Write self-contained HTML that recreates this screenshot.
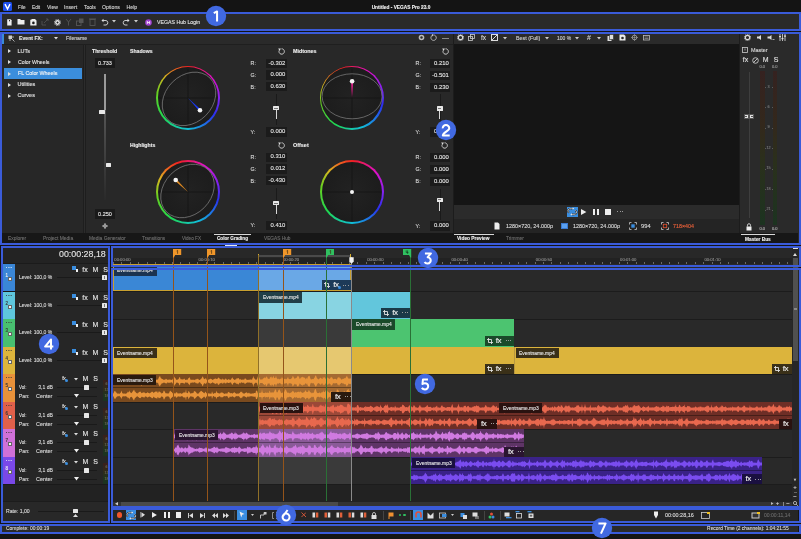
<!DOCTYPE html><html><head><meta charset="utf-8"><style>
html,body{margin:0;padding:0;background:#141414;}
#r{will-change:transform;position:relative;width:801px;height:539px;overflow:hidden;font-family:"Liberation Sans",sans-serif;}
.a{position:absolute;box-sizing:border-box;}
.t{position:absolute;white-space:nowrap;-webkit-text-stroke:0.12px currentColor;}
</style></head><body><div id="r">
<div class="a" style="left:0px;top:0px;width:801px;height:539px;background:#141414;"></div>
<div class="a" style="left:3px;top:2px;width:9px;height:9px;background:#1d4ff0;border-radius:1.5px;"></div>
<svg class="a" style="left:3px;top:2px;" width="9" height="9" viewBox="0 0 9 9"><path d="M2 2.2 L4.5 7 L7 2.2" fill="none" stroke="#fff" stroke-width="1.5"/></svg>
<div class="t" style="left:17.5px;top:3.62px;font-size:5.2px;line-height:6.76px;color:#d2d2d2;transform:scaleX(0.897);transform-origin:left;">File</div>
<div class="t" style="left:32px;top:3.62px;font-size:5.2px;line-height:6.76px;color:#d2d2d2;transform:scaleX(0.916);transform-origin:left;">Edit</div>
<div class="t" style="left:47px;top:3.62px;font-size:5.2px;line-height:6.76px;color:#d2d2d2;transform:scaleX(0.977);transform-origin:left;">View</div>
<div class="t" style="left:64px;top:3.62px;font-size:5.2px;line-height:6.76px;color:#d2d2d2;transform:scaleX(1.017);transform-origin:left;">Insert</div>
<div class="t" style="left:84px;top:3.62px;font-size:5.2px;line-height:6.76px;color:#d2d2d2;transform:scaleX(0.966);transform-origin:left;">Tools</div>
<div class="t" style="left:102px;top:3.62px;font-size:5.2px;line-height:6.76px;color:#d2d2d2;">Options</div>
<div class="t" style="left:126.5px;top:3.62px;font-size:5.2px;line-height:6.76px;color:#d2d2d2;">Help</div>
<div class="t" style="left:300.5px;width:200px;text-align:center;top:3.62px;font-size:5.2px;line-height:6.76px;color:#f0f0f0;font-weight:bold;transform:scaleX(0.922);transform-origin:center;">Untitled - VEGAS Pro 23.0</div>
<div class="a" style="left:0px;top:13px;width:801px;height:17px;background:#2a2a2a;"></div>
<svg class="a" style="left:6.5px;top:18.5px;" width="5" height="7" viewBox="0 0 5 7"><path d="M0.2 0.3 H3.6 L4.6 1.3 V6.5 H0.2 Z" fill="#eee"/><rect x="2" y="1" width="1" height="1.3" fill="#333"/></svg>
<svg class="a" style="left:17px;top:18px;" width="8" height="7" viewBox="0 0 8 7"><path d="M0.5 1 H3 L4 2 H7.5 V6.5 H0.5 Z" fill="#eee"/></svg>
<svg class="a" style="left:29.5px;top:18.5px;" width="7" height="7" viewBox="0 0 7 7"><path d="M0.3 0.8 H1.5 V0 H5 L6.5 1.5 V6.5 H0.3 Z" fill="#eee"/><circle cx="3.4" cy="3.9" r="1.3" fill="#1a1a1a"/></svg>
<svg class="a" style="left:41px;top:18px;" width="8" height="8" viewBox="0 0 8 8"><path d="M1 3 V7 H5 M3 5 L7 1 M5 1 H7 V3" fill="none" stroke="#555" stroke-width="0.8"/></svg>
<svg class="a" style="left:53.5px;top:18.5px;" width="7" height="7" viewBox="0 0 7 7"><circle cx="3.5" cy="3.5" r="2.4" fill="#eee"/><circle cx="3.5" cy="3.5" r="3.1" fill="none" stroke="#eee" stroke-width="0.9" stroke-dasharray="1.1 1.3"/><circle cx="3.5" cy="3.5" r="1" fill="#222"/></svg>
<svg class="a" style="left:65px;top:18px;" width="7" height="8" viewBox="0 0 7 8"><path d="M3.5 7.5 V4 M3.5 4 L1 1 M3.5 4 L6 1" fill="none" stroke="#555" stroke-width="0.9"/></svg>
<svg class="a" style="left:76px;top:18px;" width="8" height="8" viewBox="0 0 8 8"><rect x="0.5" y="3" width="4.5" height="4.5" fill="none" stroke="#555" stroke-width="0.9"/><rect x="3" y="0.5" width="4.5" height="4.5" fill="#555"/></svg>
<svg class="a" style="left:89px;top:18px;" width="7" height="8" viewBox="0 0 7 8"><rect x="1" y="1.5" width="5" height="6" fill="none" stroke="#555" stroke-width="0.9"/><rect x="0" y="0.5" width="7" height="1" fill="#555"/></svg>
<svg class="a" style="left:101px;top:18px;" width="8" height="8" viewBox="0 0 8 8"><path d="M2 2.5 H5 A2.3 2.3 0 0 1 5 7 H2.5" fill="none" stroke="#ddd" stroke-width="0.9"/><path d="M0.5 2.5 L2.5 0.8 V4.2 Z" fill="#ddd"/></svg>
<svg class="a" style="left:112px;top:20px;" width="4" height="3" viewBox="0 0 4 3"><path d="M0 0 H4 L2 2.5 Z" fill="#ccc"/></svg>
<svg class="a" style="left:122px;top:18px;" width="8" height="8" viewBox="0 0 8 8"><path d="M6 2.5 H3 A2.3 2.3 0 0 0 3 7 H5.5" fill="none" stroke="#ddd" stroke-width="0.9"/><path d="M7.5 2.5 L5.5 0.8 V4.2 Z" fill="#ddd"/></svg>
<svg class="a" style="left:134px;top:20px;" width="4" height="3" viewBox="0 0 4 3"><path d="M0 0 H4 L2 2.5 Z" fill="#ccc"/></svg>
<svg class="a" style="left:144.5px;top:18.5px;" width="7" height="7" viewBox="0 0 7 7"><circle cx="3.5" cy="3.5" r="3.3" fill="#a040d0"/><path d="M2.3 2 V5 M4.7 2 V5 M2.3 3.5 H4.7" stroke="#fff" stroke-width="0.8"/></svg>
<div class="t" style="left:156.5px;top:18.62px;font-size:5.2px;line-height:6.76px;color:#e0e0e0;transform:scaleX(1.005);transform-origin:left;">VEGAS Hub Login</div>
<div class="a" style="left:0px;top:32px;width:801px;height:213px;background:#282828;"></div>
<div class="a" style="left:0px;top:33px;width:453px;height:11px;background:#2a2a2a;"></div>
<div class="a" style="left:0px;top:44px;width:453px;height:1px;background:#1f1f1f;"></div>
<div class="a" style="left:2px;top:34px;width:1.5px;height:10px;background:#3a8ad8;"></div>
<svg class="a" style="left:8px;top:34.5px;" width="7" height="7" viewBox="0 0 7 7"><rect x="0.5" y="0.5" width="3.5" height="3.5" fill="#ccc"/><path d="M4 4 L6.5 6.5 M1 5 H3 M5 1 V3" stroke="#ccc" stroke-width="0.8"/></svg>
<div class="t" style="left:19px;top:34.72px;font-size:5.5px;line-height:7.15px;color:#e8e8e8;font-weight:bold;transform:scaleX(0.934);transform-origin:left;">Event FX:</div>
<svg class="a" style="left:53.5px;top:37.3px;" width="4" height="3" viewBox="0 0 4 3"><path d="M0 0 H4 L2 2.5 Z" fill="#ddd"/></svg>
<div class="t" style="left:65.5px;top:34.72px;font-size:5.5px;line-height:7.15px;color:#d8d8d8;transform:scaleX(0.933);transform-origin:left;">Filename</div>
<svg class="a" style="left:418px;top:34px;" width="7" height="7" viewBox="0 0 7 7"><circle cx="3.5" cy="3.5" r="2.8" fill="#bbb"/><circle cx="3.5" cy="3.5" r="1.2" fill="#2a2a2a"/></svg>
<svg class="a" style="left:430px;top:34px;" width="7" height="7" viewBox="0 0 7 7"><path d="M1.5 2 A2.7 2.7 0 1 0 3.5 1 H2" fill="none" stroke="#ccc" stroke-width="0.8"/><path d="M3 0 L1.2 1.2 L3 2.4 Z" fill="#ccc"/></svg>
<div class="a" style="left:442px;top:38px;width:7px;height:0.8px;background:#8a8a8a;"></div>
<div class="a" style="left:0px;top:45px;width:83px;height:188px;background:#272727;"></div>
<div class="a" style="left:83px;top:45px;width:1px;height:188px;background:#1e1e1e;"></div>
<div class="a" style="left:84px;top:45px;width:1px;height:188px;background:#2c2c2c;"></div>
<div class="a" style="left:85px;top:45px;width:1px;height:188px;background:#1e1e1e;"></div>
<div class="a" style="left:4px;top:68px;width:78px;height:11px;background:#3b8edc;"></div>
<svg class="a" style="left:7.5px;top:49px;" width="3" height="4" viewBox="0 0 3 4"><path d="M0 0 L3 2 L0 4 Z" fill="#ddd"/></svg>
<div class="t" style="left:17.5px;top:47.72px;font-size:5.5px;line-height:7.15px;color:#e0e0e0;">LUTs</div>
<svg class="a" style="left:7.5px;top:60.3px;" width="3" height="4" viewBox="0 0 3 4"><path d="M0 0 L3 2 L0 4 Z" fill="#ddd"/></svg>
<div class="t" style="left:17.5px;top:59.02px;font-size:5.5px;line-height:7.15px;color:#e0e0e0;transform:scaleX(0.954);transform-origin:left;">Color Wheels</div>
<svg class="a" style="left:7.5px;top:71.5px;" width="3" height="4" viewBox="0 0 3 4"><path d="M0 0 L3 2 L0 4 Z" fill="#ddd"/></svg>
<div class="t" style="left:17.5px;top:70.22px;font-size:5.5px;line-height:7.15px;color:#f4f4f4;transform:scaleX(0.964);transform-origin:left;">FL Color Wheels</div>
<svg class="a" style="left:7.5px;top:82.5px;" width="3" height="4" viewBox="0 0 3 4"><path d="M0 0 L3 2 L0 4 Z" fill="#ddd"/></svg>
<div class="t" style="left:17.5px;top:81.22px;font-size:5.5px;line-height:7.15px;color:#e0e0e0;">Utilities</div>
<svg class="a" style="left:7.5px;top:93.5px;" width="3" height="4" viewBox="0 0 3 4"><path d="M0 0 L3 2 L0 4 Z" fill="#ddd"/></svg>
<div class="t" style="left:17.5px;top:92.22px;font-size:5.5px;line-height:7.15px;color:#e0e0e0;">Curves</div>
<div class="a" style="left:86px;top:45px;width:367px;height:188px;background:#282828;"></div>
<div class="t" style="left:92.2px;top:47.72px;font-size:5.5px;line-height:7.15px;color:#eeeeee;font-weight:bold;transform:scaleX(0.948);transform-origin:left;">Threshold</div>
<div class="t" style="left:129.7px;top:47.72px;font-size:5.5px;line-height:7.15px;color:#eeeeee;font-weight:bold;transform:scaleX(0.936);transform-origin:left;">Shadows</div>
<div class="a" style="left:95px;top:58px;width:20px;height:10px;background:#1a1a1a;"></div>
<div class="t" style="left:5px;width:200px;text-align:center;top:59.62px;font-size:5.5px;line-height:7.15px;color:#e8e8e8;">0.733</div>
<div class="a" style="left:104px;top:74px;width:1.5px;height:36px;background:#9a9a9a;"></div>
<div class="a" style="left:104px;top:110px;width:1.5px;height:90px;background:linear-gradient(#555,#2a2a2a);"></div>
<div class="a" style="left:98.5px;top:110px;width:6px;height:4px;background:#e8e8e8;border-radius:0.5px;"></div>
<div class="a" style="left:105.5px;top:163px;width:5.5px;height:4px;background:#e8e8e8;border-radius:0.5px;"></div>
<div class="a" style="left:95px;top:209px;width:20px;height:10px;background:#1a1a1a;"></div>
<div class="t" style="left:5px;width:200px;text-align:center;top:210.62px;font-size:5.5px;line-height:7.15px;color:#e8e8e8;">0.250</div>
<svg class="a" style="left:101.5px;top:222.5px;" width="6" height="6" viewBox="0 0 6 6"><path d="M3 0 V6 M0 3 H6" stroke="#bbb" stroke-width="0.9"/><circle cx="3" cy="3" r="1.5" fill="none" stroke="#bbb" stroke-width="0.7"/></svg>
<div class="a" style="left:156px;top:65.7px;width:64px;height:64px;border-radius:50%;background:conic-gradient(from 0deg,#f02020,#e010c8 50deg,#8a20f0 88deg,#2a30f0 122deg,#10c0d8 180deg,#20d850 232deg,#68d020 280deg,#d8b820 312deg,#f06020 338deg,#f02020 360deg);"></div>
<div class="a" style="left:157.7px;top:67.4px;width:60.6px;height:60.6px;border-radius:50%;background:radial-gradient(circle,#222222 0%,#1c1c1c 75%,#141414 100%);"></div>
<svg class="a" style="left:156px;top:65.7px;" width="64" height="64" viewBox="0 0 64 64"><line x1="32" y1="3" x2="32" y2="61" stroke="#141414" stroke-width="0.8"/><line x1="3" y1="32" x2="61" y2="32" stroke="#141414" stroke-width="0.8"/><ellipse cx="33" cy="32.89999999999999" rx="29.6" ry="23.6" transform="rotate(-45 33 32.89999999999999)" fill="none" stroke="#7c7c7c" stroke-width="0.75"/><path d="M32 32 L43.21 45.07 L44.79 43.53 Z" fill="#1838f0"/><circle cx="44" cy="44.3" r="2.3" fill="#f4f4f4"/></svg>
<div class="a" style="left:156px;top:160px;width:64px;height:64px;border-radius:50%;background:conic-gradient(from -18deg,#f02020,#e010c8 50deg,#8a20f0 88deg,#2a30f0 122deg,#10c0d8 180deg,#20d850 232deg,#68d020 280deg,#d8b820 312deg,#f06020 338deg,#f02020 360deg);"></div>
<div class="a" style="left:157.7px;top:161.7px;width:60.6px;height:60.6px;border-radius:50%;background:radial-gradient(circle,#222222 0%,#1c1c1c 75%,#141414 100%);"></div>
<svg class="a" style="left:156px;top:160px;" width="64" height="64" viewBox="0 0 64 64"><line x1="32" y1="3" x2="32" y2="61" stroke="#141414" stroke-width="0.8"/><line x1="3" y1="32" x2="61" y2="32" stroke="#141414" stroke-width="0.8"/><ellipse cx="31.5" cy="31" rx="29.6" ry="23.6" transform="rotate(-45 31.5 31)" fill="none" stroke="#7c7c7c" stroke-width="0.75"/><path d="M32 32 L20.47 19.21 L18.93 20.79 Z" fill="#e08a20"/><circle cx="19.69999999999999" cy="20" r="2.3" fill="#f4f4f4"/></svg>
<div class="a" style="left:319.6px;top:65.7px;width:64px;height:64px;border-radius:50%;background:conic-gradient(from -18deg,#f02020,#e010c8 50deg,#8a20f0 88deg,#2a30f0 122deg,#10c0d8 180deg,#20d850 232deg,#68d020 280deg,#d8b820 312deg,#f06020 338deg,#f02020 360deg);"></div>
<div class="a" style="left:321.3px;top:67.4px;width:60.6px;height:60.6px;border-radius:50%;background:radial-gradient(circle,#222222 0%,#1c1c1c 75%,#141414 100%);"></div>
<svg class="a" style="left:319.6px;top:65.7px;" width="64" height="64" viewBox="0 0 64 64"><line x1="32" y1="3" x2="32" y2="61" stroke="#141414" stroke-width="0.8"/><line x1="3" y1="32" x2="61" y2="32" stroke="#141414" stroke-width="0.8"/><ellipse cx="32.099999999999966" cy="30.299999999999997" rx="30" ry="22.5" transform="rotate(0 32.099999999999966 30.299999999999997)" fill="none" stroke="#7c7c7c" stroke-width="0.75"/><path d="M32 32 L33.20 15.31 L31.00 15.29 Z" fill="#e0208a"/><circle cx="32.099999999999966" cy="15.299999999999997" r="2.3" fill="#f4f4f4"/></svg>
<div class="a" style="left:319.8px;top:159.8px;width:64px;height:64px;border-radius:50%;background:conic-gradient(from 0deg,#f02020,#e010c8 50deg,#8a20f0 88deg,#2a30f0 122deg,#10c0d8 180deg,#20d850 232deg,#68d020 280deg,#d8b820 312deg,#f06020 338deg,#f02020 360deg);"></div>
<div class="a" style="left:321.5px;top:161.5px;width:60.6px;height:60.6px;border-radius:50%;background:radial-gradient(circle,#222222 0%,#1c1c1c 75%,#141414 100%);"></div>
<svg class="a" style="left:319.8px;top:159.8px;" width="64" height="64" viewBox="0 0 64 64"><line x1="32" y1="3" x2="32" y2="61" stroke="#141414" stroke-width="0.8"/><line x1="3" y1="32" x2="61" y2="32" stroke="#141414" stroke-width="0.8"/></svg>
<div class="a" style="left:349.8px;top:189.8px;width:4px;height:4px;background:#f4f4f4;border-radius:50%;"></div>
<div class="t" style="left:129.7px;top:142.03px;font-size:5.5px;line-height:7.15px;color:#eeeeee;font-weight:bold;transform:scaleX(0.941);transform-origin:left;">Highlights</div>
<div class="t" style="left:293px;top:47.72px;font-size:5.5px;line-height:7.15px;color:#eeeeee;font-weight:bold;transform:scaleX(0.978);transform-origin:left;">Midtones</div>
<div class="t" style="left:293.3px;top:141.73px;font-size:5.5px;line-height:7.15px;color:#eeeeee;font-weight:bold;transform:scaleX(0.988);transform-origin:left;">Offset</div>
<svg class="a" style="left:277.7px;top:47.7px;" width="7" height="7" viewBox="0 0 7 7"><path d="M1.2 2.4 A2.7 2.7 0 1 0 3.5 0.8" fill="none" stroke="#dddddd" stroke-width="0.85"/><path d="M0.2 0.6 L2.9 0.4 L1.6 3 Z" fill="#dddddd"/></svg>
<svg class="a" style="left:277.7px;top:142.0px;" width="7" height="7" viewBox="0 0 7 7"><path d="M1.2 2.4 A2.7 2.7 0 1 0 3.5 0.8" fill="none" stroke="#dddddd" stroke-width="0.85"/><path d="M0.2 0.6 L2.9 0.4 L1.6 3 Z" fill="#dddddd"/></svg>
<svg class="a" style="left:441.5px;top:47.8px;" width="7" height="7" viewBox="0 0 7 7"><path d="M1.2 2.4 A2.7 2.7 0 1 0 3.5 0.8" fill="none" stroke="#dddddd" stroke-width="0.85"/><path d="M0.2 0.6 L2.9 0.4 L1.6 3 Z" fill="#dddddd"/></svg>
<svg class="a" style="left:441.3px;top:141.8px;" width="7" height="7" viewBox="0 0 7 7"><path d="M1.2 2.4 A2.7 2.7 0 1 0 3.5 0.8" fill="none" stroke="#dddddd" stroke-width="0.85"/><path d="M0.2 0.6 L2.9 0.4 L1.6 3 Z" fill="#dddddd"/></svg>
<div class="a" style="left:266px;top:58.6px;width:20.5px;height:9.3px;background:#1b1b1b;"></div>
<div class="t" style="right:515.7px;top:59.56px;font-size:5.9px;line-height:7.67px;color:#e4e4e4;">-0.302</div>
<div class="t" style="left:250.6px;top:59.95px;font-size:5.3px;line-height:6.89px;color:#d8d8d8;">R:</div>
<div class="a" style="left:266px;top:70.3px;width:20.5px;height:9.3px;background:#1b1b1b;"></div>
<div class="t" style="right:515.7px;top:71.27px;font-size:5.9px;line-height:7.67px;color:#e4e4e4;">0.000</div>
<div class="t" style="left:250.6px;top:71.66px;font-size:5.3px;line-height:6.89px;color:#d8d8d8;">G:</div>
<div class="a" style="left:266px;top:82.2px;width:20.5px;height:9.3px;background:#1b1b1b;"></div>
<div class="t" style="right:515.7px;top:83.17px;font-size:5.9px;line-height:7.67px;color:#e4e4e4;">0.630</div>
<div class="t" style="left:250.6px;top:83.56px;font-size:5.3px;line-height:6.89px;color:#d8d8d8;">B:</div>
<div class="a" style="left:276px;top:94px;width:1px;height:31px;background:#1a1a1a;"></div>
<div class="a" style="left:275.6px;top:109px;width:1.2px;height:10px;background:#d8d8d8;"></div>
<div class="a" style="left:273px;top:106px;width:6px;height:4.3px;background:#e8e8e8;border-radius:0.5px;"></div>
<div class="a" style="left:274.2px;top:107.8px;width:3.6px;height:0.7px;background:#777;"></div>
<div class="a" style="left:266px;top:127.3px;width:20.5px;height:9.3px;background:#1b1b1b;"></div>
<div class="t" style="right:515.7px;top:128.26px;font-size:5.9px;line-height:7.67px;color:#e4e4e4;">0.000</div>
<div class="t" style="left:250.6px;top:128.66px;font-size:5.3px;line-height:6.89px;color:#d8d8d8;">Y:</div>
<div class="a" style="left:266px;top:152.5px;width:20.5px;height:9.3px;background:#1b1b1b;"></div>
<div class="t" style="right:515.7px;top:153.47px;font-size:5.9px;line-height:7.67px;color:#e4e4e4;">0.310</div>
<div class="t" style="left:250.6px;top:153.86px;font-size:5.3px;line-height:6.89px;color:#d8d8d8;">R:</div>
<div class="a" style="left:266px;top:164.3px;width:20.5px;height:9.3px;background:#1b1b1b;"></div>
<div class="t" style="right:515.7px;top:165.27px;font-size:5.9px;line-height:7.67px;color:#e4e4e4;">0.012</div>
<div class="t" style="left:250.6px;top:165.66px;font-size:5.3px;line-height:6.89px;color:#d8d8d8;">G:</div>
<div class="a" style="left:266px;top:176.2px;width:20.5px;height:9.3px;background:#1b1b1b;"></div>
<div class="t" style="right:515.7px;top:177.16px;font-size:5.9px;line-height:7.67px;color:#e4e4e4;">-0.430</div>
<div class="t" style="left:250.6px;top:177.56px;font-size:5.3px;line-height:6.89px;color:#d8d8d8;">B:</div>
<div class="a" style="left:276px;top:188px;width:1px;height:31px;background:#1a1a1a;"></div>
<div class="a" style="left:275.6px;top:204px;width:1.2px;height:10px;background:#d8d8d8;"></div>
<div class="a" style="left:273px;top:201px;width:6px;height:4.3px;background:#e8e8e8;border-radius:0.5px;"></div>
<div class="a" style="left:274.2px;top:202.8px;width:3.6px;height:0.7px;background:#777;"></div>
<div class="a" style="left:266px;top:221px;width:20.5px;height:9.3px;background:#1b1b1b;"></div>
<div class="t" style="right:515.7px;top:221.97px;font-size:5.9px;line-height:7.67px;color:#e4e4e4;">0.410</div>
<div class="t" style="left:250.6px;top:222.36px;font-size:5.3px;line-height:6.89px;color:#d8d8d8;">Y:</div>
<div class="a" style="left:429.5px;top:58.7px;width:20.5px;height:9.3px;background:#1b1b1b;"></div>
<div class="t" style="right:352.2px;top:59.66px;font-size:5.9px;line-height:7.67px;color:#e4e4e4;">0.210</div>
<div class="t" style="left:415.6px;top:60.05px;font-size:5.3px;line-height:6.89px;color:#d8d8d8;">R:</div>
<div class="a" style="left:429.5px;top:70.7px;width:20.5px;height:9.3px;background:#1b1b1b;"></div>
<div class="t" style="right:352.2px;top:71.67px;font-size:5.9px;line-height:7.67px;color:#e4e4e4;">-0.501</div>
<div class="t" style="left:415.6px;top:72.06px;font-size:5.3px;line-height:6.89px;color:#d8d8d8;">G:</div>
<div class="a" style="left:429.5px;top:82.7px;width:20.5px;height:9.3px;background:#1b1b1b;"></div>
<div class="t" style="right:352.2px;top:83.67px;font-size:5.9px;line-height:7.67px;color:#e4e4e4;">0.230</div>
<div class="t" style="left:415.6px;top:84.06px;font-size:5.3px;line-height:6.89px;color:#d8d8d8;">B:</div>
<div class="a" style="left:439.5px;top:94px;width:1px;height:31px;background:#1a1a1a;"></div>
<div class="a" style="left:439.1px;top:109.3px;width:1.2px;height:10px;background:#d8d8d8;"></div>
<div class="a" style="left:436.5px;top:106.3px;width:6px;height:4.3px;background:#e8e8e8;border-radius:0.5px;"></div>
<div class="a" style="left:437.7px;top:108.1px;width:3.6px;height:0.7px;background:#777;"></div>
<div class="a" style="left:429.5px;top:127.3px;width:20.5px;height:9.3px;background:#1b1b1b;"></div>
<div class="t" style="right:352.2px;top:128.26px;font-size:5.9px;line-height:7.67px;color:#e4e4e4;">0.000</div>
<div class="t" style="left:415.6px;top:128.66px;font-size:5.3px;line-height:6.89px;color:#d8d8d8;">Y:</div>
<div class="a" style="left:429.5px;top:153px;width:20.5px;height:9.3px;background:#1b1b1b;"></div>
<div class="t" style="right:352.2px;top:153.97px;font-size:5.9px;line-height:7.67px;color:#e4e4e4;">0.000</div>
<div class="t" style="left:415.6px;top:154.36px;font-size:5.3px;line-height:6.89px;color:#d8d8d8;">R:</div>
<div class="a" style="left:429.5px;top:164.6px;width:20.5px;height:9.3px;background:#1b1b1b;"></div>
<div class="t" style="right:352.2px;top:165.56px;font-size:5.9px;line-height:7.67px;color:#e4e4e4;">0.000</div>
<div class="t" style="left:415.6px;top:165.96px;font-size:5.3px;line-height:6.89px;color:#d8d8d8;">G:</div>
<div class="a" style="left:429.5px;top:176.6px;width:20.5px;height:9.3px;background:#1b1b1b;"></div>
<div class="t" style="right:352.2px;top:177.56px;font-size:5.9px;line-height:7.67px;color:#e4e4e4;">0.000</div>
<div class="t" style="left:415.6px;top:177.96px;font-size:5.3px;line-height:6.89px;color:#d8d8d8;">B:</div>
<div class="a" style="left:439.5px;top:188.5px;width:1px;height:31px;background:#1a1a1a;"></div>
<div class="a" style="left:439.1px;top:200.5px;width:1.2px;height:10px;background:#d8d8d8;"></div>
<div class="a" style="left:436.5px;top:197.5px;width:6px;height:4.3px;background:#e8e8e8;border-radius:0.5px;"></div>
<div class="a" style="left:437.7px;top:199.3px;width:3.6px;height:0.7px;background:#777;"></div>
<div class="a" style="left:429.5px;top:221.3px;width:20.5px;height:9.3px;background:#1b1b1b;"></div>
<div class="t" style="right:352.2px;top:222.27px;font-size:5.9px;line-height:7.67px;color:#e4e4e4;">0.000</div>
<div class="t" style="left:415.6px;top:222.66px;font-size:5.3px;line-height:6.89px;color:#d8d8d8;">Y:</div>
<div class="a" style="left:452.5px;top:33px;width:1.5px;height:200px;background:#1c1c1c;"></div>
<div class="a" style="left:454px;top:33px;width:285px;height:11px;background:#2a2a2a;"></div>
<div class="a" style="left:454px;top:44px;width:285px;height:161px;background:#151515;"></div>
<div class="a" style="left:454px;top:205px;width:285px;height:14px;background:#2b2b2b;"></div>
<div class="a" style="left:454px;top:218.7px;width:285px;height:0.6px;background:#1e1e1e;"></div>
<div class="a" style="left:454px;top:219px;width:285px;height:14px;background:#242424;"></div>
<div class="a" style="left:739px;top:33px;width:1px;height:200px;background:#1c1c1c;"></div>
<svg class="a" style="left:456.5px;top:34px;" width="7" height="7" viewBox="0 0 7 7"><circle cx="3.5" cy="3.5" r="2.2" fill="none" stroke="#ddd" stroke-width="1.2"/><circle cx="3.5" cy="3.5" r="3.2" fill="none" stroke="#ddd" stroke-width="0.9" stroke-dasharray="1 1"/></svg>
<svg class="a" style="left:468px;top:34px;" width="7" height="7" viewBox="0 0 7 7"><rect x="0.5" y="2.5" width="4" height="4" fill="none" stroke="#ccc" stroke-width="0.8"/><rect x="2.5" y="0.5" width="4" height="4" fill="none" stroke="#ccc" stroke-width="0.8"/></svg>
<div class="t" style="left:383.5px;width:200px;text-align:center;top:33.67px;font-size:6.5px;line-height:8.45px;color:#ddd;">fx</div>
<svg class="a" style="left:491px;top:34px;" width="7" height="7" viewBox="0 0 7 7"><rect x="0.5" y="0.5" width="6" height="6" fill="none" stroke="#ddd" stroke-width="1"/><path d="M1 6 L6 1" stroke="#ddd" stroke-width="1"/></svg>
<svg class="a" style="left:503px;top:37px;" width="4" height="3" viewBox="0 0 4 3"><path d="M0 0 H4 L2 2.5 Z" fill="#ccc"/></svg>
<div class="t" style="left:515.5px;top:34.76px;font-size:5.3px;line-height:6.89px;color:#cfcfcf;transform:scaleX(1.005);transform-origin:left;">Best (Full)</div>
<svg class="a" style="left:545px;top:37px;" width="4" height="3" viewBox="0 0 4 3"><path d="M0 0 H4 L2 2.5 Z" fill="#ccc"/></svg>
<div class="t" style="left:557px;top:34.76px;font-size:5.3px;line-height:6.89px;color:#cfcfcf;transform:scaleX(0.948);transform-origin:left;">100 %</div>
<svg class="a" style="left:575px;top:37px;" width="4" height="3" viewBox="0 0 4 3"><path d="M0 0 H4 L2 2.5 Z" fill="#ccc"/></svg>
<div class="t" style="left:489px;width:200px;text-align:center;top:33.45px;font-size:7px;line-height:9.1px;color:#ccc;">#</div>
<svg class="a" style="left:597px;top:37px;" width="4" height="3" viewBox="0 0 4 3"><path d="M0 0 H4 L2 2.5 Z" fill="#ccc"/></svg>
<svg class="a" style="left:607px;top:34px;" width="7" height="7" viewBox="0 0 7 7"><rect x="0.5" y="2" width="4" height="5" fill="#ddd"/><rect x="2.5" y="0.5" width="4" height="5" fill="#ddd" stroke="#2a2a2a" stroke-width="0.6"/></svg>
<svg class="a" style="left:619px;top:34px;" width="7" height="7" viewBox="0 0 7 7"><path d="M0.5 0.5 H5 L6.5 2 V6.5 H0.5 Z" fill="#eee"/><circle cx="3.5" cy="4" r="1.3" fill="#2a2a2a"/></svg>
<svg class="a" style="left:631px;top:34px;" width="7" height="7" viewBox="0 0 7 7"><circle cx="3.5" cy="3.5" r="2.3" fill="none" stroke="#aaa" stroke-width="0.8"/><path d="M3.5 0 V7 M0 3.5 H7" stroke="#aaa" stroke-width="0.5"/></svg>
<svg class="a" style="left:643px;top:34px;" width="7" height="7" viewBox="0 0 7 7"><rect x="0.5" y="1.5" width="6" height="4.5" fill="none" stroke="#bbb" stroke-width="0.8"/><path d="M1.5 3 H5.5 M1.5 4.5 H5.5" stroke="#bbb" stroke-width="0.5"/></svg>
<div class="a" style="left:567px;top:206.8px;width:10.5px;height:10.1px;background:#3a8ee0;"></div>
<svg class="a" style="left:567.2px;top:207.3px;" width="10.5" height="9" viewBox="0 0 10.5 9"><path d="M2.2 5.6 A3 2.2 0 0 1 4.5 1.6 H5.8 M8.3 3.4 A3 2.2 0 0 1 6 7.4 H4.7" fill="none" stroke="#222" stroke-width="1.6"/><path d="M2.2 5.6 A3 2.2 0 0 1 4.5 1.6 H5.8 M8.3 3.4 A3 2.2 0 0 1 6 7.4 H4.7" fill="none" stroke="#eee" stroke-width="0.7"/><path d="M5.6 0.4 L7.2 1.6 L5.6 2.8 Z M4.9 6.2 L3.3 7.4 L4.9 8.6 Z" fill="#eee"/></svg>
<svg class="a" style="left:581.4px;top:209px;" width="5.5" height="6" viewBox="0 0 5.5 6"><path d="M0 0 L5.4 3 L0 6 Z" fill="#eee"/></svg>
<div class="a" style="left:592.9px;top:208.8px;width:2.1px;height:5.9px;background:#eee;"></div>
<div class="a" style="left:597.2px;top:208.8px;width:2.1px;height:5.9px;background:#eee;"></div>
<div class="a" style="left:605px;top:208.6px;width:5.7px;height:6.1px;background:#eee;"></div>
<div class="a" style="left:617.3px;top:210.9px;width:1px;height:1px;background:#9a9a9a;"></div>
<div class="a" style="left:619.8px;top:210.9px;width:1px;height:1px;background:#9a9a9a;"></div>
<div class="a" style="left:622.3px;top:210.9px;width:1px;height:1px;background:#9a9a9a;"></div>
<svg class="a" style="left:494px;top:222px;" width="6" height="8" viewBox="0 0 6 8"><path d="M0.5 0.5 H4 L5.5 2 V7.5 H0.5 Z" fill="#eee"/></svg>
<div class="t" style="left:505.5px;top:222.56px;font-size:5.3px;line-height:6.89px;color:#d8d8d8;transform:scaleX(1.026);transform-origin:left;">1280×720, 24.000p</div>
<div class="a" style="left:561px;top:223px;width:7px;height:6px;background:#3a7ad0;"></div>
<div class="a" style="left:562px;top:224px;width:5px;height:4px;background:#5aa0f0;"></div>
<div class="t" style="left:573px;top:222.56px;font-size:5.3px;line-height:6.89px;color:#d8d8d8;transform:scaleX(1.026);transform-origin:left;">1280×720, 24.000p</div>
<svg class="a" style="left:628.5px;top:222px;" width="8" height="8" viewBox="0 0 8 8"><path d="M0.5 2.5 V0.5 H2.5 M5.5 0.5 H7.5 V2.5 M7.5 5.5 V7.5 H5.5 M2.5 7.5 H0.5 V5.5" fill="none" stroke="#ccc" stroke-width="0.8"/><rect x="2.3" y="2.3" width="3.4" height="3.4" fill="#3a8ee0"/></svg>
<div class="t" style="left:640.6px;top:222.56px;font-size:5.3px;line-height:6.89px;color:#d8d8d8;transform:scaleX(1.086);transform-origin:left;">994</div>
<svg class="a" style="left:660.5px;top:222px;" width="8" height="8" viewBox="0 0 8 8"><path d="M0.5 2.5 V0.5 H2.5 M5.5 0.5 H7.5 V2.5 M7.5 5.5 V7.5 H5.5 M2.5 7.5 H0.5 V5.5" fill="none" stroke="#ccc" stroke-width="0.8"/><rect x="2.3" y="2.3" width="3.4" height="3.4" fill="none" stroke="#e05030" stroke-width="0.8"/></svg>
<div class="t" style="left:673px;top:222.56px;font-size:5.3px;line-height:6.89px;color:#e8603a;transform:scaleX(1.011);transform-origin:left;">718×404</div>
<div class="a" style="left:740px;top:33px;width:58px;height:200px;background:#2a2a2a;"></div>
<svg class="a" style="left:743.5px;top:34px;" width="7" height="7" viewBox="0 0 7 7"><circle cx="3.5" cy="3.5" r="2.2" fill="none" stroke="#ddd" stroke-width="1.2"/><circle cx="3.5" cy="3.5" r="3.2" fill="none" stroke="#ddd" stroke-width="0.9" stroke-dasharray="1 1"/></svg>
<svg class="a" style="left:755.5px;top:34px;" width="7" height="7" viewBox="0 0 7 7"><path d="M1 2.5 H3 L5 1 V6 L3 4.5 H1 Z" fill="#ddd"/></svg>
<svg class="a" style="left:767px;top:34px;" width="8" height="7" viewBox="0 0 8 7"><path d="M0.5 2.5 H2.5 L4.5 1 V6 L2.5 4.5 H0.5 Z" fill="#ddd"/><path d="M5.5 5.5 H7.5" stroke="#ddd" stroke-width="0.7"/></svg>
<svg class="a" style="left:779px;top:34px;" width="7" height="7" viewBox="0 0 7 7"><path d="M1 0 V7 M3.5 0 V7 M6 0 V7" stroke="#ddd" stroke-width="0.8"/><rect x="0" y="2" width="2" height="1.2" fill="#ddd"/><rect x="2.5" y="4" width="2" height="1.2" fill="#ddd"/><rect x="5" y="1.5" width="2" height="1.2" fill="#ddd"/></svg>
<svg class="a" style="left:742px;top:47px;" width="6" height="6" viewBox="0 0 6 6"><rect x="0.5" y="0.5" width="5" height="5" fill="none" stroke="#ccc" stroke-width="0.8"/><path d="M3 1.5 V3.5" stroke="#ccc" stroke-width="0.7"/></svg>
<div class="t" style="left:751px;top:46.76px;font-size:5.3px;line-height:6.89px;color:#d8d8d8;transform:scaleX(1.024);transform-origin:left;">Master</div>
<div class="t" style="left:645.5px;width:200px;text-align:center;top:55.25px;font-size:7px;line-height:9.1px;color:#e0e0e0;">fx</div>
<svg class="a" style="left:752px;top:56.5px;" width="7" height="7" viewBox="0 0 7 7"><circle cx="3.5" cy="3.5" r="2.8" fill="none" stroke="#ccc" stroke-width="0.9"/><path d="M1.5 5.5 L5.5 1.5" stroke="#ccc" stroke-width="0.9"/></svg>
<div class="t" style="left:665.6px;width:200px;text-align:center;top:55.25px;font-size:7px;line-height:9.1px;color:#e0e0e0;">M</div>
<div class="t" style="left:676px;width:200px;text-align:center;top:55.25px;font-size:7px;line-height:9.1px;color:#e0e0e0;">S</div>
<div class="t" style="left:662.2px;width:200px;text-align:center;top:64.20px;font-size:4px;line-height:5.2px;color:#999;">0.0</div>
<div class="t" style="left:674.8px;width:200px;text-align:center;top:64.20px;font-size:4px;line-height:5.2px;color:#999;">0.0</div>
<div class="a" style="left:760px;top:71.2px;width:4.6px;height:154px;background:linear-gradient(#352220 0%,#33281c 35%,#2a301c 60%,#1c3320 100%);"></div>
<div class="a" style="left:772.6px;top:71.2px;width:4.6px;height:154px;background:linear-gradient(#352220 0%,#33281c 35%,#2a301c 60%,#1c3320 100%);"></div>
<div class="a" style="left:749px;top:72px;width:0.8px;height:146px;background:#3e3e3e;"></div>
<div class="a" style="left:743.5px;top:114px;width:5px;height:5.3px;background:#e0e0e0;border:0.5px solid #555;"></div>
<div class="a" style="left:749px;top:114px;width:5px;height:5.3px;background:#e0e0e0;border:0.5px solid #555;"></div>
<div class="a" style="left:745px;top:116.4px;width:2px;height:0.6px;background:#555;"></div>
<div class="a" style="left:750.5px;top:116.4px;width:2px;height:0.6px;background:#555;"></div>
<div class="t" style="left:668.5px;width:200px;text-align:center;top:84.83px;font-size:3.8px;line-height:4.94px;color:#7a7a7a;">3</div>
<div class="a" style="left:765px;top:87.3px;width:1px;height:0.6px;background:#5a5a5a;"></div>
<div class="a" style="left:771.5px;top:87.3px;width:1px;height:0.6px;background:#5a5a5a;"></div>
<div class="t" style="left:668.5px;width:200px;text-align:center;top:104.93px;font-size:3.8px;line-height:4.94px;color:#7a7a7a;">6</div>
<div class="a" style="left:765px;top:107.4px;width:1px;height:0.6px;background:#5a5a5a;"></div>
<div class="a" style="left:771.5px;top:107.4px;width:1px;height:0.6px;background:#5a5a5a;"></div>
<div class="t" style="left:668.5px;width:200px;text-align:center;top:125.03px;font-size:3.8px;line-height:4.94px;color:#7a7a7a;">9</div>
<div class="a" style="left:765px;top:127.5px;width:1px;height:0.6px;background:#5a5a5a;"></div>
<div class="a" style="left:771.5px;top:127.5px;width:1px;height:0.6px;background:#5a5a5a;"></div>
<div class="t" style="left:668.5px;width:200px;text-align:center;top:145.53px;font-size:3.8px;line-height:4.94px;color:#7a7a7a;">12</div>
<div class="a" style="left:765px;top:148px;width:1px;height:0.6px;background:#5a5a5a;"></div>
<div class="a" style="left:771.5px;top:148px;width:1px;height:0.6px;background:#5a5a5a;"></div>
<div class="t" style="left:668.5px;width:200px;text-align:center;top:166.03px;font-size:3.8px;line-height:4.94px;color:#7a7a7a;">15</div>
<div class="a" style="left:765px;top:168.5px;width:1px;height:0.6px;background:#5a5a5a;"></div>
<div class="a" style="left:771.5px;top:168.5px;width:1px;height:0.6px;background:#5a5a5a;"></div>
<div class="t" style="left:668.5px;width:200px;text-align:center;top:186.53px;font-size:3.8px;line-height:4.94px;color:#7a7a7a;">18</div>
<div class="a" style="left:765px;top:189px;width:1px;height:0.6px;background:#5a5a5a;"></div>
<div class="a" style="left:771.5px;top:189px;width:1px;height:0.6px;background:#5a5a5a;"></div>
<div class="t" style="left:668.5px;width:200px;text-align:center;top:207.03px;font-size:3.8px;line-height:4.94px;color:#7a7a7a;">21</div>
<div class="a" style="left:765px;top:209.5px;width:1px;height:0.6px;background:#5a5a5a;"></div>
<div class="a" style="left:771.5px;top:209.5px;width:1px;height:0.6px;background:#5a5a5a;"></div>
<svg class="a" style="left:745.5px;top:223.3px;" width="6" height="8" viewBox="0 0 6 8"><path d="M1.5 3.5 V2.2 A1.5 1.5 0 0 1 4.5 2.2 V3.5" fill="none" stroke="#eee" stroke-width="0.8"/><rect x="0.5" y="3.5" width="5" height="4" fill="#eee"/></svg>
<div class="t" style="left:662.2px;width:200px;text-align:center;top:226.00px;font-size:4px;line-height:5.2px;color:#b0b0b0;">0.0</div>
<div class="t" style="left:674.8px;width:200px;text-align:center;top:226.00px;font-size:4px;line-height:5.2px;color:#b0b0b0;">0.0</div>
<div class="a" style="left:0px;top:233px;width:798px;height:11px;background:#171717;"></div>
<div class="t" style="left:7.5px;top:235.32px;font-size:5.2px;line-height:6.76px;color:#6e6e6e;transform:scaleX(0.942);transform-origin:left;">Explorer</div>
<div class="t" style="left:43px;top:235.32px;font-size:5.2px;line-height:6.76px;color:#6e6e6e;transform:scaleX(0.952);transform-origin:left;">Project Media</div>
<div class="t" style="left:89px;top:235.32px;font-size:5.2px;line-height:6.76px;color:#6e6e6e;transform:scaleX(0.940);transform-origin:left;">Media Generator</div>
<div class="t" style="left:142.3px;top:235.32px;font-size:5.2px;line-height:6.76px;color:#6e6e6e;transform:scaleX(0.921);transform-origin:left;">Transitions</div>
<div class="t" style="left:181.7px;top:235.32px;font-size:5.2px;line-height:6.76px;color:#6e6e6e;transform:scaleX(0.894);transform-origin:left;">Video FX</div>
<div class="t" style="left:217px;top:235.32px;font-size:5.2px;line-height:6.76px;color:#f2f2f2;font-weight:bold;transform:scaleX(0.889);transform-origin:left;">Color Grading</div>
<div class="t" style="left:263.5px;top:235.32px;font-size:5.2px;line-height:6.76px;color:#6e6e6e;transform:scaleX(0.919);transform-origin:left;">VEGAS Hub</div>
<div class="a" style="left:213.6px;top:233.5px;width:37.5px;height:1px;background:#d8d8d8;"></div>
<div class="t" style="left:457px;top:235.32px;font-size:5.2px;line-height:6.76px;color:#f2f2f2;font-weight:bold;transform:scaleX(0.926);transform-origin:left;">Video Preview</div>
<div class="a" style="left:453.7px;top:233.5px;width:40px;height:1px;background:#d8d8d8;"></div>
<div class="t" style="left:506px;top:235.32px;font-size:5.2px;line-height:6.76px;color:#6e6e6e;transform:scaleX(0.928);transform-origin:left;">Trimmer</div>
<div class="t" style="left:744.8px;top:235.62px;font-size:5.2px;line-height:6.76px;color:#f2f2f2;font-weight:bold;transform:scaleX(0.922);transform-origin:left;">Master Bus</div>
<div class="a" style="left:740.5px;top:233.5px;width:34px;height:1px;background:#d8d8d8;"></div>
<div class="a" style="left:2px;top:247px;width:107px;height:275px;background:#262626;"></div>
<div class="a" style="left:2px;top:248px;width:107px;height:15.5px;background:#232323;"></div>
<div class="t" style="right:694.8px;top:247.83px;font-size:9.8px;line-height:12.74px;color:#e4e4e4;transform:scaleX(0.904);transform-origin:right;">00:00:28,18</div>
<div class="a" style="left:2px;top:263.2px;width:107px;height:0.8px;background:#1b1b1b;"></div>
<div class="a" style="left:111px;top:247px;width:687px;height:259px;background:#292929;"></div>
<div class="a" style="left:111px;top:247px;width:687px;height:10.5px;background:#282828;"></div>
<div class="a" style="left:111px;top:257.5px;width:687px;height:6.7px;background:#222222;"></div>
<div class="a" style="left:3px;top:264px;width:12px;height:27px;background:#3a86d6;"></div>
<div class="a" style="left:15px;top:264px;width:94px;height:27px;background:#262626;"></div>
<div class="a" style="left:2px;top:291px;width:107px;height:1px;background:#1a1a1a;"></div>
<div class="t" style="left:-91.2px;width:200px;text-align:center;top:263.05px;font-size:7px;line-height:9.1px;color:#d8e0f0;">···</div>
<div class="t" style="left:5.5px;top:272.68px;font-size:4.5px;line-height:5.85px;color:#f0f0f0;">1</div>
<div class="a" style="left:8.2px;top:277.3px;width:4px;height:4px;background:#f4f4f4;border:0.4px solid #666;"></div>
<div class="a" style="left:111px;top:291px;width:687px;height:1px;background:#1c1c1c;"></div>
<div class="a" style="left:72.2px;top:265.8px;width:4.2px;height:4.2px;background:#3a8ee0;"></div>
<div class="a" style="left:75.8px;top:269px;width:2.6px;height:2.8px;background:#f0f0f0;"></div>
<div class="t" style="left:-15px;width:200px;text-align:center;top:265.15px;font-size:7px;line-height:9.1px;color:#e6e6e6;">fx</div>
<div class="t" style="left:-4.5px;width:200px;text-align:center;top:265.15px;font-size:7px;line-height:9.1px;color:#e6e6e6;">M</div>
<div class="t" style="left:5.5px;width:200px;text-align:center;top:265.15px;font-size:7px;line-height:9.1px;color:#e6e6e6;">S</div>
<div class="t" style="left:19px;top:274.22px;font-size:5.2px;line-height:6.76px;color:#dadada;transform:scaleX(0.967);transform-origin:left;">Level: 100,0 %</div>
<div class="a" style="left:57px;top:277.3px;width:45px;height:0.8px;background:#1a1a1a;"></div>
<div class="a" style="left:102.2px;top:275px;width:4.8px;height:5px;background:#e6e6e6;border-radius:0.5px;"></div>
<div class="a" style="left:104.4px;top:275.8px;width:0.6px;height:3.3px;background:#777;"></div>
<div class="a" style="left:3px;top:292px;width:12px;height:26.5px;background:#5ec6dc;"></div>
<div class="a" style="left:15px;top:292px;width:94px;height:26.5px;background:#262626;"></div>
<div class="a" style="left:2px;top:318.5px;width:107px;height:1px;background:#1a1a1a;"></div>
<div class="t" style="left:-91.2px;width:200px;text-align:center;top:291.05px;font-size:7px;line-height:9.1px;color:#3c3c3c;">···</div>
<div class="t" style="left:5.5px;top:300.68px;font-size:4.5px;line-height:5.85px;color:#333;">2</div>
<div class="a" style="left:8.2px;top:305.3px;width:4px;height:4px;background:#f4f4f4;border:0.4px solid #666;"></div>
<div class="a" style="left:111px;top:318.5px;width:687px;height:1px;background:#1c1c1c;"></div>
<div class="a" style="left:72.2px;top:293.8px;width:4.2px;height:4.2px;background:#3a8ee0;"></div>
<div class="a" style="left:75.8px;top:297px;width:2.6px;height:2.8px;background:#f0f0f0;"></div>
<div class="t" style="left:-15px;width:200px;text-align:center;top:293.15px;font-size:7px;line-height:9.1px;color:#e6e6e6;">fx</div>
<div class="t" style="left:-4.5px;width:200px;text-align:center;top:293.15px;font-size:7px;line-height:9.1px;color:#e6e6e6;">M</div>
<div class="t" style="left:5.5px;width:200px;text-align:center;top:293.15px;font-size:7px;line-height:9.1px;color:#e6e6e6;">S</div>
<div class="t" style="left:19px;top:302.22px;font-size:5.2px;line-height:6.76px;color:#dadada;transform:scaleX(0.967);transform-origin:left;">Level: 100,0 %</div>
<div class="a" style="left:57px;top:305.3px;width:45px;height:0.8px;background:#1a1a1a;"></div>
<div class="a" style="left:102.2px;top:303px;width:4.8px;height:5px;background:#e6e6e6;border-radius:0.5px;"></div>
<div class="a" style="left:104.4px;top:303.8px;width:0.6px;height:3.3px;background:#777;"></div>
<div class="a" style="left:3px;top:319px;width:12px;height:27.5px;background:#48c070;"></div>
<div class="a" style="left:15px;top:319px;width:94px;height:27.5px;background:#262626;"></div>
<div class="a" style="left:2px;top:346.5px;width:107px;height:1px;background:#1a1a1a;"></div>
<div class="t" style="left:-91.2px;width:200px;text-align:center;top:318.05px;font-size:7px;line-height:9.1px;color:#3c3c3c;">···</div>
<div class="t" style="left:5.5px;top:327.68px;font-size:4.5px;line-height:5.85px;color:#333;">3</div>
<div class="a" style="left:8.2px;top:332.3px;width:4px;height:4px;background:#f4f4f4;border:0.4px solid #666;"></div>
<div class="a" style="left:111px;top:346.5px;width:687px;height:1px;background:#1c1c1c;"></div>
<div class="a" style="left:72.2px;top:320.8px;width:4.2px;height:4.2px;background:#3a8ee0;"></div>
<div class="a" style="left:75.8px;top:324px;width:2.6px;height:2.8px;background:#f0f0f0;"></div>
<div class="t" style="left:-15px;width:200px;text-align:center;top:320.15px;font-size:7px;line-height:9.1px;color:#e6e6e6;">fx</div>
<div class="t" style="left:-4.5px;width:200px;text-align:center;top:320.15px;font-size:7px;line-height:9.1px;color:#e6e6e6;">M</div>
<div class="t" style="left:5.5px;width:200px;text-align:center;top:320.15px;font-size:7px;line-height:9.1px;color:#e6e6e6;">S</div>
<div class="t" style="left:19px;top:329.22px;font-size:5.2px;line-height:6.76px;color:#dadada;transform:scaleX(0.967);transform-origin:left;">Level: 100,0 %</div>
<div class="a" style="left:57px;top:332.3px;width:45px;height:0.8px;background:#1a1a1a;"></div>
<div class="a" style="left:102.2px;top:330px;width:4.8px;height:5px;background:#e6e6e6;border-radius:0.5px;"></div>
<div class="a" style="left:104.4px;top:330.8px;width:0.6px;height:3.3px;background:#777;"></div>
<div class="a" style="left:3px;top:347px;width:12px;height:26.7px;background:#dcb43c;"></div>
<div class="a" style="left:15px;top:347px;width:94px;height:26.7px;background:#262626;"></div>
<div class="a" style="left:2px;top:373.7px;width:107px;height:1px;background:#1a1a1a;"></div>
<div class="t" style="left:-91.2px;width:200px;text-align:center;top:346.05px;font-size:7px;line-height:9.1px;color:#3c3c3c;">···</div>
<div class="t" style="left:5.5px;top:355.68px;font-size:4.5px;line-height:5.85px;color:#333;">4</div>
<div class="a" style="left:8.2px;top:360.3px;width:4px;height:4px;background:#f4f4f4;border:0.4px solid #666;"></div>
<div class="a" style="left:111px;top:373.7px;width:687px;height:1px;background:#1c1c1c;"></div>
<div class="a" style="left:72.2px;top:348.8px;width:4.2px;height:4.2px;background:#3a8ee0;"></div>
<div class="a" style="left:75.8px;top:352px;width:2.6px;height:2.8px;background:#f0f0f0;"></div>
<div class="t" style="left:-15px;width:200px;text-align:center;top:348.15px;font-size:7px;line-height:9.1px;color:#e6e6e6;">fx</div>
<div class="t" style="left:-4.5px;width:200px;text-align:center;top:348.15px;font-size:7px;line-height:9.1px;color:#e6e6e6;">M</div>
<div class="t" style="left:5.5px;width:200px;text-align:center;top:348.15px;font-size:7px;line-height:9.1px;color:#e6e6e6;">S</div>
<div class="t" style="left:19px;top:357.22px;font-size:5.2px;line-height:6.76px;color:#dadada;transform:scaleX(0.967);transform-origin:left;">Level: 100,0 %</div>
<div class="a" style="left:57px;top:360.3px;width:45px;height:0.8px;background:#1a1a1a;"></div>
<div class="a" style="left:102.2px;top:358px;width:4.8px;height:5px;background:#e6e6e6;border-radius:0.5px;"></div>
<div class="a" style="left:104.4px;top:358.8px;width:0.6px;height:3.3px;background:#777;"></div>
<div class="a" style="left:3px;top:374px;width:12px;height:27.5px;background:#e8913a;"></div>
<div class="a" style="left:15px;top:374px;width:94px;height:27.5px;background:#262626;"></div>
<div class="a" style="left:2px;top:401.5px;width:107px;height:1px;background:#1a1a1a;"></div>
<div class="t" style="left:-91.2px;width:200px;text-align:center;top:373.05px;font-size:7px;line-height:9.1px;color:#3c3c3c;">···</div>
<div class="t" style="left:5.5px;top:382.68px;font-size:4.5px;line-height:5.85px;color:#333;">5</div>
<div class="a" style="left:8.2px;top:387.3px;width:4px;height:4px;background:#f4f4f4;border:0.4px solid #666;"></div>
<div class="a" style="left:111px;top:401.5px;width:687px;height:1px;background:#1c1c1c;"></div>
<div class="t" style="left:-36.2px;width:200px;text-align:center;top:374.55px;font-size:5px;line-height:6.5px;color:#e6e6e6;letter-spacing:-0.3px;">fx</div>
<div class="a" style="left:64.8px;top:379px;width:3.1px;height:3.1px;background:#3a8ee0;border-radius:50%;"></div>
<svg class="a" style="left:73.5px;top:378px;" width="4" height="3" viewBox="0 0 4 3"><path d="M0 0 H4 L2 2.5 Z" fill="#ddd"/></svg>
<div class="t" style="left:-14.5px;width:200px;text-align:center;top:374.45px;font-size:7px;line-height:9.1px;color:#e6e6e6;">M</div>
<div class="t" style="left:-4.5px;width:200px;text-align:center;top:374.45px;font-size:7px;line-height:9.1px;color:#e6e6e6;">S</div>
<div class="t" style="left:18.8px;top:384.22px;font-size:5.2px;line-height:6.76px;color:#dadada;transform:scaleX(0.866);transform-origin:left;">Vol:</div>
<div class="t" style="right:748px;top:384.22px;font-size:5.2px;line-height:6.76px;color:#dadada;transform:scaleX(0.983);transform-origin:right;">3,1 dB</div>
<div class="a" style="left:57px;top:387.3px;width:40px;height:0.8px;background:#1a1a1a;"></div>
<div class="a" style="left:83.8px;top:385.2px;width:5.2px;height:4.8px;background:#e6e6e6;border-radius:0.5px;"></div>
<div class="t" style="left:18.8px;top:392.92px;font-size:5.2px;line-height:6.76px;color:#dadada;">Pan:</div>
<div class="t" style="left:36.3px;top:392.92px;font-size:5.2px;line-height:6.76px;color:#dadada;transform:scaleX(1.043);transform-origin:left;">Center</div>
<div class="a" style="left:57px;top:396px;width:40px;height:0.8px;background:#1a1a1a;"></div>
<svg class="a" style="left:74px;top:393.5px;" width="5" height="4" viewBox="0 0 5 4"><path d="M0 0 H5 L2.5 3.5 Z" fill="#eee"/></svg>
<div class="a" style="left:102.5px;top:380.4px;width:5.5px;height:20.3px;background:linear-gradient(#3a1f1c,#2e2c1c 45%,#1d3320 75%,#1c3320);"></div>
<div class="t" style="left:6.5px;width:200px;text-align:center;top:381.73px;font-size:3.5px;line-height:4.55px;color:#6a6a5a;">6</div>
<div class="t" style="left:6.5px;width:200px;text-align:center;top:387.73px;font-size:3.5px;line-height:4.55px;color:#6a6a5a;">12</div>
<div class="t" style="left:6.5px;width:200px;text-align:center;top:393.73px;font-size:3.5px;line-height:4.55px;color:#6a6a5a;">18</div>
<div class="a" style="left:3px;top:402px;width:12px;height:26.7px;background:#e0604a;"></div>
<div class="a" style="left:15px;top:402px;width:94px;height:26.7px;background:#262626;"></div>
<div class="a" style="left:2px;top:428.7px;width:107px;height:1px;background:#1a1a1a;"></div>
<div class="t" style="left:-91.2px;width:200px;text-align:center;top:401.05px;font-size:7px;line-height:9.1px;color:#3c3c3c;">···</div>
<div class="t" style="left:5.5px;top:410.68px;font-size:4.5px;line-height:5.85px;color:#333;">6</div>
<div class="a" style="left:8.2px;top:415.3px;width:4px;height:4px;background:#f4f4f4;border:0.4px solid #666;"></div>
<div class="a" style="left:111px;top:428.7px;width:687px;height:1px;background:#1c1c1c;"></div>
<div class="t" style="left:-36.2px;width:200px;text-align:center;top:402.55px;font-size:5px;line-height:6.5px;color:#e6e6e6;letter-spacing:-0.3px;">fx</div>
<div class="a" style="left:64.8px;top:407px;width:3.1px;height:3.1px;background:#3a8ee0;border-radius:50%;"></div>
<svg class="a" style="left:73.5px;top:406px;" width="4" height="3" viewBox="0 0 4 3"><path d="M0 0 H4 L2 2.5 Z" fill="#ddd"/></svg>
<div class="t" style="left:-14.5px;width:200px;text-align:center;top:402.45px;font-size:7px;line-height:9.1px;color:#e6e6e6;">M</div>
<div class="t" style="left:-4.5px;width:200px;text-align:center;top:402.45px;font-size:7px;line-height:9.1px;color:#e6e6e6;">S</div>
<div class="t" style="left:18.8px;top:412.22px;font-size:5.2px;line-height:6.76px;color:#dadada;transform:scaleX(0.866);transform-origin:left;">Vol:</div>
<div class="t" style="right:748px;top:412.22px;font-size:5.2px;line-height:6.76px;color:#dadada;transform:scaleX(0.983);transform-origin:right;">3,1 dB</div>
<div class="a" style="left:57px;top:415.3px;width:40px;height:0.8px;background:#1a1a1a;"></div>
<div class="a" style="left:83.8px;top:413.2px;width:5.2px;height:4.8px;background:#e6e6e6;border-radius:0.5px;"></div>
<div class="t" style="left:18.8px;top:420.92px;font-size:5.2px;line-height:6.76px;color:#dadada;">Pan:</div>
<div class="t" style="left:36.3px;top:420.92px;font-size:5.2px;line-height:6.76px;color:#dadada;transform:scaleX(1.043);transform-origin:left;">Center</div>
<div class="a" style="left:57px;top:424px;width:40px;height:0.8px;background:#1a1a1a;"></div>
<svg class="a" style="left:74px;top:421.5px;" width="5" height="4" viewBox="0 0 5 4"><path d="M0 0 H5 L2.5 3.5 Z" fill="#eee"/></svg>
<div class="a" style="left:102.5px;top:408.4px;width:5.5px;height:20.3px;background:linear-gradient(#3a1f1c,#2e2c1c 45%,#1d3320 75%,#1c3320);"></div>
<div class="t" style="left:6.5px;width:200px;text-align:center;top:409.73px;font-size:3.5px;line-height:4.55px;color:#6a6a5a;">6</div>
<div class="t" style="left:6.5px;width:200px;text-align:center;top:415.73px;font-size:3.5px;line-height:4.55px;color:#6a6a5a;">12</div>
<div class="t" style="left:6.5px;width:200px;text-align:center;top:421.73px;font-size:3.5px;line-height:4.55px;color:#6a6a5a;">18</div>
<div class="a" style="left:3px;top:429px;width:12px;height:27.7px;background:#d070d8;"></div>
<div class="a" style="left:15px;top:429px;width:94px;height:27.7px;background:#262626;"></div>
<div class="a" style="left:2px;top:456.7px;width:107px;height:1px;background:#1a1a1a;"></div>
<div class="t" style="left:-91.2px;width:200px;text-align:center;top:428.05px;font-size:7px;line-height:9.1px;color:#3c3c3c;">···</div>
<div class="t" style="left:5.5px;top:437.68px;font-size:4.5px;line-height:5.85px;color:#333;">7</div>
<div class="a" style="left:8.2px;top:442.3px;width:4px;height:4px;background:#f4f4f4;border:0.4px solid #666;"></div>
<div class="a" style="left:111px;top:456.7px;width:687px;height:1px;background:#1c1c1c;"></div>
<div class="t" style="left:-36.2px;width:200px;text-align:center;top:429.55px;font-size:5px;line-height:6.5px;color:#e6e6e6;letter-spacing:-0.3px;">fx</div>
<div class="a" style="left:64.8px;top:434px;width:3.1px;height:3.1px;background:#3a8ee0;border-radius:50%;"></div>
<svg class="a" style="left:73.5px;top:433px;" width="4" height="3" viewBox="0 0 4 3"><path d="M0 0 H4 L2 2.5 Z" fill="#ddd"/></svg>
<div class="t" style="left:-14.5px;width:200px;text-align:center;top:429.45px;font-size:7px;line-height:9.1px;color:#e6e6e6;">M</div>
<div class="t" style="left:-4.5px;width:200px;text-align:center;top:429.45px;font-size:7px;line-height:9.1px;color:#e6e6e6;">S</div>
<div class="t" style="left:18.8px;top:439.22px;font-size:5.2px;line-height:6.76px;color:#dadada;transform:scaleX(0.866);transform-origin:left;">Vol:</div>
<div class="t" style="right:748px;top:439.22px;font-size:5.2px;line-height:6.76px;color:#dadada;transform:scaleX(0.983);transform-origin:right;">3,1 dB</div>
<div class="a" style="left:57px;top:442.3px;width:40px;height:0.8px;background:#1a1a1a;"></div>
<div class="a" style="left:83.8px;top:440.2px;width:5.2px;height:4.8px;background:#e6e6e6;border-radius:0.5px;"></div>
<div class="t" style="left:18.8px;top:447.92px;font-size:5.2px;line-height:6.76px;color:#dadada;">Pan:</div>
<div class="t" style="left:36.3px;top:447.92px;font-size:5.2px;line-height:6.76px;color:#dadada;transform:scaleX(1.043);transform-origin:left;">Center</div>
<div class="a" style="left:57px;top:451px;width:40px;height:0.8px;background:#1a1a1a;"></div>
<svg class="a" style="left:74px;top:448.5px;" width="5" height="4" viewBox="0 0 5 4"><path d="M0 0 H5 L2.5 3.5 Z" fill="#eee"/></svg>
<div class="a" style="left:102.5px;top:435.4px;width:5.5px;height:20.3px;background:linear-gradient(#3a1f1c,#2e2c1c 45%,#1d3320 75%,#1c3320);"></div>
<div class="t" style="left:6.5px;width:200px;text-align:center;top:436.73px;font-size:3.5px;line-height:4.55px;color:#6a6a5a;">6</div>
<div class="t" style="left:6.5px;width:200px;text-align:center;top:442.73px;font-size:3.5px;line-height:4.55px;color:#6a6a5a;">12</div>
<div class="t" style="left:6.5px;width:200px;text-align:center;top:448.73px;font-size:3.5px;line-height:4.55px;color:#6a6a5a;">18</div>
<div class="a" style="left:3px;top:457px;width:12px;height:27px;background:#7a48e8;"></div>
<div class="a" style="left:15px;top:457px;width:94px;height:27px;background:#262626;"></div>
<div class="a" style="left:2px;top:484px;width:107px;height:1px;background:#1a1a1a;"></div>
<div class="t" style="left:-91.2px;width:200px;text-align:center;top:456.05px;font-size:7px;line-height:9.1px;color:#d8e0f0;">···</div>
<div class="t" style="left:5.5px;top:465.68px;font-size:4.5px;line-height:5.85px;color:#f0f0f0;">8</div>
<div class="a" style="left:8.2px;top:470.3px;width:4px;height:4px;background:#f4f4f4;border:0.4px solid #666;"></div>
<div class="a" style="left:111px;top:484px;width:687px;height:1px;background:#1c1c1c;"></div>
<div class="t" style="left:-36.2px;width:200px;text-align:center;top:457.55px;font-size:5px;line-height:6.5px;color:#e6e6e6;letter-spacing:-0.3px;">fx</div>
<div class="a" style="left:64.8px;top:462px;width:3.1px;height:3.1px;background:#3a8ee0;border-radius:50%;"></div>
<svg class="a" style="left:73.5px;top:461px;" width="4" height="3" viewBox="0 0 4 3"><path d="M0 0 H4 L2 2.5 Z" fill="#ddd"/></svg>
<div class="t" style="left:-14.5px;width:200px;text-align:center;top:457.45px;font-size:7px;line-height:9.1px;color:#e6e6e6;">M</div>
<div class="t" style="left:-4.5px;width:200px;text-align:center;top:457.45px;font-size:7px;line-height:9.1px;color:#e6e6e6;">S</div>
<div class="t" style="left:18.8px;top:467.22px;font-size:5.2px;line-height:6.76px;color:#dadada;transform:scaleX(0.866);transform-origin:left;">Vol:</div>
<div class="t" style="right:748px;top:467.22px;font-size:5.2px;line-height:6.76px;color:#dadada;transform:scaleX(0.983);transform-origin:right;">3,1 dB</div>
<div class="a" style="left:57px;top:470.3px;width:40px;height:0.8px;background:#1a1a1a;"></div>
<div class="a" style="left:83.8px;top:468.2px;width:5.2px;height:4.8px;background:#e6e6e6;border-radius:0.5px;"></div>
<div class="t" style="left:18.8px;top:475.92px;font-size:5.2px;line-height:6.76px;color:#dadada;">Pan:</div>
<div class="t" style="left:36.3px;top:475.92px;font-size:5.2px;line-height:6.76px;color:#dadada;transform:scaleX(1.043);transform-origin:left;">Center</div>
<div class="a" style="left:57px;top:479px;width:40px;height:0.8px;background:#1a1a1a;"></div>
<svg class="a" style="left:74px;top:476.5px;" width="5" height="4" viewBox="0 0 5 4"><path d="M0 0 H5 L2.5 3.5 Z" fill="#eee"/></svg>
<div class="a" style="left:102.5px;top:463.4px;width:5.5px;height:20.3px;background:linear-gradient(#3a1f1c,#2e2c1c 45%,#1d3320 75%,#1c3320);"></div>
<div class="t" style="left:6.5px;width:200px;text-align:center;top:464.73px;font-size:3.5px;line-height:4.55px;color:#6a6a5a;">6</div>
<div class="t" style="left:6.5px;width:200px;text-align:center;top:470.73px;font-size:3.5px;line-height:4.55px;color:#6a6a5a;">12</div>
<div class="t" style="left:6.5px;width:200px;text-align:center;top:476.73px;font-size:3.5px;line-height:4.55px;color:#6a6a5a;">18</div>
<div class="a" style="left:2px;top:484.5px;width:107px;height:16.5px;background:#222222;"></div>
<div class="a" style="left:2px;top:501px;width:107px;height:0.8px;background:#1c1c1c;"></div>
<div class="a" style="left:2px;top:502px;width:107px;height:20px;background:#282828;"></div>
<div class="t" style="left:5.5px;top:507.82px;font-size:5.2px;line-height:6.76px;color:#dadada;transform:scaleX(0.990);transform-origin:left;">Rate: 1,00</div>
<div class="a" style="left:38px;top:510.8px;width:66px;height:0.8px;background:#1a1a1a;"></div>
<div class="a" style="left:72.8px;top:508.5px;width:5px;height:4.6px;background:#e6e6e6;border-radius:0.5px;"></div>
<svg class="a" style="left:73px;top:513.5px;" width="5" height="3" viewBox="0 0 5 3"><path d="M2.5 0 L5 3 H0 Z" fill="#ddd"/></svg>
<div class="a" style="left:113.0px;top:262px;width:0.8px;height:1.8px;background:#6a6a6a;"></div>
<div class="a" style="left:121.43px;top:262px;width:0.8px;height:1.8px;background:#6a6a6a;"></div>
<div class="a" style="left:129.86px;top:262px;width:0.8px;height:1.8px;background:#6a6a6a;"></div>
<div class="a" style="left:138.29px;top:262px;width:0.8px;height:1.8px;background:#6a6a6a;"></div>
<div class="a" style="left:146.72px;top:262px;width:0.8px;height:1.8px;background:#6a6a6a;"></div>
<div class="a" style="left:155.15px;top:262px;width:0.8px;height:1.8px;background:#6a6a6a;"></div>
<div class="a" style="left:163.57999999999998px;top:262px;width:0.8px;height:1.8px;background:#6a6a6a;"></div>
<div class="a" style="left:172.01px;top:262px;width:0.8px;height:1.8px;background:#6a6a6a;"></div>
<div class="a" style="left:180.44px;top:262px;width:0.8px;height:1.8px;background:#6a6a6a;"></div>
<div class="a" style="left:188.87px;top:262px;width:0.8px;height:1.8px;background:#6a6a6a;"></div>
<div class="a" style="left:197.3px;top:262px;width:0.8px;height:1.8px;background:#6a6a6a;"></div>
<div class="a" style="left:205.73px;top:262px;width:0.8px;height:1.8px;background:#6a6a6a;"></div>
<div class="a" style="left:214.16px;top:262px;width:0.8px;height:1.8px;background:#6a6a6a;"></div>
<div class="a" style="left:222.59px;top:262px;width:0.8px;height:1.8px;background:#6a6a6a;"></div>
<div class="a" style="left:231.01999999999998px;top:262px;width:0.8px;height:1.8px;background:#6a6a6a;"></div>
<div class="a" style="left:239.45px;top:262px;width:0.8px;height:1.8px;background:#6a6a6a;"></div>
<div class="a" style="left:247.88px;top:262px;width:0.8px;height:1.8px;background:#6a6a6a;"></div>
<div class="a" style="left:256.31px;top:262px;width:0.8px;height:1.8px;background:#6a6a6a;"></div>
<div class="a" style="left:264.74px;top:262px;width:0.8px;height:1.8px;background:#6a6a6a;"></div>
<div class="a" style="left:273.16999999999996px;top:262px;width:0.8px;height:1.8px;background:#6a6a6a;"></div>
<div class="a" style="left:281.6px;top:262px;width:0.8px;height:1.8px;background:#6a6a6a;"></div>
<div class="a" style="left:290.03px;top:262px;width:0.8px;height:1.8px;background:#6a6a6a;"></div>
<div class="a" style="left:298.46px;top:262px;width:0.8px;height:1.8px;background:#6a6a6a;"></div>
<div class="a" style="left:306.89px;top:262px;width:0.8px;height:1.8px;background:#6a6a6a;"></div>
<div class="a" style="left:315.32px;top:262px;width:0.8px;height:1.8px;background:#6a6a6a;"></div>
<div class="a" style="left:323.75px;top:262px;width:0.8px;height:1.8px;background:#6a6a6a;"></div>
<div class="a" style="left:332.18px;top:262px;width:0.8px;height:1.8px;background:#6a6a6a;"></div>
<div class="a" style="left:340.61px;top:262px;width:0.8px;height:1.8px;background:#6a6a6a;"></div>
<div class="a" style="left:349.03999999999996px;top:262px;width:0.8px;height:1.8px;background:#6a6a6a;"></div>
<div class="a" style="left:357.47px;top:262px;width:0.8px;height:1.8px;background:#6a6a6a;"></div>
<div class="a" style="left:365.9px;top:262px;width:0.8px;height:1.8px;background:#6a6a6a;"></div>
<div class="a" style="left:374.33px;top:262px;width:0.8px;height:1.8px;background:#6a6a6a;"></div>
<div class="a" style="left:382.76px;top:262px;width:0.8px;height:1.8px;background:#6a6a6a;"></div>
<div class="a" style="left:391.19px;top:262px;width:0.8px;height:1.8px;background:#6a6a6a;"></div>
<div class="a" style="left:399.62px;top:262px;width:0.8px;height:1.8px;background:#6a6a6a;"></div>
<div class="a" style="left:408.05px;top:262px;width:0.8px;height:1.8px;background:#6a6a6a;"></div>
<div class="a" style="left:416.48px;top:262px;width:0.8px;height:1.8px;background:#6a6a6a;"></div>
<div class="a" style="left:424.90999999999997px;top:262px;width:0.8px;height:1.8px;background:#6a6a6a;"></div>
<div class="a" style="left:433.34px;top:262px;width:0.8px;height:1.8px;background:#6a6a6a;"></div>
<div class="a" style="left:441.77px;top:262px;width:0.8px;height:1.8px;background:#6a6a6a;"></div>
<div class="a" style="left:450.2px;top:262px;width:0.8px;height:1.8px;background:#6a6a6a;"></div>
<div class="a" style="left:458.63px;top:262px;width:0.8px;height:1.8px;background:#6a6a6a;"></div>
<div class="a" style="left:467.06px;top:262px;width:0.8px;height:1.8px;background:#6a6a6a;"></div>
<div class="a" style="left:475.49px;top:262px;width:0.8px;height:1.8px;background:#6a6a6a;"></div>
<div class="a" style="left:483.91999999999996px;top:262px;width:0.8px;height:1.8px;background:#6a6a6a;"></div>
<div class="a" style="left:492.34999999999997px;top:262px;width:0.8px;height:1.8px;background:#6a6a6a;"></div>
<div class="a" style="left:500.78px;top:262px;width:0.8px;height:1.8px;background:#6a6a6a;"></div>
<div class="a" style="left:509.21px;top:262px;width:0.8px;height:1.8px;background:#6a6a6a;"></div>
<div class="a" style="left:517.64px;top:262px;width:0.8px;height:1.8px;background:#6a6a6a;"></div>
<div class="a" style="left:526.0699999999999px;top:262px;width:0.8px;height:1.8px;background:#6a6a6a;"></div>
<div class="a" style="left:534.5px;top:262px;width:0.8px;height:1.8px;background:#6a6a6a;"></div>
<div class="a" style="left:542.9300000000001px;top:262px;width:0.8px;height:1.8px;background:#6a6a6a;"></div>
<div class="a" style="left:551.36px;top:262px;width:0.8px;height:1.8px;background:#6a6a6a;"></div>
<div class="a" style="left:559.79px;top:262px;width:0.8px;height:1.8px;background:#6a6a6a;"></div>
<div class="a" style="left:568.22px;top:262px;width:0.8px;height:1.8px;background:#6a6a6a;"></div>
<div class="a" style="left:576.65px;top:262px;width:0.8px;height:1.8px;background:#6a6a6a;"></div>
<div class="a" style="left:585.0799999999999px;top:262px;width:0.8px;height:1.8px;background:#6a6a6a;"></div>
<div class="a" style="left:593.51px;top:262px;width:0.8px;height:1.8px;background:#6a6a6a;"></div>
<div class="a" style="left:601.94px;top:262px;width:0.8px;height:1.8px;background:#6a6a6a;"></div>
<div class="a" style="left:610.37px;top:262px;width:0.8px;height:1.8px;background:#6a6a6a;"></div>
<div class="a" style="left:618.8px;top:262px;width:0.8px;height:1.8px;background:#6a6a6a;"></div>
<div class="a" style="left:627.23px;top:262px;width:0.8px;height:1.8px;background:#6a6a6a;"></div>
<div class="a" style="left:635.66px;top:262px;width:0.8px;height:1.8px;background:#6a6a6a;"></div>
<div class="a" style="left:644.09px;top:262px;width:0.8px;height:1.8px;background:#6a6a6a;"></div>
<div class="a" style="left:652.52px;top:262px;width:0.8px;height:1.8px;background:#6a6a6a;"></div>
<div class="a" style="left:660.9499999999999px;top:262px;width:0.8px;height:1.8px;background:#6a6a6a;"></div>
<div class="a" style="left:669.38px;top:262px;width:0.8px;height:1.8px;background:#6a6a6a;"></div>
<div class="a" style="left:677.81px;top:262px;width:0.8px;height:1.8px;background:#6a6a6a;"></div>
<div class="a" style="left:686.24px;top:262px;width:0.8px;height:1.8px;background:#6a6a6a;"></div>
<div class="a" style="left:694.67px;top:262px;width:0.8px;height:1.8px;background:#6a6a6a;"></div>
<div class="a" style="left:703.1px;top:262px;width:0.8px;height:1.8px;background:#6a6a6a;"></div>
<div class="a" style="left:711.53px;top:262px;width:0.8px;height:1.8px;background:#6a6a6a;"></div>
<div class="a" style="left:719.96px;top:262px;width:0.8px;height:1.8px;background:#6a6a6a;"></div>
<div class="a" style="left:728.39px;top:262px;width:0.8px;height:1.8px;background:#6a6a6a;"></div>
<div class="a" style="left:736.8199999999999px;top:262px;width:0.8px;height:1.8px;background:#6a6a6a;"></div>
<div class="a" style="left:745.25px;top:262px;width:0.8px;height:1.8px;background:#6a6a6a;"></div>
<div class="a" style="left:753.68px;top:262px;width:0.8px;height:1.8px;background:#6a6a6a;"></div>
<div class="a" style="left:762.11px;top:262px;width:0.8px;height:1.8px;background:#6a6a6a;"></div>
<div class="a" style="left:770.54px;top:262px;width:0.8px;height:1.8px;background:#6a6a6a;"></div>
<div class="a" style="left:778.97px;top:262px;width:0.8px;height:1.8px;background:#6a6a6a;"></div>
<div class="a" style="left:787.4px;top:262px;width:0.8px;height:1.8px;background:#6a6a6a;"></div>
<div class="t" style="left:114.3px;top:256.97px;font-size:4.2px;line-height:5.46px;color:#8c8c8c;">00:00:00</div>
<div class="t" style="left:198.60000000000002px;top:256.97px;font-size:4.2px;line-height:5.46px;color:#8c8c8c;">00:00:10</div>
<div class="t" style="left:282.90000000000003px;top:256.97px;font-size:4.2px;line-height:5.46px;color:#8c8c8c;">00:00:20</div>
<div class="t" style="left:367.2px;top:256.97px;font-size:4.2px;line-height:5.46px;color:#8c8c8c;">00:00:30</div>
<div class="t" style="left:451.5px;top:256.97px;font-size:4.2px;line-height:5.46px;color:#8c8c8c;">00:00:40</div>
<div class="t" style="left:535.8px;top:256.97px;font-size:4.2px;line-height:5.46px;color:#8c8c8c;">00:00:50</div>
<div class="t" style="left:620.0999999999999px;top:256.97px;font-size:4.2px;line-height:5.46px;color:#8c8c8c;">00:01:00</div>
<div class="t" style="left:704.4px;top:256.97px;font-size:4.2px;line-height:5.46px;color:#8c8c8c;">00:01:10</div>
<div class="a" style="left:258.5px;top:254.5px;width:92.5px;height:2.2px;background:#4a4a4a;"></div>
<div class="a" style="left:258px;top:253.5px;width:1.2px;height:4px;background:#d8b030;"></div>
<div class="a" style="left:350px;top:253.5px;width:1.2px;height:4px;background:#d8b030;"></div>
<div class="a" style="left:113px;top:264px;width:238px;height:27px;background:#3a87d6;"></div>
<div class="a" style="left:258.5px;top:264px;width:92.5px;height:27px;background:#6aa8e6;"></div>
<div class="a" style="left:113.5px;top:265.3px;width:43px;height:10.3px;background:#1b3350;"></div>
<div class="t" style="left:117.0px;top:267.25px;font-size:5.3px;line-height:6.89px;color:#e6e6e6;transform:scaleX(0.923);transform-origin:left;">Eventname.mp4</div>
<div class="a" style="left:113px;top:264px;width:238px;height:27.3px;border:1px solid #c8a030;"></div>
<div class="a" style="left:322px;top:280.3px;width:28.5px;height:10px;background:#1d3a58;"></div>
<svg class="a" style="left:324.2px;top:282.3px;" width="6" height="6" viewBox="0 0 6 6"><path d="M1.5 0 V4.5 H6 M0 1.5 H4.5 V6" fill="none" stroke="#e0e0e0" stroke-width="0.9"/></svg>
<div class="t" style="left:235.89999999999998px;width:200px;text-align:center;top:280.40px;font-size:8px;line-height:10.4px;color:#f0f0f0;letter-spacing:-0.4px;">fx</div>
<div class="a" style="left:343.0px;top:284.90000000000003px;width:1.1px;height:1.1px;background:#9c9c9c;"></div>
<div class="a" style="left:345.4px;top:284.90000000000003px;width:1.1px;height:1.1px;background:#9c9c9c;"></div>
<div class="a" style="left:347.8px;top:284.90000000000003px;width:1.1px;height:1.1px;background:#9c9c9c;"></div>
<div class="a" style="left:337.5px;top:285.8px;width:3px;height:3px;background:#3a8ee0;border-radius:50%;"></div>
<div class="a" style="left:258.5px;top:292px;width:92.5px;height:26.5px;background:#88d4e2;"></div>
<div class="a" style="left:351px;top:292px;width:59.2px;height:26.5px;background:#62c6dc;"></div>
<div class="a" style="left:259px;top:292.3px;width:43px;height:10.3px;background:#213f48;"></div>
<div class="t" style="left:262.5px;top:294.25px;font-size:5.3px;line-height:6.89px;color:#e6e6e6;transform:scaleX(0.923);transform-origin:left;">Eventname.mp4</div>
<div class="a" style="left:381.1px;top:307.8px;width:28.599999999999966px;height:10px;background:#1a3a48;"></div>
<svg class="a" style="left:383.3px;top:309.8px;" width="6" height="6" viewBox="0 0 6 6"><path d="M1.5 0 V4.5 H6 M0 1.5 H4.5 V6" fill="none" stroke="#e0e0e0" stroke-width="0.9"/></svg>
<div class="t" style="left:295.0px;width:200px;text-align:center;top:307.90px;font-size:8px;line-height:10.4px;color:#f0f0f0;letter-spacing:-0.4px;">fx</div>
<div class="a" style="left:402.1px;top:312.40000000000003px;width:1.1px;height:1.1px;background:#9c9c9c;"></div>
<div class="a" style="left:404.5px;top:312.40000000000003px;width:1.1px;height:1.1px;background:#9c9c9c;"></div>
<div class="a" style="left:406.90000000000003px;top:312.40000000000003px;width:1.1px;height:1.1px;background:#9c9c9c;"></div>
<div class="a" style="left:258.5px;top:319px;width:92.5px;height:27.5px;background:#3a3a3a;"></div>
<div class="a" style="left:351px;top:319px;width:162.5px;height:27.5px;background:#4cc470;"></div>
<div class="a" style="left:352px;top:319.3px;width:43px;height:10.3px;background:#1a4a2a;"></div>
<div class="t" style="left:355.5px;top:321.25px;font-size:5.3px;line-height:6.89px;color:#e6e6e6;transform:scaleX(0.923);transform-origin:left;">Eventname.mp4</div>
<div class="a" style="left:484.5px;top:335.5px;width:29.0px;height:10px;background:#1a4a2a;"></div>
<svg class="a" style="left:486.7px;top:337.5px;" width="6" height="6" viewBox="0 0 6 6"><path d="M1.5 0 V4.5 H6 M0 1.5 H4.5 V6" fill="none" stroke="#e0e0e0" stroke-width="0.9"/></svg>
<div class="t" style="left:398.4px;width:200px;text-align:center;top:335.60px;font-size:8px;line-height:10.4px;color:#f0f0f0;letter-spacing:-0.4px;">fx</div>
<div class="a" style="left:505.5px;top:340.1px;width:1.1px;height:1.1px;background:#9c9c9c;"></div>
<div class="a" style="left:507.9px;top:340.1px;width:1.1px;height:1.1px;background:#9c9c9c;"></div>
<div class="a" style="left:510.3px;top:340.1px;width:1.1px;height:1.1px;background:#9c9c9c;"></div>
<div class="a" style="left:113px;top:347px;width:679px;height:26.7px;background:#dcb43c;"></div>
<div class="a" style="left:258.5px;top:347px;width:92.5px;height:26.7px;background:#e6c870;"></div>
<div class="a" style="left:351px;top:347px;width:0.8px;height:26.7px;background:#b89840;"></div>
<div class="a" style="left:513.5px;top:347px;width:0.8px;height:26.7px;background:#b89840;"></div>
<div class="a" style="left:113.5px;top:347.8px;width:43px;height:10.3px;background:#3a3018;"></div>
<div class="t" style="left:117.0px;top:349.75px;font-size:5.3px;line-height:6.89px;color:#e6e6e6;transform:scaleX(0.923);transform-origin:left;">Eventname.mp4</div>
<div class="a" style="left:515.5px;top:347.8px;width:43px;height:10.3px;background:#3a3018;"></div>
<div class="t" style="left:519.0px;top:349.75px;font-size:5.3px;line-height:6.89px;color:#e6e6e6;transform:scaleX(0.923);transform-origin:left;">Eventname.mp4</div>
<div class="a" style="left:484.5px;top:363.5px;width:29.0px;height:10px;background:#3a3018;"></div>
<svg class="a" style="left:486.7px;top:365.5px;" width="6" height="6" viewBox="0 0 6 6"><path d="M1.5 0 V4.5 H6 M0 1.5 H4.5 V6" fill="none" stroke="#e0e0e0" stroke-width="0.9"/></svg>
<div class="t" style="left:398.4px;width:200px;text-align:center;top:363.60px;font-size:8px;line-height:10.4px;color:#f0f0f0;letter-spacing:-0.4px;">fx</div>
<div class="a" style="left:505.5px;top:368.1px;width:1.1px;height:1.1px;background:#9c9c9c;"></div>
<div class="a" style="left:507.9px;top:368.1px;width:1.1px;height:1.1px;background:#9c9c9c;"></div>
<div class="a" style="left:510.3px;top:368.1px;width:1.1px;height:1.1px;background:#9c9c9c;"></div>
<div class="a" style="left:771.5px;top:363.5px;width:20.5px;height:10px;background:#3a3018;"></div>
<svg class="a" style="left:773.7px;top:365.5px;" width="6" height="6" viewBox="0 0 6 6"><path d="M1.5 0 V4.5 H6 M0 1.5 H4.5 V6" fill="none" stroke="#e0e0e0" stroke-width="0.9"/></svg>
<div class="t" style="left:685.4000000000001px;width:200px;text-align:center;top:363.60px;font-size:8px;line-height:10.4px;color:#f0f0f0;letter-spacing:-0.4px;">fx</div>
<div class="a" style="left:113px;top:374px;width:238px;height:27.5px;background:#7a4a1e;"></div>
<div class="a" style="left:258.5px;top:374px;width:92.5px;height:27.5px;background:#a56a32;"></div>
<div class="a" style="left:113px;top:387.35px;width:238px;height:0.9px;background:rgba(0,0,0,0.35);"></div>
<svg class="a" style="left:113px;top:374px;" width="238" height="27.5" viewBox="0 0 238 27.5"><path d="M0.0 5.4 L0.5 5.0 L1.0 3.6 L1.5 3.7 L2.0 4.9 L2.5 5.2 L3.0 5.9 L3.5 5.6 L4.0 5.5 L4.5 4.5 L5.0 3.5 L5.5 3.8 L6.0 4.8 L6.5 5.4 L7.0 5.3 L7.5 4.6 L8.0 4.9 L8.5 4.6 L9.0 5.3 L9.5 4.4 L10.0 4.5 L10.5 3.8 L11.0 4.1 L11.5 4.6 L12.0 4.1 L12.5 4.7 L13.0 5.7 L13.5 6.1 L14.0 5.7 L14.5 5.7 L15.0 5.8 L15.5 5.5 L16.0 5.8 L16.5 5.7 L17.0 4.7 L17.5 5.4 L18.0 4.0 L18.5 5.1 L19.0 4.9 L19.5 5.7 L20.0 5.6 L20.5 5.8 L21.0 5.7 L21.5 5.1 L22.0 5.2 L22.5 4.2 L23.0 3.5 L23.5 3.6 L24.0 4.8 L24.5 5.0 L25.0 5.5 L25.5 4.6 L26.0 3.8 L26.5 3.6 L27.0 3.7 L27.5 4.1 L28.0 2.9 L28.5 2.7 L29.0 4.5 L29.5 4.7 L30.0 4.9 L30.5 4.0 L31.0 4.5 L31.5 5.2 L32.0 5.3 L32.5 4.6 L33.0 5.1 L33.5 4.3 L34.0 3.1 L34.5 4.9 L35.0 4.4 L35.5 5.5 L36.0 5.2 L36.5 5.3 L37.0 5.2 L37.5 5.6 L38.0 5.7 L38.5 5.1 L39.0 4.6 L39.5 4.0 L40.0 5.1 L40.5 4.4 L41.0 5.7 L41.5 5.4 L42.0 5.8 L42.5 4.9 L43.0 5.9 L43.5 5.4 L44.0 5.8 L44.5 5.6 L45.0 5.5 L45.5 4.2 L46.0 3.0 L46.5 2.7 L47.0 1.4 L47.5 3.7 L48.0 3.7 L48.5 4.8 L49.0 4.9 L49.5 5.1 L50.0 5.4 L50.5 5.8 L51.0 5.8 L51.5 5.7 L52.0 5.4 L52.5 5.4 L53.0 4.6 L53.5 5.4 L54.0 5.1 L54.5 6.1 L55.0 5.9 L55.5 5.5 L56.0 5.7 L56.5 5.5 L57.0 5.4 L57.5 5.7 L58.0 5.8 L58.5 6.0 L59.0 5.8 L59.5 5.4 L60.0 4.3 L60.5 3.7 L61.0 3.4 L61.5 2.5 L62.0 4.4 L62.5 4.1 L63.0 5.4 L63.5 6.0 L64.0 5.4 L64.5 5.8 L65.0 5.4 L65.5 5.1 L66.0 4.2 L66.5 2.9 L67.0 3.3 L67.5 5.3 L68.0 5.3 L68.5 5.2 L69.0 5.6 L69.5 5.4 L70.0 5.2 L70.5 5.4 L71.0 4.4 L71.5 4.8 L72.0 5.5 L72.5 6.1 L73.0 5.9 L73.5 5.6 L74.0 5.8 L74.5 5.8 L75.0 5.1 L75.5 4.1 L76.0 3.9 L76.5 2.9 L77.0 4.3 L77.5 5.7 L78.0 5.7 L78.5 6.0 L79.0 5.3 L79.5 6.1 L80.0 5.7 L80.5 5.7 L81.0 5.8 L81.5 6.2 L82.0 5.6 L82.5 5.7 L83.0 5.0 L83.5 5.5 L84.0 4.4 L84.5 5.3 L85.0 4.6 L85.5 5.4 L86.0 5.7 L86.5 6.1 L87.0 6.0 L87.5 5.3 L88.0 4.7 L88.5 4.4 L89.0 3.6 L89.5 2.5 L90.0 2.5 L90.5 4.3 L91.0 4.7 L91.5 5.3 L92.0 4.8 L92.5 4.6 L93.0 4.1 L93.5 5.7 L94.0 5.8 L94.5 5.5 L95.0 5.7 L95.5 5.8 L96.0 5.3 L96.5 5.3 L97.0 5.3 L97.5 4.4 L98.0 5.1 L98.5 5.0 L99.0 5.4 L99.5 6.0 L100.0 5.8 L100.5 5.3 L101.0 5.2 L101.5 4.7 L102.0 4.7 L102.5 4.2 L103.0 5.1 L103.5 4.7 L104.0 5.3 L104.5 4.7 L105.0 3.8 L105.5 3.6 L106.0 3.9 L106.5 4.2 L107.0 5.4 L107.5 5.3 L108.0 5.0 L108.5 5.5 L109.0 6.0 L109.5 4.4 L110.0 4.7 L110.5 5.9 L111.0 4.8 L111.5 6.0 L112.0 5.5 L112.5 4.6 L113.0 4.5 L113.5 5.6 L114.0 5.7 L114.5 5.9 L115.0 5.4 L115.5 5.1 L116.0 5.5 L116.5 5.7 L117.0 5.5 L117.5 6.1 L118.0 5.6 L118.5 4.5 L119.0 3.9 L119.5 3.3 L120.0 4.7 L120.5 5.2 L121.0 5.3 L121.5 5.9 L122.0 6.0 L122.5 5.1 L123.0 5.7 L123.5 4.3 L124.0 4.5 L124.5 4.6 L125.0 3.9 L125.5 4.1 L126.0 4.8 L126.5 5.3 L127.0 6.0 L127.5 4.8 L128.0 5.6 L128.5 5.8 L129.0 6.1 L129.5 5.4 L130.0 5.5 L130.5 5.5 L131.0 6.0 L131.5 4.9 L132.0 4.3 L132.5 4.5 L133.0 5.3 L133.5 5.8 L134.0 5.6 L134.5 5.9 L135.0 6.0 L135.5 5.7 L136.0 5.8 L136.5 5.6 L137.0 6.1 L137.5 5.3 L138.0 5.4 L138.5 5.6 L139.0 5.9 L139.5 4.2 L140.0 3.5 L140.5 1.7 L141.0 4.5 L141.5 4.3 L142.0 5.2 L142.5 5.6 L143.0 5.9 L143.5 5.5 L144.0 5.1 L144.5 3.6 L145.0 2.1 L145.5 1.8 L146.0 2.9 L146.5 3.8 L147.0 5.2 L147.5 5.5 L148.0 5.4 L148.5 5.5 L149.0 5.2 L149.5 5.4 L150.0 4.2 L150.5 4.6 L151.0 3.8 L151.5 3.3 L152.0 4.0 L152.5 4.2 L153.0 2.4 L153.5 2.5 L154.0 3.4 L154.5 3.6 L155.0 5.2 L155.5 4.5 L156.0 5.1 L156.5 5.0 L157.0 3.1 L157.5 3.6 L158.0 2.4 L158.5 2.7 L159.0 4.5 L159.5 3.4 L160.0 3.0 L160.5 1.4 L161.0 3.7 L161.5 3.9 L162.0 4.2 L162.5 3.6 L163.0 1.4 L163.5 3.7 L164.0 4.4 L164.5 4.8 L165.0 5.4 L165.5 4.6 L166.0 4.9 L166.5 5.4 L167.0 4.9 L167.5 4.8 L168.0 4.5 L168.5 4.4 L169.0 2.3 L169.5 4.6 L170.0 4.1 L170.5 3.3 L171.0 4.9 L171.5 4.9 L172.0 4.6 L172.5 4.9 L173.0 5.6 L173.5 5.0 L174.0 4.8 L174.5 4.0 L175.0 2.4 L175.5 4.5 L176.0 5.2 L176.5 4.9 L177.0 5.2 L177.5 4.9 L178.0 4.9 L178.5 4.0 L179.0 4.5 L179.5 2.0 L180.0 2.6 L180.5 2.5 L181.0 4.2 L181.5 4.9 L182.0 3.4 L182.5 4.7 L183.0 4.1 L183.5 3.9 L184.0 2.8 L184.5 2.5 L185.0 1.4 L185.5 2.7 L186.0 2.6 L186.5 4.8 L187.0 4.7 L187.5 4.3 L188.0 3.3 L188.5 3.2 L189.0 3.5 L189.5 2.5 L190.0 3.2 L190.5 3.6 L191.0 3.3 L191.5 4.1 L192.0 3.5 L192.5 5.4 L193.0 4.6 L193.5 3.5 L194.0 5.4 L194.5 3.7 L195.0 2.7 L195.5 2.3 L196.0 2.0 L196.5 1.7 L197.0 3.5 L197.5 4.8 L198.0 5.4 L198.5 5.5 L199.0 4.7 L199.5 5.2 L200.0 5.0 L200.5 5.3 L201.0 4.3 L201.5 3.8 L202.0 2.6 L202.5 1.4 L203.0 1.4 L203.5 3.0 L204.0 4.2 L204.5 4.4 L205.0 5.3 L205.5 5.3 L206.0 5.3 L206.5 4.5 L207.0 3.9 L207.5 3.7 L208.0 3.7 L208.5 4.5 L209.0 4.9 L209.5 5.0 L210.0 2.3 L210.5 4.3 L211.0 3.2 L211.5 2.9 L212.0 4.2 L212.5 4.8 L213.0 4.5 L213.5 4.8 L214.0 4.3 L214.5 3.3 L215.0 3.5 L215.5 4.5 L216.0 4.5 L216.5 5.1 L217.0 4.4 L217.5 4.0 L218.0 2.4 L218.5 3.4 L219.0 3.2 L219.5 3.9 L220.0 5.2 L220.5 5.3 L221.0 4.9 L221.5 5.1 L222.0 4.6 L222.5 5.1 L223.0 5.0 L223.5 5.5 L224.0 5.6 L224.5 4.1 L225.0 3.2 L225.5 3.8 L226.0 2.4 L226.5 3.7 L227.0 4.5 L227.5 4.1 L228.0 5.2 L228.5 5.5 L229.0 5.5 L229.5 5.0 L230.0 4.6 L230.5 4.9 L231.0 4.6 L231.5 4.0 L232.0 4.4 L232.5 4.0 L233.0 3.3 L233.5 2.6 L234.0 1.6 L234.5 3.6 L235.0 3.4 L235.5 4.6 L236.0 5.0 L236.5 4.6 L237.0 4.3 L237.5 4.8 L238.0 3.8 L238.0 10.4 L237.5 9.7 L237.0 9.9 L236.5 10.0 L236.0 9.4 L235.5 9.5 L235.0 11.1 L234.5 11.1 L234.0 12.7 L233.5 12.1 L233.0 11.1 L232.5 10.3 L232.0 9.7 L231.5 10.4 L231.0 9.9 L230.5 9.3 L230.0 9.7 L229.5 9.5 L229.0 8.8 L228.5 8.9 L228.0 9.1 L227.5 10.0 L227.0 10.0 L226.5 11.0 L226.0 11.9 L225.5 10.6 L225.0 11.1 L224.5 10.5 L224.0 8.9 L223.5 8.9 L223.0 9.5 L222.5 9.1 L222.0 9.8 L221.5 9.1 L221.0 9.7 L220.5 8.9 L220.0 9.2 L219.5 10.4 L219.0 11.1 L218.5 11.2 L218.0 12.0 L217.5 10.3 L217.0 9.8 L216.5 9.4 L216.0 9.7 L215.5 9.7 L215.0 11.0 L214.5 10.7 L214.0 10.0 L213.5 9.3 L213.0 10.0 L212.5 9.3 L212.0 9.9 L211.5 11.3 L211.0 11.0 L210.5 10.4 L210.0 12.1 L209.5 9.5 L209.0 9.3 L208.5 9.8 L208.0 10.7 L207.5 10.8 L207.0 10.2 L206.5 9.8 L206.0 9.2 L205.5 9.2 L205.0 9.1 L204.5 10.0 L204.0 10.4 L203.5 11.7 L203.0 12.6 L202.5 12.6 L202.0 11.4 L201.5 10.8 L201.0 9.8 L200.5 9.1 L200.0 9.6 L199.5 9.0 L199.0 9.8 L198.5 8.8 L198.0 9.1 L197.5 9.4 L197.0 11.2 L196.5 12.9 L196.0 12.0 L195.5 12.5 L195.0 11.6 L194.5 11.0 L194.0 9.1 L193.5 10.6 L193.0 9.9 L192.5 8.8 L192.0 10.6 L191.5 10.2 L191.0 11.2 L190.5 10.5 L190.0 11.1 L189.5 12.0 L189.0 10.6 L188.5 11.3 L188.0 10.9 L187.5 10.1 L187.0 9.8 L186.5 9.5 L186.0 12.0 L185.5 11.3 L185.0 13.1 L184.5 12.1 L184.0 11.9 L183.5 10.3 L183.0 10.6 L182.5 9.7 L182.0 11.2 L181.5 9.5 L181.0 10.4 L180.5 11.5 L180.0 12.2 L179.5 12.2 L179.0 9.7 L178.5 10.1 L178.0 9.2 L177.5 9.6 L177.0 9.2 L176.5 9.6 L176.0 9.1 L175.5 9.9 L175.0 12.3 L174.5 10.4 L174.0 9.5 L173.5 9.2 L173.0 8.8 L172.5 9.6 L172.0 9.8 L171.5 9.6 L171.0 9.7 L170.5 11.1 L170.0 10.5 L169.5 9.7 L169.0 12.5 L168.5 9.9 L168.0 10.0 L167.5 9.5 L167.0 9.3 L166.5 8.8 L166.0 9.4 L165.5 10.0 L165.0 8.9 L164.5 9.5 L164.0 10.2 L163.5 10.5 L163.0 13.2 L162.5 10.5 L162.0 10.3 L161.5 10.2 L161.0 10.4 L160.5 12.8 L160.0 11.3 L159.5 11.2 L159.0 9.9 L158.5 11.5 L158.0 11.9 L157.5 10.9 L157.0 11.2 L156.5 9.4 L156.0 9.2 L155.5 10.0 L155.0 9.0 L154.5 10.5 L154.0 10.9 L153.5 12.0 L153.0 12.5 L152.5 10.0 L152.0 10.2 L151.5 11.3 L151.0 10.7 L150.5 9.9 L150.0 10.0 L149.5 9.0 L149.0 9.1 L148.5 9.0 L148.0 8.9 L147.5 8.9 L147.0 9.3 L146.5 10.6 L146.0 11.2 L145.5 12.8 L145.0 12.1 L144.5 11.1 L144.0 9.2 L143.5 8.9 L143.0 8.5 L142.5 8.8 L142.0 9.2 L141.5 9.8 L141.0 9.8 L140.5 13.2 L140.0 10.5 L139.5 10.3 L139.0 8.3 L138.5 8.9 L138.0 9.0 L137.5 9.0 L137.0 8.3 L136.5 8.8 L136.0 8.6 L135.5 8.7 L135.0 8.3 L134.5 8.4 L134.0 8.8 L133.5 8.7 L133.0 9.2 L132.5 9.6 L132.0 10.2 L131.5 9.6 L131.0 8.4 L130.5 8.7 L130.0 8.9 L129.5 9.0 L129.0 8.2 L128.5 8.6 L128.0 8.6 L127.5 9.8 L127.0 8.4 L126.5 9.0 L126.0 9.5 L125.5 10.5 L125.0 10.6 L124.5 9.6 L124.0 9.9 L123.5 9.9 L123.0 8.6 L122.5 9.4 L122.0 8.4 L121.5 8.5 L121.0 9.0 L120.5 9.1 L120.0 9.8 L119.5 10.9 L119.0 10.5 L118.5 9.6 L118.0 8.6 L117.5 8.3 L117.0 8.9 L116.5 8.6 L116.0 9.0 L115.5 9.1 L115.0 9.0 L114.5 8.4 L114.0 8.6 L113.5 8.8 L113.0 9.8 L112.5 9.6 L112.0 8.8 L111.5 8.4 L111.0 9.7 L110.5 8.5 L110.0 9.4 L109.5 10.0 L109.0 8.5 L108.5 9.0 L108.0 9.4 L107.5 9.2 L107.0 8.8 L106.5 10.3 L106.0 10.2 L105.5 10.9 L105.0 10.7 L104.5 9.6 L104.0 9.0 L103.5 9.5 L103.0 9.4 L102.5 10.3 L102.0 9.6 L101.5 9.5 L101.0 9.2 L100.5 8.9 L100.0 8.4 L99.5 8.3 L99.0 9.0 L98.5 9.3 L98.0 9.1 L97.5 10.1 L97.0 9.2 L96.5 9.2 L96.0 8.9 L95.5 8.5 L95.0 8.7 L94.5 8.8 L94.0 8.7 L93.5 8.6 L93.0 10.3 L92.5 9.6 L92.0 9.8 L91.5 8.9 L91.0 9.4 L90.5 10.2 L90.0 12.0 L89.5 12.2 L89.0 10.7 L88.5 10.1 L88.0 9.7 L87.5 9.2 L87.0 8.3 L86.5 8.2 L86.0 8.6 L85.5 9.1 L85.0 9.9 L84.5 9.1 L84.0 9.9 L83.5 8.7 L83.0 9.4 L82.5 8.6 L82.0 8.8 L81.5 8.1 L81.0 8.4 L80.5 8.7 L80.0 8.5 L79.5 8.2 L79.0 9.2 L78.5 8.4 L78.0 8.8 L77.5 8.8 L77.0 10.0 L76.5 11.6 L76.0 10.2 L75.5 10.0 L75.0 9.1 L74.5 8.7 L74.0 8.4 L73.5 8.8 L73.0 8.5 L72.5 8.3 L72.0 8.9 L71.5 9.4 L71.0 9.9 L70.5 8.9 L70.0 9.1 L69.5 9.1 L69.0 8.8 L68.5 9.0 L68.0 9.1 L67.5 9.0 L67.0 10.9 L66.5 11.5 L66.0 10.2 L65.5 9.0 L65.0 8.9 L64.5 8.6 L64.0 8.8 L63.5 8.4 L63.0 9.0 L62.5 10.4 L62.0 9.9 L61.5 12.0 L61.0 10.9 L60.5 10.9 L60.0 10.2 L59.5 9.1 L59.0 8.5 L58.5 8.3 L58.0 8.5 L57.5 8.6 L57.0 9.0 L56.5 8.7 L56.0 8.6 L55.5 9.1 L55.0 8.4 L54.5 8.2 L54.0 9.4 L53.5 8.9 L53.0 10.0 L52.5 8.9 L52.0 9.0 L51.5 8.7 L51.0 8.5 L50.5 8.7 L50.0 8.9 L49.5 9.2 L49.0 9.5 L48.5 9.5 L48.0 10.7 L47.5 10.7 L47.0 12.7 L46.5 11.7 L46.0 11.6 L45.5 10.3 L45.0 8.8 L44.5 8.9 L44.0 8.5 L43.5 8.8 L43.0 8.5 L42.5 9.3 L42.0 8.6 L41.5 9.0 L41.0 8.6 L40.5 10.1 L40.0 9.1 L39.5 10.1 L39.0 9.8 L38.5 9.4 L38.0 8.6 L37.5 8.7 L37.0 9.2 L36.5 9.0 L36.0 9.1 L35.5 8.8 L35.0 10.1 L34.5 9.5 L34.0 11.2 L33.5 10.0 L33.0 9.1 L32.5 9.9 L32.0 9.0 L31.5 9.1 L31.0 9.7 L30.5 10.1 L30.0 9.2 L29.5 9.6 L29.0 10.0 L28.5 12.0 L28.0 11.3 L27.5 10.4 L27.0 10.9 L26.5 10.4 L26.0 10.2 L25.5 9.5 L25.0 8.8 L24.5 9.3 L24.0 9.3 L23.5 10.9 L23.0 11.1 L22.5 10.0 L22.0 9.2 L21.5 9.3 L21.0 8.6 L20.5 8.7 L20.0 8.6 L19.5 8.7 L19.0 9.5 L18.5 9.3 L18.0 10.5 L17.5 9.1 L17.0 9.9 L16.5 8.7 L16.0 8.6 L15.5 9.0 L15.0 8.6 L14.5 8.8 L14.0 8.8 L13.5 8.3 L13.0 8.6 L12.5 9.6 L12.0 10.2 L11.5 9.6 L11.0 10.3 L10.5 10.6 L10.0 9.8 L9.5 9.7 L9.0 9.1 L8.5 10.0 L8.0 9.5 L7.5 9.8 L7.0 8.9 L6.5 8.8 L6.0 9.7 L5.5 10.8 L5.0 10.8 L4.5 10.0 L4.0 8.8 L3.5 8.6 L3.0 8.5 L2.5 9.3 L2.0 9.5 L1.5 10.5 L1.0 10.9 L0.5 9.4 L0.0 9.0 Z" fill="#e8943a"/><path d="M0.0 19.9 L0.5 19.1 L1.0 18.3 L1.5 17.1 L2.0 16.9 L2.5 17.4 L3.0 18.6 L3.5 18.5 L4.0 19.4 L4.5 19.4 L5.0 19.8 L5.5 19.2 L6.0 19.9 L6.5 19.7 L7.0 19.2 L7.5 19.0 L8.0 18.1 L8.5 16.6 L9.0 18.5 L9.5 19.6 L10.0 19.3 L10.5 19.7 L11.0 19.6 L11.5 19.4 L12.0 19.7 L12.5 19.7 L13.0 19.5 L13.5 19.4 L14.0 18.7 L14.5 18.6 L15.0 17.3 L15.5 18.4 L16.0 17.9 L16.5 16.2 L17.0 18.3 L17.5 18.6 L18.0 18.7 L18.5 19.2 L19.0 18.6 L19.5 17.8 L20.0 17.0 L20.5 16.4 L21.0 15.4 L21.5 16.7 L22.0 17.9 L22.5 17.5 L23.0 19.1 L23.5 18.7 L24.0 19.6 L24.5 19.5 L25.0 18.6 L25.5 18.8 L26.0 18.2 L26.5 17.7 L27.0 17.8 L27.5 17.6 L28.0 18.6 L28.5 18.9 L29.0 19.2 L29.5 18.6 L30.0 18.8 L30.5 17.9 L31.0 19.0 L31.5 18.1 L32.0 19.2 L32.5 19.3 L33.0 19.1 L33.5 18.9 L34.0 19.3 L34.5 17.9 L35.0 18.5 L35.5 19.1 L36.0 19.0 L36.5 19.4 L37.0 18.9 L37.5 18.8 L38.0 18.6 L38.5 18.1 L39.0 17.4 L39.5 17.9 L40.0 17.7 L40.5 18.9 L41.0 18.9 L41.5 17.9 L42.0 18.0 L42.5 17.6 L43.0 17.5 L43.5 17.9 L44.0 16.8 L44.5 18.4 L45.0 19.0 L45.5 18.0 L46.0 17.1 L46.5 17.8 L47.0 17.9 L47.5 18.4 L48.0 18.4 L48.5 19.4 L49.0 19.6 L49.5 18.8 L50.0 19.0 L50.5 17.0 L51.0 16.4 L51.5 17.3 L52.0 17.9 L52.5 19.2 L53.0 19.2 L53.5 19.4 L54.0 19.1 L54.5 19.5 L55.0 19.7 L55.5 19.2 L56.0 19.2 L56.5 18.1 L57.0 16.8 L57.5 16.8 L58.0 17.7 L58.5 17.7 L59.0 18.3 L59.5 19.3 L60.0 19.2 L60.5 19.0 L61.0 18.5 L61.5 19.4 L62.0 19.5 L62.5 19.5 L63.0 18.3 L63.5 18.4 L64.0 18.3 L64.5 19.2 L65.0 19.7 L65.5 19.3 L66.0 19.4 L66.5 19.3 L67.0 19.6 L67.5 19.2 L68.0 19.0 L68.5 19.9 L69.0 19.7 L69.5 19.2 L70.0 19.0 L70.5 18.7 L71.0 17.7 L71.5 18.4 L72.0 19.0 L72.5 17.9 L73.0 15.1 L73.5 18.9 L74.0 18.8 L74.5 19.3 L75.0 18.9 L75.5 16.8 L76.0 17.5 L76.5 18.0 L77.0 19.2 L77.5 19.6 L78.0 19.6 L78.5 18.9 L79.0 19.5 L79.5 19.1 L80.0 18.8 L80.5 19.0 L81.0 17.1 L81.5 17.3 L82.0 17.3 L82.5 17.7 L83.0 18.1 L83.5 19.1 L84.0 19.4 L84.5 19.8 L85.0 19.5 L85.5 19.5 L86.0 19.2 L86.5 18.1 L87.0 18.3 L87.5 17.1 L88.0 17.3 L88.5 16.8 L89.0 17.6 L89.5 18.0 L90.0 18.0 L90.5 19.1 L91.0 18.8 L91.5 19.4 L92.0 18.2 L92.5 17.4 L93.0 18.5 L93.5 19.3 L94.0 19.6 L94.5 19.2 L95.0 19.1 L95.5 19.6 L96.0 19.4 L96.5 19.2 L97.0 19.9 L97.5 19.2 L98.0 20.0 L98.5 19.4 L99.0 17.3 L99.5 18.4 L100.0 19.8 L100.5 19.8 L101.0 19.5 L101.5 18.8 L102.0 19.4 L102.5 19.1 L103.0 18.5 L103.5 16.5 L104.0 18.4 L104.5 18.8 L105.0 18.9 L105.5 19.1 L106.0 19.7 L106.5 19.2 L107.0 19.5 L107.5 19.0 L108.0 18.2 L108.5 19.0 L109.0 17.7 L109.5 19.1 L110.0 18.8 L110.5 19.6 L111.0 19.2 L111.5 19.9 L112.0 19.9 L112.5 19.2 L113.0 19.4 L113.5 19.6 L114.0 19.5 L114.5 19.4 L115.0 18.1 L115.5 18.3 L116.0 17.7 L116.5 18.7 L117.0 19.2 L117.5 19.3 L118.0 19.0 L118.5 19.1 L119.0 19.4 L119.5 19.5 L120.0 19.3 L120.5 18.8 L121.0 18.5 L121.5 18.1 L122.0 19.0 L122.5 19.2 L123.0 19.2 L123.5 19.8 L124.0 19.9 L124.5 19.3 L125.0 19.8 L125.5 19.6 L126.0 19.5 L126.5 18.9 L127.0 18.7 L127.5 17.5 L128.0 18.2 L128.5 18.0 L129.0 17.2 L129.5 19.3 L130.0 19.0 L130.5 19.6 L131.0 19.8 L131.5 19.5 L132.0 19.3 L132.5 18.7 L133.0 18.8 L133.5 18.2 L134.0 18.5 L134.5 19.2 L135.0 19.5 L135.5 19.1 L136.0 18.5 L136.5 19.3 L137.0 19.7 L137.5 19.5 L138.0 19.7 L138.5 19.7 L139.0 19.3 L139.5 19.5 L140.0 19.4 L140.5 19.4 L141.0 19.1 L141.5 19.1 L142.0 19.1 L142.5 19.2 L143.0 16.7 L143.5 16.8 L144.0 16.5 L144.5 18.0 L145.0 19.4 L145.5 19.1 L146.0 18.6 L146.5 19.1 L147.0 19.0 L147.5 18.8 L148.0 18.5 L148.5 18.6 L149.0 15.1 L149.5 17.9 L150.0 18.9 L150.5 18.9 L151.0 18.7 L151.5 19.1 L152.0 19.3 L152.5 18.1 L153.0 19.0 L153.5 18.7 L154.0 18.5 L154.5 18.5 L155.0 19.1 L155.5 18.4 L156.0 19.2 L156.5 16.4 L157.0 17.3 L157.5 18.8 L158.0 18.4 L158.5 18.8 L159.0 18.1 L159.5 19.1 L160.0 17.4 L160.5 19.0 L161.0 18.1 L161.5 17.1 L162.0 15.3 L162.5 15.7 L163.0 15.6 L163.5 17.9 L164.0 18.4 L164.5 18.3 L165.0 17.4 L165.5 15.6 L166.0 16.6 L166.5 15.1 L167.0 16.6 L167.5 17.6 L168.0 19.0 L168.5 19.2 L169.0 18.5 L169.5 18.4 L170.0 19.0 L170.5 18.4 L171.0 17.7 L171.5 17.5 L172.0 15.1 L172.5 15.7 L173.0 15.7 L173.5 16.9 L174.0 18.3 L174.5 18.7 L175.0 18.8 L175.5 18.7 L176.0 18.5 L176.5 19.5 L177.0 18.9 L177.5 18.8 L178.0 18.8 L178.5 18.1 L179.0 18.2 L179.5 16.8 L180.0 17.1 L180.5 17.5 L181.0 18.0 L181.5 19.1 L182.0 18.5 L182.5 18.1 L183.0 18.5 L183.5 18.4 L184.0 18.3 L184.5 17.9 L185.0 17.8 L185.5 17.8 L186.0 17.7 L186.5 18.6 L187.0 17.3 L187.5 17.5 L188.0 17.9 L188.5 18.3 L189.0 18.8 L189.5 18.8 L190.0 19.1 L190.5 18.6 L191.0 17.7 L191.5 18.3 L192.0 17.1 L192.5 16.0 L193.0 17.2 L193.5 18.1 L194.0 17.7 L194.5 18.0 L195.0 18.3 L195.5 16.4 L196.0 15.9 L196.5 17.1 L197.0 18.0 L197.5 18.4 L198.0 18.3 L198.5 18.9 L199.0 19.4 L199.5 18.6 L200.0 19.1 L200.5 18.7 L201.0 18.3 L201.5 16.3 L202.0 15.2 L202.5 15.1 L203.0 15.4 L203.5 17.8 L204.0 18.8 L204.5 18.9 L205.0 19.3 L205.5 18.9 L206.0 19.1 L206.5 18.6 L207.0 18.2 L207.5 19.4 L208.0 19.0 L208.5 18.1 L209.0 18.8 L209.5 17.6 L210.0 18.4 L210.5 16.1 L211.0 18.2 L211.5 18.1 L212.0 18.0 L212.5 16.4 L213.0 16.5 L213.5 16.4 L214.0 16.3 L214.5 16.9 L215.0 18.1 L215.5 17.7 L216.0 18.7 L216.5 18.9 L217.0 17.9 L217.5 17.8 L218.0 16.7 L218.5 17.4 L219.0 18.1 L219.5 18.8 L220.0 19.3 L220.5 19.1 L221.0 18.4 L221.5 18.9 L222.0 18.7 L222.5 18.6 L223.0 19.0 L223.5 17.6 L224.0 15.1 L224.5 15.7 L225.0 16.0 L225.5 16.4 L226.0 17.6 L226.5 18.7 L227.0 19.3 L227.5 19.3 L228.0 18.7 L228.5 19.2 L229.0 18.5 L229.5 18.4 L230.0 18.5 L230.5 18.4 L231.0 16.7 L231.5 17.2 L232.0 18.5 L232.5 18.1 L233.0 18.4 L233.5 17.3 L234.0 16.0 L234.5 16.1 L235.0 15.1 L235.5 15.1 L236.0 17.5 L236.5 16.6 L237.0 17.5 L237.5 18.2 L238.0 18.3 L238.0 23.4 L237.5 23.5 L237.0 24.6 L236.5 25.3 L236.0 24.3 L235.5 26.4 L235.0 26.4 L234.5 25.5 L234.0 26.0 L233.5 24.6 L233.0 23.5 L232.5 23.6 L232.0 23.2 L231.5 24.9 L231.0 25.1 L230.5 23.4 L230.0 23.3 L229.5 23.7 L229.0 23.2 L228.5 22.8 L228.0 23.0 L227.5 22.6 L227.0 22.6 L226.5 23.1 L226.0 24.5 L225.5 25.1 L225.0 26.0 L224.5 25.6 L224.0 27.2 L223.5 24.5 L223.0 22.7 L222.5 23.3 L222.0 23.0 L221.5 23.2 L221.0 23.3 L220.5 22.7 L220.0 22.5 L219.5 23.2 L219.0 23.6 L218.5 24.3 L218.0 25.0 L217.5 23.7 L217.0 23.6 L216.5 22.8 L216.0 23.1 L215.5 24.1 L215.0 23.5 L214.5 24.9 L214.0 25.5 L213.5 25.2 L213.0 25.2 L212.5 25.5 L212.0 23.9 L211.5 23.9 L211.0 23.4 L210.5 26.1 L210.0 23.4 L209.5 24.3 L209.0 23.2 L208.5 23.5 L208.0 23.0 L207.5 22.5 L207.0 23.8 L206.5 23.2 L206.0 22.7 L205.5 22.9 L205.0 22.5 L204.5 23.0 L204.0 22.9 L203.5 24.1 L203.0 25.9 L202.5 27.1 L202.0 26.3 L201.5 25.8 L201.0 23.6 L200.5 23.0 L200.0 22.6 L199.5 23.5 L199.0 22.4 L198.5 23.1 L198.0 23.7 L197.5 23.7 L197.0 23.9 L196.5 24.6 L196.0 25.5 L195.5 25.3 L195.0 23.5 L194.5 24.0 L194.0 24.2 L193.5 23.7 L193.0 24.9 L192.5 25.6 L192.0 24.6 L191.5 23.4 L191.0 24.1 L190.5 23.2 L190.0 22.8 L189.5 23.2 L189.0 22.9 L188.5 23.8 L188.0 23.9 L187.5 24.4 L187.0 24.5 L186.5 23.4 L186.0 24.1 L185.5 23.8 L185.0 24.2 L184.5 24.0 L184.0 23.6 L183.5 23.2 L183.0 23.2 L182.5 23.9 L182.0 23.2 L181.5 22.9 L181.0 23.7 L180.5 24.2 L180.0 24.6 L179.5 25.4 L179.0 23.8 L178.5 23.8 L178.0 22.9 L177.5 22.9 L177.0 22.9 L176.5 22.4 L176.0 23.6 L175.5 23.3 L175.0 23.1 L174.5 23.4 L174.0 23.5 L173.5 24.8 L173.0 26.1 L172.5 26.2 L172.0 26.9 L171.5 24.4 L171.0 24.1 L170.5 23.5 L170.0 22.7 L169.5 23.5 L169.0 23.4 L168.5 22.6 L168.0 23.0 L167.5 24.1 L167.0 25.1 L166.5 26.6 L166.0 25.1 L165.5 26.5 L165.0 24.2 L164.5 23.5 L164.0 23.2 L163.5 23.7 L163.0 26.5 L162.5 25.8 L162.0 26.1 L161.5 24.5 L161.0 23.7 L160.5 22.8 L160.0 24.5 L159.5 22.6 L159.0 24.0 L158.5 23.1 L158.0 23.4 L157.5 23.1 L157.0 24.8 L156.5 25.5 L156.0 22.6 L155.5 23.3 L155.0 22.8 L154.5 23.6 L154.0 23.3 L153.5 23.1 L153.0 23.0 L152.5 23.9 L152.0 22.6 L151.5 22.7 L151.0 22.9 L150.5 22.9 L150.0 23.0 L149.5 23.7 L149.0 26.7 L148.5 23.0 L148.0 23.5 L147.5 23.0 L147.0 22.9 L146.5 22.9 L146.0 23.2 L145.5 22.6 L145.0 22.6 L144.5 23.6 L144.0 24.9 L143.5 24.9 L143.0 25.3 L142.5 22.8 L142.0 22.6 L141.5 22.7 L141.0 22.9 L140.5 22.4 L140.0 22.5 L139.5 22.3 L139.0 22.7 L138.5 22.1 L138.0 22.2 L137.5 22.4 L137.0 22.0 L136.5 22.4 L136.0 23.4 L135.5 22.6 L135.0 22.5 L134.5 22.6 L134.0 23.2 L133.5 23.7 L133.0 22.9 L132.5 23.1 L132.0 22.5 L131.5 22.4 L131.0 22.0 L130.5 22.2 L130.0 22.8 L129.5 22.5 L129.0 24.4 L128.5 23.7 L128.0 23.5 L127.5 24.4 L127.0 23.4 L126.5 23.1 L126.0 22.3 L125.5 22.2 L125.0 21.9 L124.5 22.5 L124.0 21.9 L123.5 22.0 L123.0 22.7 L122.5 22.6 L122.0 22.8 L121.5 23.8 L121.0 23.3 L120.5 23.0 L120.0 22.4 L119.5 22.2 L119.0 22.6 L118.5 22.8 L118.0 22.9 L117.5 22.7 L117.0 22.5 L116.5 23.1 L116.0 24.4 L115.5 23.7 L115.0 23.5 L114.5 22.3 L114.0 22.3 L113.5 22.1 L113.0 22.3 L112.5 22.5 L112.0 21.9 L111.5 21.9 L111.0 22.8 L110.5 22.2 L110.0 23.0 L109.5 22.9 L109.0 23.9 L108.5 22.8 L108.0 23.6 L107.5 22.9 L107.0 22.3 L106.5 22.5 L106.0 22.1 L105.5 22.9 L105.0 22.9 L104.5 23.1 L104.0 23.3 L103.5 25.2 L103.0 23.6 L102.5 22.9 L102.0 22.4 L101.5 23.2 L101.0 22.2 L100.5 22.0 L100.0 22.2 L99.5 23.6 L99.0 24.9 L98.5 22.3 L98.0 21.8 L97.5 22.8 L97.0 21.9 L96.5 22.7 L96.0 22.4 L95.5 22.2 L95.0 22.6 L94.5 22.7 L94.0 22.2 L93.5 22.6 L93.0 23.1 L92.5 24.7 L92.0 23.7 L91.5 22.5 L91.0 22.9 L90.5 22.8 L90.0 23.9 L89.5 23.7 L89.0 24.4 L88.5 25.1 L88.0 24.5 L87.5 24.5 L87.0 23.5 L86.5 23.5 L86.0 22.5 L85.5 22.3 L85.0 22.2 L84.5 22.0 L84.0 22.5 L83.5 22.9 L83.0 23.6 L82.5 24.0 L82.0 24.8 L81.5 24.8 L81.0 24.5 L80.5 22.8 L80.0 23.0 L79.5 22.7 L79.0 22.5 L78.5 22.8 L78.0 22.1 L77.5 22.4 L77.0 22.7 L76.5 23.6 L76.0 24.2 L75.5 25.4 L75.0 22.9 L74.5 22.4 L74.0 23.0 L73.5 22.7 L73.0 26.4 L72.5 24.0 L72.0 22.7 L71.5 23.6 L71.0 24.1 L70.5 23.3 L70.0 22.7 L69.5 22.6 L69.0 22.1 L68.5 21.9 L68.0 22.9 L67.5 22.6 L67.0 22.4 L66.5 22.7 L66.0 22.5 L65.5 22.5 L65.0 22.3 L64.5 22.8 L64.0 23.6 L63.5 23.5 L63.0 23.7 L62.5 22.3 L62.0 22.3 L61.5 22.4 L61.0 23.2 L60.5 22.9 L60.0 22.7 L59.5 22.7 L59.0 23.3 L58.5 23.9 L58.0 24.0 L57.5 25.4 L57.0 25.3 L56.5 23.6 L56.0 22.7 L55.5 22.8 L55.0 22.1 L54.5 22.4 L54.0 22.6 L53.5 22.6 L53.0 22.7 L52.5 22.7 L52.0 23.9 L51.5 24.8 L51.0 25.8 L50.5 24.8 L50.0 22.8 L49.5 23.1 L49.0 22.4 L48.5 22.3 L48.0 23.3 L47.5 23.5 L47.0 24.2 L46.5 23.8 L46.0 24.4 L45.5 23.8 L45.0 22.9 L44.5 23.2 L44.0 25.2 L43.5 23.9 L43.0 24.2 L42.5 24.1 L42.0 23.8 L41.5 23.8 L41.0 22.8 L40.5 22.8 L40.0 23.8 L39.5 24.3 L39.0 24.2 L38.5 23.9 L38.0 23.1 L37.5 23.2 L37.0 22.9 L36.5 22.3 L36.0 22.9 L35.5 22.8 L35.0 23.4 L34.5 23.8 L34.0 22.7 L33.5 23.0 L33.0 22.6 L32.5 22.6 L32.0 22.6 L31.5 23.9 L31.0 22.8 L30.5 23.8 L30.0 22.9 L29.5 23.2 L29.0 22.5 L28.5 23.1 L28.0 23.5 L27.5 24.3 L27.0 23.9 L26.5 24.0 L26.0 23.7 L25.5 22.9 L25.0 23.0 L24.5 22.3 L24.0 22.3 L23.5 23.1 L23.0 22.7 L22.5 24.1 L22.0 24.1 L21.5 25.1 L21.0 26.4 L20.5 25.8 L20.0 25.1 L19.5 24.0 L19.0 23.3 L18.5 22.7 L18.0 23.1 L17.5 23.3 L17.0 23.6 L16.5 25.8 L16.0 24.1 L15.5 23.6 L15.0 24.8 L14.5 23.3 L14.0 23.0 L13.5 22.5 L13.0 22.5 L12.5 22.2 L12.0 22.1 L11.5 22.4 L11.0 22.4 L10.5 22.1 L10.0 22.7 L9.5 22.3 L9.0 23.3 L8.5 25.0 L8.0 23.9 L7.5 22.9 L7.0 22.8 L6.5 22.1 L6.0 21.8 L5.5 22.6 L5.0 22.1 L4.5 22.6 L4.0 22.6 L3.5 23.2 L3.0 23.4 L2.5 24.7 L2.0 24.7 L1.5 24.8 L1.0 23.4 L0.5 22.6 L0.0 21.9 Z" fill="#e8943a"/></svg>
<div class="a" style="left:113px;top:374.8px;width:43px;height:10px;background:#2a1a0e;"></div>
<div class="t" style="left:116.5px;top:376.75px;font-size:5.3px;line-height:6.89px;color:#e6e6e6;transform:scaleX(0.923);transform-origin:left;">Eventname.mp3</div>
<div class="a" style="left:331px;top:391.5px;width:20px;height:10px;background:#2a1a0e;"></div>
<div class="t" style="left:237.7px;width:200px;text-align:center;top:391.60px;font-size:8px;line-height:10.4px;color:#f0f0f0;letter-spacing:-0.4px;">fx</div>
<div class="a" style="left:344.8px;top:396.1px;width:1.1px;height:1.1px;background:#9c9c9c;"></div>
<div class="a" style="left:347.2px;top:396.1px;width:1.1px;height:1.1px;background:#9c9c9c;"></div>
<div class="a" style="left:349.6px;top:396.1px;width:1.1px;height:1.1px;background:#9c9c9c;"></div>
<div class="a" style="left:258.5px;top:402px;width:533.5px;height:26.7px;background:#6e2e26;"></div>
<div class="a" style="left:258.5px;top:402px;width:92.5px;height:26.7px;background:#9c4838;"></div>
<div class="a" style="left:258.5px;top:414.95000000000005px;width:533.5px;height:0.9px;background:rgba(0,0,0,0.35);"></div>
<svg class="a" style="left:258.5px;top:402px;" width="533.5" height="26.7" viewBox="0 0 533.5 26.7"><path d="M0.0 4.1 L0.5 4.7 L1.0 4.8 L1.5 3.6 L2.0 4.4 L2.5 2.6 L3.0 4.3 L3.5 4.0 L4.0 4.0 L4.5 4.8 L5.0 5.2 L5.5 4.5 L6.0 5.2 L6.5 4.5 L7.0 4.8 L7.5 4.8 L8.0 4.1 L8.5 4.5 L9.0 3.2 L9.5 4.7 L10.0 5.2 L10.5 4.6 L11.0 4.4 L11.5 4.3 L12.0 3.9 L12.5 3.9 L13.0 2.4 L13.5 1.7 L14.0 2.8 L14.5 2.5 L15.0 3.8 L15.5 4.2 L16.0 3.8 L16.5 2.6 L17.0 2.7 L17.5 2.0 L18.0 1.2 L18.5 3.8 L19.0 4.1 L19.5 3.0 L20.0 4.2 L20.5 3.7 L21.0 2.1 L21.5 1.3 L22.0 4.0 L22.5 3.8 L23.0 4.9 L23.5 3.0 L24.0 1.4 L24.5 2.3 L25.0 4.6 L25.5 2.8 L26.0 3.9 L26.5 2.5 L27.0 4.1 L27.5 1.3 L28.0 2.3 L28.5 4.0 L29.0 3.3 L29.5 3.7 L30.0 4.3 L30.5 4.1 L31.0 5.0 L31.5 4.9 L32.0 4.1 L32.5 4.2 L33.0 4.8 L33.5 5.2 L34.0 4.2 L34.5 5.1 L35.0 5.4 L35.5 5.3 L36.0 5.5 L36.5 4.6 L37.0 5.5 L37.5 5.2 L38.0 5.3 L38.5 4.6 L39.0 4.2 L39.5 1.3 L40.0 4.2 L40.5 4.4 L41.0 4.9 L41.5 4.3 L42.0 3.4 L42.5 4.2 L43.0 3.6 L43.5 2.6 L44.0 3.0 L44.5 4.2 L45.0 5.0 L45.5 5.0 L46.0 4.2 L46.5 4.6 L47.0 5.0 L47.5 4.7 L48.0 2.9 L48.5 2.7 L49.0 3.4 L49.5 3.9 L50.0 4.6 L50.5 5.1 L51.0 4.8 L51.5 4.4 L52.0 5.4 L52.5 4.5 L53.0 4.3 L53.5 2.0 L54.0 2.2 L54.5 4.6 L55.0 4.6 L55.5 5.0 L56.0 5.2 L56.5 5.2 L57.0 4.3 L57.5 5.5 L58.0 4.8 L58.5 5.3 L59.0 5.4 L59.5 4.7 L60.0 4.8 L60.5 3.4 L61.0 3.8 L61.5 2.8 L62.0 2.6 L62.5 3.8 L63.0 4.0 L63.5 4.2 L64.0 2.8 L64.5 4.3 L65.0 4.9 L65.5 4.5 L66.0 3.7 L66.5 1.8 L67.0 2.1 L67.5 4.7 L68.0 4.7 L68.5 4.9 L69.0 4.8 L69.5 4.9 L70.0 4.7 L70.5 5.4 L71.0 4.9 L71.5 4.4 L72.0 3.6 L72.5 4.6 L73.0 4.2 L73.5 2.9 L74.0 3.3 L74.5 2.6 L75.0 4.8 L75.5 5.2 L76.0 5.5 L76.5 4.2 L77.0 4.9 L77.5 4.8 L78.0 4.3 L78.5 3.1 L79.0 4.6 L79.5 3.7 L80.0 3.5 L80.5 4.0 L81.0 3.0 L81.5 2.4 L82.0 3.1 L82.5 2.8 L83.0 3.2 L83.5 3.2 L84.0 3.7 L84.5 4.5 L85.0 4.7 L85.5 4.7 L86.0 5.5 L86.5 4.6 L87.0 5.4 L87.5 5.2 L88.0 3.5 L88.5 1.4 L89.0 1.9 L89.5 1.2 L90.0 2.6 L90.5 3.1 L91.0 1.6 L91.5 4.3 L92.0 4.7 L92.5 3.3 L93.0 5.1 L93.5 5.6 L94.0 5.7 L94.5 5.3 L95.0 5.3 L95.5 5.8 L96.0 5.2 L96.5 4.9 L97.0 5.9 L97.5 4.8 L98.0 3.3 L98.5 3.0 L99.0 2.9 L99.5 3.9 L100.0 5.4 L100.5 5.5 L101.0 5.1 L101.5 5.3 L102.0 5.0 L102.5 5.8 L103.0 5.5 L103.5 5.4 L104.0 6.0 L104.5 5.7 L105.0 4.9 L105.5 4.7 L106.0 5.5 L106.5 4.0 L107.0 4.3 L107.5 5.2 L108.0 4.5 L108.5 5.0 L109.0 5.1 L109.5 4.7 L110.0 5.0 L110.5 5.1 L111.0 3.6 L111.5 4.1 L112.0 4.3 L112.5 4.3 L113.0 4.7 L113.5 5.0 L114.0 5.2 L114.5 5.9 L115.0 5.5 L115.5 5.3 L116.0 4.5 L116.5 5.3 L117.0 3.4 L117.5 4.5 L118.0 4.4 L118.5 4.1 L119.0 4.6 L119.5 4.8 L120.0 5.2 L120.5 5.2 L121.0 4.6 L121.5 2.5 L122.0 4.5 L122.5 5.0 L123.0 5.5 L123.5 5.9 L124.0 5.9 L124.5 5.6 L125.0 4.6 L125.5 3.7 L126.0 3.9 L126.5 2.7 L127.0 2.5 L127.5 4.1 L128.0 3.6 L128.5 2.0 L129.0 4.2 L129.5 5.7 L130.0 5.6 L130.5 5.8 L131.0 5.7 L131.5 5.0 L132.0 4.7 L132.5 5.3 L133.0 4.5 L133.5 5.8 L134.0 5.1 L134.5 5.2 L135.0 5.9 L135.5 4.9 L136.0 3.4 L136.5 4.6 L137.0 5.4 L137.5 5.4 L138.0 5.4 L138.5 5.6 L139.0 5.2 L139.5 5.7 L140.0 5.9 L140.5 5.4 L141.0 5.2 L141.5 4.8 L142.0 4.7 L142.5 5.0 L143.0 3.4 L143.5 2.4 L144.0 3.0 L144.5 2.9 L145.0 4.0 L145.5 4.1 L146.0 5.4 L146.5 5.0 L147.0 5.2 L147.5 5.0 L148.0 5.1 L148.5 5.5 L149.0 5.2 L149.5 4.4 L150.0 3.4 L150.5 3.4 L151.0 3.3 L151.5 4.4 L152.0 4.1 L152.5 4.8 L153.0 5.0 L153.5 5.4 L154.0 5.1 L154.5 3.6 L155.0 3.1 L155.5 4.0 L156.0 4.5 L156.5 5.3 L157.0 5.8 L157.5 5.2 L158.0 5.5 L158.5 5.9 L159.0 5.4 L159.5 5.6 L160.0 4.5 L160.5 3.4 L161.0 2.8 L161.5 4.8 L162.0 4.6 L162.5 5.6 L163.0 5.6 L163.5 5.6 L164.0 5.2 L164.5 5.6 L165.0 5.5 L165.5 5.4 L166.0 4.8 L166.5 4.9 L167.0 4.7 L167.5 3.9 L168.0 3.3 L168.5 3.1 L169.0 5.0 L169.5 4.8 L170.0 5.0 L170.5 4.9 L171.0 4.7 L171.5 4.7 L172.0 5.3 L172.5 5.8 L173.0 5.4 L173.5 5.9 L174.0 5.4 L174.5 5.4 L175.0 4.5 L175.5 5.7 L176.0 5.4 L176.5 4.7 L177.0 4.7 L177.5 3.9 L178.0 3.4 L178.5 5.5 L179.0 5.5 L179.5 5.5 L180.0 5.0 L180.5 5.9 L181.0 5.8 L181.5 5.6 L182.0 4.2 L182.5 3.7 L183.0 3.1 L183.5 4.2 L184.0 4.7 L184.5 4.9 L185.0 5.3 L185.5 5.1 L186.0 5.7 L186.5 5.7 L187.0 5.4 L187.5 5.7 L188.0 4.9 L188.5 5.1 L189.0 5.3 L189.5 5.0 L190.0 5.1 L190.5 4.9 L191.0 5.3 L191.5 5.5 L192.0 5.0 L192.5 3.9 L193.0 2.2 L193.5 2.4 L194.0 4.8 L194.5 5.6 L195.0 5.7 L195.5 5.6 L196.0 5.3 L196.5 5.4 L197.0 5.8 L197.5 5.5 L198.0 5.6 L198.5 4.4 L199.0 3.5 L199.5 1.5 L200.0 3.9 L200.5 4.8 L201.0 5.5 L201.5 5.3 L202.0 5.0 L202.5 5.6 L203.0 4.5 L203.5 5.6 L204.0 5.8 L204.5 4.8 L205.0 3.5 L205.5 4.1 L206.0 4.1 L206.5 3.6 L207.0 4.5 L207.5 5.4 L208.0 4.9 L208.5 4.0 L209.0 4.0 L209.5 3.8 L210.0 5.1 L210.5 5.2 L211.0 5.4 L211.5 5.4 L212.0 5.2 L212.5 5.9 L213.0 4.8 L213.5 5.5 L214.0 4.1 L214.5 5.0 L215.0 4.4 L215.5 4.0 L216.0 4.1 L216.5 4.5 L217.0 3.9 L217.5 2.9 L218.0 3.9 L218.5 4.2 L219.0 3.4 L219.5 3.9 L220.0 4.7 L220.5 5.1 L221.0 6.0 L221.5 5.6 L222.0 5.5 L222.5 5.5 L223.0 5.8 L223.5 5.1 L224.0 5.8 L224.5 5.3 L225.0 5.4 L225.5 4.9 L226.0 4.3 L226.5 3.0 L227.0 2.9 L227.5 4.4 L228.0 4.5 L228.5 5.1 L229.0 5.7 L229.5 4.8 L230.0 4.9 L230.5 5.5 L231.0 5.3 L231.5 5.6 L232.0 5.5 L232.5 4.8 L233.0 4.6 L233.5 3.9 L234.0 2.8 L234.5 3.5 L235.0 3.8 L235.5 3.9 L236.0 4.9 L236.5 5.2 L237.0 4.0 L237.5 4.0 L238.0 5.5 L238.5 5.9 L239.0 5.7 L239.5 5.7 L240.0 5.8 L240.5 5.4 L241.0 5.5 L241.5 5.1 L242.0 5.6 L242.5 5.7 L243.0 5.4 L243.5 4.5 L244.0 3.4 L244.5 3.6 L245.0 4.0 L245.5 2.3 L246.0 3.6 L246.5 4.3 L247.0 4.8 L247.5 5.5 L248.0 5.3 L248.5 4.8 L249.0 3.7 L249.5 3.0 L250.0 3.6 L250.5 5.2 L251.0 5.6 L251.5 5.2 L252.0 5.6 L252.5 5.3 L253.0 5.4 L253.5 5.6 L254.0 5.5 L254.5 5.5 L255.0 5.8 L255.5 5.8 L256.0 3.7 L256.5 4.4 L257.0 5.3 L257.5 5.9 L258.0 5.2 L258.5 5.8 L259.0 5.3 L259.5 5.8 L260.0 5.8 L260.5 4.5 L261.0 5.7 L261.5 5.5 L262.0 5.4 L262.5 6.0 L263.0 5.6 L263.5 3.3 L264.0 4.0 L264.5 3.8 L265.0 5.2 L265.5 5.4 L266.0 5.4 L266.5 5.7 L267.0 5.8 L267.5 5.0 L268.0 5.9 L268.5 5.9 L269.0 5.5 L269.5 5.4 L270.0 5.4 L270.5 4.6 L271.0 3.5 L271.5 3.9 L272.0 4.0 L272.5 3.1 L273.0 2.4 L273.5 3.9 L274.0 4.2 L274.5 5.4 L275.0 5.1 L275.5 5.7 L276.0 5.8 L276.5 5.5 L277.0 5.4 L277.5 5.3 L278.0 5.0 L278.5 4.5 L279.0 4.9 L279.5 4.5 L280.0 3.6 L280.5 4.7 L281.0 5.0 L281.5 4.9 L282.0 5.3 L282.5 5.6 L283.0 5.4 L283.5 5.2 L284.0 5.3 L284.5 3.6 L285.0 4.4 L285.5 2.8 L286.0 2.6 L286.5 3.6 L287.0 3.0 L287.5 3.7 L288.0 5.3 L288.5 5.2 L289.0 5.3 L289.5 5.1 L290.0 5.5 L290.5 6.1 L291.0 5.2 L291.5 5.2 L292.0 5.9 L292.5 5.3 L293.0 5.3 L293.5 4.3 L294.0 5.3 L294.5 6.0 L295.0 4.9 L295.5 3.8 L296.0 5.3 L296.5 4.5 L297.0 5.8 L297.5 5.3 L298.0 5.3 L298.5 4.7 L299.0 4.3 L299.5 3.4 L300.0 4.0 L300.5 4.5 L301.0 5.2 L301.5 4.9 L302.0 2.6 L302.5 4.1 L303.0 3.1 L303.5 4.8 L304.0 5.1 L304.5 5.9 L305.0 5.8 L305.5 5.2 L306.0 3.9 L306.5 4.6 L307.0 2.5 L307.5 4.4 L308.0 4.1 L308.5 4.5 L309.0 4.2 L309.5 4.1 L310.0 3.0 L310.5 3.9 L311.0 5.3 L311.5 5.4 L312.0 5.2 L312.5 5.6 L313.0 6.1 L313.5 4.8 L314.0 5.9 L314.5 5.3 L315.0 5.9 L315.5 5.2 L316.0 5.2 L316.5 5.0 L317.0 4.8 L317.5 4.0 L318.0 3.1 L318.5 3.9 L319.0 2.7 L319.5 3.3 L320.0 4.0 L320.5 4.8 L321.0 5.1 L321.5 4.7 L322.0 5.6 L322.5 4.7 L323.0 2.0 L323.5 4.7 L324.0 5.5 L324.5 5.4 L325.0 5.1 L325.5 4.4 L326.0 1.7 L326.5 4.0 L327.0 5.2 L327.5 5.5 L328.0 5.6 L328.5 5.3 L329.0 5.7 L329.5 5.5 L330.0 5.3 L330.5 5.6 L331.0 4.3 L331.5 2.6 L332.0 5.7 L332.5 5.3 L333.0 5.8 L333.5 5.1 L334.0 5.9 L334.5 5.0 L335.0 5.5 L335.5 5.2 L336.0 5.4 L336.5 5.0 L337.0 5.4 L337.5 5.8 L338.0 4.9 L338.5 4.1 L339.0 3.5 L339.5 3.0 L340.0 3.5 L340.5 4.7 L341.0 4.1 L341.5 5.2 L342.0 5.0 L342.5 4.8 L343.0 4.4 L343.5 4.0 L344.0 2.8 L344.5 3.5 L345.0 3.9 L345.5 4.0 L346.0 4.9 L346.5 4.1 L347.0 5.2 L347.5 5.6 L348.0 5.1 L348.5 5.7 L349.0 5.7 L349.5 5.2 L350.0 4.3 L350.5 4.5 L351.0 5.1 L351.5 5.1 L352.0 5.7 L352.5 5.5 L353.0 5.3 L353.5 5.7 L354.0 5.4 L354.5 5.5 L355.0 5.6 L355.5 5.7 L356.0 4.8 L356.5 5.4 L357.0 4.6 L357.5 4.7 L358.0 4.5 L358.5 2.7 L359.0 3.7 L359.5 5.0 L360.0 5.5 L360.5 5.6 L361.0 5.7 L361.5 5.6 L362.0 5.4 L362.5 5.5 L363.0 5.9 L363.5 5.4 L364.0 4.7 L364.5 4.4 L365.0 3.9 L365.5 4.8 L366.0 3.8 L366.5 3.0 L367.0 3.6 L367.5 4.2 L368.0 2.9 L368.5 2.7 L369.0 4.6 L369.5 4.6 L370.0 5.7 L370.5 5.8 L371.0 5.3 L371.5 5.0 L372.0 5.4 L372.5 5.6 L373.0 5.3 L373.5 5.4 L374.0 3.8 L374.5 4.5 L375.0 2.6 L375.5 3.6 L376.0 3.1 L376.5 4.4 L377.0 3.7 L377.5 4.2 L378.0 3.7 L378.5 4.3 L379.0 2.9 L379.5 3.5 L380.0 2.9 L380.5 4.2 L381.0 4.4 L381.5 5.6 L382.0 5.5 L382.5 6.0 L383.0 5.9 L383.5 4.8 L384.0 5.1 L384.5 4.1 L385.0 4.8 L385.5 4.9 L386.0 4.9 L386.5 5.6 L387.0 5.7 L387.5 5.1 L388.0 5.4 L388.5 4.5 L389.0 4.7 L389.5 3.6 L390.0 4.8 L390.5 5.5 L391.0 5.8 L391.5 5.4 L392.0 5.2 L392.5 5.5 L393.0 5.5 L393.5 5.2 L394.0 5.6 L394.5 5.7 L395.0 5.0 L395.5 5.4 L396.0 5.0 L396.5 4.5 L397.0 4.7 L397.5 3.9 L398.0 4.0 L398.5 5.0 L399.0 4.4 L399.5 4.5 L400.0 5.3 L400.5 5.5 L401.0 5.6 L401.5 5.7 L402.0 4.7 L402.5 5.1 L403.0 4.9 L403.5 4.4 L404.0 3.3 L404.5 4.2 L405.0 4.2 L405.5 4.4 L406.0 5.4 L406.5 5.1 L407.0 4.8 L407.5 4.3 L408.0 3.2 L408.5 4.4 L409.0 4.5 L409.5 4.1 L410.0 4.1 L410.5 5.2 L411.0 5.5 L411.5 5.1 L412.0 5.1 L412.5 5.1 L413.0 5.1 L413.5 4.4 L414.0 4.9 L414.5 5.0 L415.0 4.6 L415.5 4.8 L416.0 4.4 L416.5 3.8 L417.0 2.1 L417.5 4.9 L418.0 4.9 L418.5 5.3 L419.0 5.1 L419.5 4.9 L420.0 3.5 L420.5 2.9 L421.0 2.7 L421.5 4.4 L422.0 4.7 L422.5 5.3 L423.0 4.6 L423.5 5.0 L424.0 4.0 L424.5 4.1 L425.0 4.0 L425.5 2.2 L426.0 5.1 L426.5 4.7 L427.0 5.4 L427.5 5.2 L428.0 5.1 L428.5 3.8 L429.0 3.9 L429.5 4.3 L430.0 4.3 L430.5 4.3 L431.0 4.7 L431.5 4.9 L432.0 5.9 L432.5 5.6 L433.0 5.7 L433.5 5.5 L434.0 5.7 L434.5 5.7 L435.0 5.0 L435.5 5.8 L436.0 4.9 L436.5 4.4 L437.0 4.4 L437.5 5.3 L438.0 5.5 L438.5 5.3 L439.0 5.8 L439.5 4.5 L440.0 5.5 L440.5 5.3 L441.0 4.1 L441.5 4.9 L442.0 4.2 L442.5 4.8 L443.0 5.5 L443.5 4.7 L444.0 5.7 L444.5 5.1 L445.0 5.6 L445.5 5.6 L446.0 5.0 L446.5 5.0 L447.0 4.6 L447.5 4.5 L448.0 3.5 L448.5 3.5 L449.0 4.6 L449.5 3.5 L450.0 4.2 L450.5 5.6 L451.0 5.6 L451.5 5.3 L452.0 5.5 L452.5 2.3 L453.0 5.0 L453.5 5.1 L454.0 5.7 L454.5 5.1 L455.0 5.8 L455.5 4.9 L456.0 4.2 L456.5 4.4 L457.0 4.4 L457.5 3.6 L458.0 4.1 L458.5 4.9 L459.0 5.0 L459.5 5.9 L460.0 5.6 L460.5 5.4 L461.0 5.2 L461.5 5.3 L462.0 4.0 L462.5 4.8 L463.0 2.8 L463.5 4.0 L464.0 4.2 L464.5 5.1 L465.0 5.3 L465.5 5.1 L466.0 4.9 L466.5 4.4 L467.0 4.6 L467.5 5.4 L468.0 5.4 L468.5 5.7 L469.0 5.9 L469.5 5.2 L470.0 5.8 L470.5 5.5 L471.0 5.6 L471.5 4.8 L472.0 5.9 L472.5 5.6 L473.0 5.2 L473.5 4.0 L474.0 5.5 L474.5 5.0 L475.0 5.6 L475.5 5.5 L476.0 5.1 L476.5 5.3 L477.0 5.8 L477.5 5.6 L478.0 4.9 L478.5 4.7 L479.0 4.3 L479.5 4.1 L480.0 4.5 L480.5 5.3 L481.0 5.6 L481.5 5.8 L482.0 5.1 L482.5 6.0 L483.0 5.1 L483.5 5.3 L484.0 4.4 L484.5 4.5 L485.0 3.3 L485.5 3.7 L486.0 4.1 L486.5 5.1 L487.0 5.4 L487.5 5.3 L488.0 5.5 L488.5 5.2 L489.0 5.7 L489.5 5.6 L490.0 5.8 L490.5 5.4 L491.0 3.0 L491.5 4.9 L492.0 5.6 L492.5 5.3 L493.0 5.3 L493.5 5.8 L494.0 5.6 L494.5 5.7 L495.0 5.6 L495.5 5.9 L496.0 5.3 L496.5 5.5 L497.0 4.9 L497.5 4.8 L498.0 4.1 L498.5 4.4 L499.0 5.2 L499.5 5.7 L500.0 5.3 L500.5 5.3 L501.0 5.8 L501.5 5.4 L502.0 5.0 L502.5 3.8 L503.0 5.3 L503.5 5.7 L504.0 5.4 L504.5 5.7 L505.0 5.4 L505.5 5.5 L506.0 5.1 L506.5 5.0 L507.0 5.6 L507.5 5.2 L508.0 5.5 L508.5 5.1 L509.0 4.0 L509.5 4.3 L510.0 3.0 L510.5 3.7 L511.0 3.8 L511.5 4.2 L512.0 5.3 L512.5 4.9 L513.0 4.0 L513.5 4.5 L514.0 3.1 L514.5 2.0 L515.0 2.7 L515.5 4.4 L516.0 4.9 L516.5 4.1 L517.0 5.6 L517.5 5.5 L518.0 5.1 L518.5 5.3 L519.0 5.1 L519.5 4.3 L520.0 2.9 L520.5 4.1 L521.0 2.7 L521.5 4.4 L522.0 4.6 L522.5 4.6 L523.0 5.0 L523.5 5.7 L524.0 5.8 L524.5 5.5 L525.0 5.4 L525.5 5.5 L526.0 5.3 L526.5 5.6 L527.0 5.5 L527.5 4.7 L528.0 4.2 L528.5 4.6 L529.0 4.9 L529.5 4.8 L530.0 5.2 L530.5 3.4 L531.0 4.7 L531.5 5.4 L532.0 4.9 L532.5 5.8 L533.0 5.2 L533.5 5.6 L533.5 8.2 L533.0 8.7 L532.5 8.2 L532.0 9.0 L531.5 8.6 L531.0 9.3 L530.5 10.8 L530.0 8.8 L529.5 8.9 L529.0 8.8 L528.5 9.6 L528.0 9.5 L527.5 9.1 L527.0 8.5 L526.5 8.5 L526.0 8.6 L525.5 8.5 L525.0 8.6 L524.5 8.6 L524.0 8.2 L523.5 8.2 L523.0 9.1 L522.5 9.5 L522.0 9.3 L521.5 9.4 L521.0 11.6 L520.5 9.9 L520.0 10.9 L519.5 9.8 L519.0 9.0 L518.5 8.7 L518.0 9.0 L517.5 8.5 L517.0 8.2 L516.5 9.8 L516.0 9.3 L515.5 9.7 L515.0 11.0 L514.5 12.1 L514.0 11.1 L513.5 9.4 L513.0 10.1 L512.5 9.1 L512.0 8.6 L511.5 9.9 L511.0 10.2 L510.5 10.1 L510.0 10.7 L509.5 9.6 L509.0 10.0 L508.5 8.7 L508.0 8.5 L507.5 9.0 L507.0 8.3 L506.5 8.8 L506.0 9.0 L505.5 8.5 L505.0 8.7 L504.5 8.3 L504.0 8.4 L503.5 8.4 L503.0 8.5 L502.5 10.0 L502.0 9.0 L501.5 8.4 L501.0 8.1 L500.5 8.7 L500.0 8.6 L499.5 8.3 L499.0 8.6 L498.5 9.5 L498.0 10.1 L497.5 9.1 L497.0 9.0 L496.5 8.3 L496.0 8.8 L495.5 8.1 L495.0 8.4 L494.5 8.2 L494.0 8.4 L493.5 8.1 L493.0 8.5 L492.5 8.7 L492.0 8.5 L491.5 8.9 L491.0 11.2 L490.5 8.6 L490.0 8.1 L489.5 8.5 L489.0 8.3 L488.5 8.8 L488.0 8.6 L487.5 8.8 L487.0 8.5 L486.5 8.9 L486.0 9.9 L485.5 10.2 L485.0 10.5 L484.5 9.6 L484.0 9.5 L483.5 8.6 L483.0 8.7 L482.5 8.1 L482.0 8.7 L481.5 8.2 L481.0 8.3 L480.5 8.6 L480.0 9.4 L479.5 10.1 L479.0 9.7 L478.5 9.4 L478.0 9.2 L477.5 8.5 L477.0 8.2 L476.5 8.8 L476.0 8.7 L475.5 8.5 L475.0 8.5 L474.5 8.8 L474.0 8.5 L473.5 10.2 L473.0 8.6 L472.5 8.4 L472.0 8.1 L471.5 9.3 L471.0 8.4 L470.5 8.4 L470.0 8.1 L469.5 8.9 L469.0 8.2 L468.5 8.2 L468.0 8.6 L467.5 8.5 L467.0 9.5 L466.5 9.6 L466.0 9.2 L465.5 8.7 L465.0 8.6 L464.5 8.8 L464.0 9.5 L463.5 10.1 L463.0 10.8 L462.5 9.3 L462.0 10.2 L461.5 8.6 L461.0 8.7 L460.5 8.5 L460.0 8.4 L459.5 8.1 L459.0 9.1 L458.5 9.0 L458.0 9.8 L457.5 10.1 L457.0 9.4 L456.5 9.6 L456.0 9.9 L455.5 9.0 L455.0 8.2 L454.5 8.9 L454.0 8.2 L453.5 8.8 L453.0 9.0 L452.5 11.4 L452.0 8.6 L451.5 8.7 L451.0 8.2 L450.5 8.3 L450.0 10.0 L449.5 10.1 L449.0 9.4 L448.5 10.7 L448.0 10.6 L447.5 9.6 L447.0 9.5 L446.5 9.1 L446.0 9.0 L445.5 8.3 L445.0 8.4 L444.5 8.8 L444.0 8.2 L443.5 9.4 L443.0 8.3 L442.5 8.9 L442.0 9.5 L441.5 9.1 L441.0 9.9 L440.5 8.4 L440.0 8.5 L439.5 9.7 L439.0 8.2 L438.5 8.5 L438.0 8.4 L437.5 8.5 L437.0 9.8 L436.5 9.7 L436.0 8.9 L435.5 8.1 L435.0 9.1 L434.5 8.4 L434.0 8.3 L433.5 8.5 L433.0 8.4 L432.5 8.4 L432.0 8.0 L431.5 9.1 L431.0 9.1 L430.5 9.8 L430.0 9.7 L429.5 9.6 L429.0 10.4 L428.5 9.9 L428.0 9.0 L427.5 8.7 L427.0 8.5 L426.5 9.1 L426.0 9.0 L425.5 11.8 L425.0 10.0 L424.5 9.8 L424.0 10.2 L423.5 8.9 L423.0 9.2 L422.5 8.5 L422.0 9.0 L421.5 9.3 L421.0 10.9 L420.5 10.8 L420.0 10.4 L419.5 8.9 L419.0 9.0 L418.5 8.5 L418.0 9.3 L417.5 8.9 L417.0 12.0 L416.5 10.1 L416.0 9.4 L415.5 9.1 L415.0 9.3 L414.5 8.8 L414.0 9.1 L413.5 9.5 L413.0 8.9 L412.5 9.0 L412.0 8.9 L411.5 9.0 L411.0 8.4 L410.5 8.7 L410.0 9.8 L409.5 9.7 L409.0 9.7 L408.5 9.5 L408.0 11.0 L407.5 9.6 L407.0 9.4 L406.5 9.0 L406.0 8.5 L405.5 9.6 L405.0 9.6 L404.5 9.8 L404.0 10.8 L403.5 9.3 L403.0 9.0 L402.5 9.0 L402.0 9.2 L401.5 8.2 L401.0 8.4 L400.5 8.5 L400.0 8.7 L399.5 9.3 L399.0 9.5 L398.5 9.2 L398.0 9.8 L397.5 10.0 L397.0 9.1 L396.5 9.5 L396.0 8.9 L395.5 8.4 L395.0 8.9 L394.5 8.2 L394.0 8.3 L393.5 8.8 L393.0 8.4 L392.5 8.5 L392.0 8.8 L391.5 8.5 L391.0 8.1 L390.5 8.5 L390.0 9.1 L389.5 10.0 L389.0 9.5 L388.5 9.5 L388.0 8.6 L387.5 8.8 L387.0 8.4 L386.5 8.4 L386.0 9.1 L385.5 9.0 L385.0 9.3 L384.5 10.1 L384.0 8.9 L383.5 9.0 L383.0 8.1 L382.5 7.9 L382.0 8.5 L381.5 8.5 L381.0 9.4 L380.5 10.0 L380.0 11.4 L379.5 10.5 L379.0 11.2 L378.5 9.9 L378.0 10.4 L377.5 9.7 L377.0 10.4 L376.5 9.6 L376.0 10.9 L375.5 10.5 L375.0 11.7 L374.5 9.3 L374.0 10.4 L373.5 8.6 L373.0 8.6 L372.5 8.2 L372.0 8.4 L371.5 9.0 L371.0 8.6 L370.5 8.2 L370.0 8.3 L369.5 9.2 L369.0 9.3 L368.5 11.1 L368.0 11.1 L367.5 10.0 L367.0 10.1 L366.5 10.7 L366.0 10.3 L365.5 9.3 L365.0 10.1 L364.5 9.5 L364.0 9.4 L363.5 8.6 L363.0 8.0 L362.5 8.4 L362.0 8.4 L361.5 8.4 L361.0 8.3 L360.5 8.2 L360.0 8.4 L359.5 9.0 L359.0 10.5 L358.5 11.1 L358.0 9.7 L357.5 9.4 L357.0 9.3 L356.5 8.7 L356.0 9.1 L355.5 8.1 L355.0 8.4 L354.5 8.3 L354.0 8.6 L353.5 8.1 L353.0 8.6 L352.5 8.6 L352.0 8.3 L351.5 8.7 L351.0 8.7 L350.5 9.6 L350.0 9.6 L349.5 8.9 L349.0 8.1 L348.5 8.2 L348.0 8.7 L347.5 8.2 L347.0 8.8 L346.5 9.9 L346.0 8.9 L345.5 10.0 L345.0 10.1 L344.5 10.7 L344.0 11.3 L343.5 9.9 L343.0 9.5 L342.5 9.3 L342.0 9.1 L341.5 8.7 L341.0 9.9 L340.5 9.2 L340.0 10.7 L339.5 11.2 L339.0 10.1 L338.5 9.9 L338.0 9.2 L337.5 8.1 L337.0 8.6 L336.5 8.8 L336.0 8.6 L335.5 8.7 L335.0 8.4 L334.5 9.0 L334.0 8.0 L333.5 8.7 L333.0 8.1 L332.5 8.7 L332.0 8.3 L331.5 11.6 L331.0 9.7 L330.5 8.3 L330.0 8.7 L329.5 8.5 L329.0 8.2 L328.5 8.8 L328.0 8.3 L327.5 8.5 L327.0 8.7 L326.5 9.6 L326.0 12.3 L325.5 9.3 L325.0 8.7 L324.5 8.6 L324.0 8.3 L323.5 9.1 L323.0 11.8 L322.5 9.2 L322.0 8.3 L321.5 9.1 L321.0 9.1 L320.5 9.4 L320.0 10.0 L319.5 11.0 L319.0 11.0 L318.5 10.1 L318.0 10.7 L317.5 10.0 L317.0 9.3 L316.5 9.1 L316.0 8.6 L315.5 8.7 L315.0 8.2 L314.5 8.7 L314.0 8.0 L313.5 9.0 L313.0 7.9 L312.5 8.2 L312.0 8.8 L311.5 8.6 L311.0 8.7 L310.5 10.1 L310.0 11.0 L309.5 10.1 L309.0 9.5 L308.5 9.4 L308.0 10.1 L307.5 9.6 L307.0 11.2 L306.5 9.5 L306.0 9.8 L305.5 8.6 L305.0 8.2 L304.5 8.0 L304.0 8.9 L303.5 9.1 L303.0 10.7 L302.5 10.1 L302.0 11.8 L301.5 9.2 L301.0 8.7 L300.5 9.3 L300.0 9.8 L299.5 10.6 L299.0 9.8 L298.5 9.3 L298.0 8.6 L297.5 8.5 L297.0 8.3 L296.5 9.6 L296.0 8.7 L295.5 9.9 L295.0 8.9 L294.5 7.9 L294.0 8.6 L293.5 9.7 L293.0 8.6 L292.5 8.6 L292.0 8.1 L291.5 8.7 L291.0 8.6 L290.5 7.8 L290.0 8.5 L289.5 8.8 L289.0 8.6 L288.5 8.9 L288.0 8.7 L287.5 9.9 L287.0 11.2 L286.5 10.6 L286.0 11.7 L285.5 11.2 L285.0 9.4 L284.5 10.5 L284.0 8.7 L283.5 8.9 L283.0 8.6 L282.5 8.4 L282.0 8.8 L281.5 9.2 L281.0 8.9 L280.5 9.4 L280.0 10.1 L279.5 9.6 L279.0 9.2 L278.5 9.3 L278.0 8.9 L277.5 8.6 L277.0 8.5 L276.5 8.6 L276.0 8.3 L275.5 8.2 L275.0 8.7 L274.5 8.7 L274.0 10.0 L273.5 10.0 L273.0 11.9 L272.5 11.3 L272.0 9.8 L271.5 10.1 L271.0 10.6 L270.5 9.6 L270.0 8.5 L269.5 8.5 L269.0 8.4 L268.5 8.2 L268.0 8.2 L267.5 8.9 L267.0 8.2 L266.5 8.3 L266.0 8.7 L265.5 8.7 L265.0 8.8 L264.5 10.2 L264.0 9.7 L263.5 10.5 L263.0 8.3 L262.5 7.9 L262.0 8.4 L261.5 8.3 L261.0 8.2 L260.5 9.7 L260.0 8.0 L259.5 8.3 L259.0 8.6 L258.5 8.1 L258.0 8.7 L257.5 8.0 L257.0 8.6 L256.5 9.8 L256.0 10.6 L255.5 8.3 L255.0 8.1 L254.5 8.5 L254.0 8.6 L253.5 8.3 L253.0 8.5 L252.5 8.6 L252.0 8.3 L251.5 8.9 L251.0 8.4 L250.5 8.8 L250.0 10.2 L249.5 11.1 L249.0 9.9 L248.5 9.1 L248.0 8.6 L247.5 8.6 L247.0 9.4 L246.5 9.7 L246.0 10.2 L245.5 11.9 L245.0 9.7 L244.5 10.3 L244.0 10.5 L243.5 9.2 L243.0 8.5 L242.5 8.2 L242.0 8.3 L241.5 8.9 L241.0 8.5 L240.5 8.7 L240.0 8.2 L239.5 8.1 L239.0 8.3 L238.5 8.1 L238.0 8.3 L237.5 9.8 L237.0 10.3 L236.5 8.5 L236.0 8.9 L235.5 10.4 L235.0 10.1 L234.5 10.5 L234.0 11.5 L233.5 10.1 L233.0 9.1 L232.5 9.4 L232.0 8.6 L231.5 8.5 L231.0 8.7 L230.5 8.3 L230.0 9.3 L229.5 9.0 L229.0 8.2 L228.5 8.8 L228.0 9.3 L227.5 9.7 L227.0 11.2 L226.5 10.9 L226.0 9.9 L225.5 9.0 L225.0 8.6 L224.5 8.7 L224.0 8.1 L223.5 9.0 L223.0 8.1 L222.5 8.6 L222.0 8.6 L221.5 8.4 L221.0 7.8 L220.5 8.9 L220.0 9.3 L219.5 10.2 L219.0 11.0 L218.5 9.9 L218.0 10.3 L217.5 10.7 L217.0 9.8 L216.5 9.3 L216.0 9.7 L215.5 9.9 L215.0 9.5 L214.5 9.0 L214.0 9.8 L213.5 8.5 L213.0 9.0 L212.5 8.2 L212.0 8.7 L211.5 8.6 L211.0 8.5 L210.5 8.6 L210.0 8.9 L209.5 10.5 L209.0 10.1 L208.5 9.8 L208.0 9.0 L207.5 8.4 L207.0 9.3 L206.5 10.6 L206.0 9.8 L205.5 9.5 L205.0 10.1 L204.5 9.2 L204.0 8.2 L203.5 8.3 L203.0 9.4 L202.5 8.4 L202.0 9.1 L201.5 8.7 L201.0 8.4 L200.5 9.3 L200.0 10.0 L199.5 12.8 L199.0 10.1 L198.5 9.5 L198.0 8.4 L197.5 8.4 L197.0 8.2 L196.5 8.5 L196.0 8.5 L195.5 8.4 L195.0 8.2 L194.5 8.4 L194.0 9.2 L193.5 11.1 L193.0 12.0 L192.5 10.1 L192.0 9.1 L191.5 8.3 L191.0 8.7 L190.5 9.2 L190.0 8.9 L189.5 8.7 L189.0 8.5 L188.5 8.9 L188.0 9.0 L187.5 8.4 L187.0 8.7 L186.5 8.3 L186.0 8.2 L185.5 8.6 L185.0 8.8 L184.5 8.9 L184.0 9.2 L183.5 9.5 L183.0 10.5 L182.5 10.1 L182.0 9.8 L181.5 8.2 L181.0 8.2 L180.5 8.0 L180.0 9.1 L179.5 8.4 L179.0 8.5 L178.5 8.5 L178.0 10.8 L177.5 10.4 L177.0 9.2 L176.5 9.1 L176.0 8.6 L175.5 8.1 L175.0 9.7 L174.5 8.6 L174.0 8.4 L173.5 8.1 L173.0 8.6 L172.5 8.2 L172.0 8.8 L171.5 9.2 L171.0 9.3 L170.5 9.2 L170.0 8.9 L169.5 9.2 L169.0 8.9 L168.5 10.5 L168.0 10.8 L167.5 10.3 L167.0 9.5 L166.5 9.2 L166.0 9.1 L165.5 8.4 L165.0 8.4 L164.5 8.2 L164.0 8.7 L163.5 8.4 L163.0 8.3 L162.5 8.4 L162.0 9.5 L161.5 9.3 L161.0 11.4 L160.5 10.7 L160.0 9.3 L159.5 8.4 L159.0 8.4 L158.5 8.1 L158.0 8.4 L157.5 8.7 L157.0 8.1 L156.5 8.5 L156.0 9.7 L155.5 10.2 L155.0 11.0 L154.5 10.4 L154.0 8.9 L153.5 8.6 L153.0 8.8 L152.5 9.0 L152.0 10.0 L151.5 9.3 L151.0 10.5 L150.5 10.9 L150.0 10.7 L149.5 9.4 L149.0 8.8 L148.5 8.6 L148.0 9.0 L147.5 9.0 L147.0 8.9 L146.5 9.0 L146.0 8.7 L145.5 10.0 L145.0 10.2 L144.5 11.3 L144.0 11.3 L143.5 11.5 L143.0 10.8 L142.5 8.8 L142.0 9.0 L141.5 9.1 L141.0 8.9 L140.5 8.6 L140.0 8.1 L139.5 8.2 L139.0 8.7 L138.5 8.2 L138.0 8.6 L137.5 8.7 L137.0 8.6 L136.5 9.3 L136.0 10.7 L135.5 9.0 L135.0 8.0 L134.5 8.8 L134.0 8.7 L133.5 8.3 L133.0 9.6 L132.5 8.8 L132.0 9.3 L131.5 8.7 L131.0 8.2 L130.5 8.1 L130.0 8.4 L129.5 8.2 L129.0 9.9 L128.5 11.5 L128.0 10.5 L127.5 9.8 L127.0 11.7 L126.5 11.0 L126.0 9.9 L125.5 10.2 L125.0 9.4 L124.5 8.4 L124.0 8.1 L123.5 8.0 L123.0 8.4 L122.5 9.0 L122.0 9.5 L121.5 11.8 L121.0 9.1 L120.5 8.7 L120.0 8.7 L119.5 9.0 L119.0 9.3 L118.5 9.7 L118.0 9.5 L117.5 9.6 L117.0 10.3 L116.5 8.6 L116.0 9.4 L115.5 8.5 L115.0 8.5 L114.5 8.0 L114.0 8.6 L113.5 9.0 L113.0 9.4 L112.5 9.9 L112.0 9.5 L111.5 9.8 L111.0 10.7 L110.5 8.9 L110.0 8.9 L109.5 9.1 L109.0 8.9 L108.5 8.9 L108.0 9.7 L107.5 8.7 L107.0 9.5 L106.5 10.0 L106.0 8.5 L105.5 9.0 L105.0 9.1 L104.5 8.2 L104.0 7.9 L103.5 8.5 L103.0 8.4 L102.5 8.1 L102.0 9.0 L101.5 8.7 L101.0 8.9 L100.5 8.3 L100.0 8.6 L99.5 10.3 L99.0 11.1 L98.5 10.9 L98.0 10.5 L97.5 9.0 L97.0 8.2 L96.5 9.0 L96.0 8.8 L95.5 8.3 L95.0 8.8 L94.5 8.7 L94.0 8.3 L93.5 8.3 L93.0 9.0 L92.5 10.7 L92.0 9.0 L91.5 9.5 L91.0 12.6 L90.5 10.7 L90.0 11.2 L89.5 12.5 L89.0 12.2 L88.5 12.1 L88.0 10.3 L87.5 8.9 L87.0 8.7 L86.5 9.4 L86.0 8.3 L85.5 9.1 L85.0 9.3 L84.5 9.7 L84.0 10.4 L83.5 10.7 L83.0 10.3 L82.5 10.9 L82.0 10.9 L81.5 11.7 L81.0 11.3 L80.5 10.0 L80.0 10.1 L79.5 10.6 L79.0 9.2 L78.5 10.6 L78.0 9.8 L77.5 8.9 L77.0 9.2 L76.5 9.6 L76.0 8.4 L75.5 8.5 L75.0 9.1 L74.5 11.7 L74.0 10.8 L73.5 11.0 L73.0 9.5 L72.5 9.4 L72.0 10.7 L71.5 9.4 L71.0 9.1 L70.5 8.7 L70.0 9.3 L69.5 9.0 L69.0 9.3 L68.5 9.0 L68.0 9.3 L67.5 9.4 L67.0 12.2 L66.5 12.1 L66.0 10.4 L65.5 9.5 L65.0 9.2 L64.5 9.7 L64.0 11.0 L63.5 9.5 L63.0 9.8 L62.5 10.4 L62.0 11.0 L61.5 10.8 L61.0 10.1 L60.5 10.7 L60.0 9.2 L59.5 9.5 L59.0 8.7 L58.5 8.7 L58.0 9.0 L57.5 8.4 L57.0 9.8 L56.5 8.8 L56.0 8.8 L55.5 8.8 L55.0 9.2 L54.5 9.4 L54.0 11.8 L53.5 12.4 L53.0 9.6 L52.5 9.2 L52.0 8.4 L51.5 9.3 L51.0 9.0 L50.5 8.8 L50.0 9.4 L49.5 9.9 L49.0 10.5 L48.5 10.9 L48.0 11.3 L47.5 9.4 L47.0 8.9 L46.5 9.1 L46.0 9.9 L45.5 8.9 L45.0 9.1 L44.5 9.9 L44.0 10.7 L43.5 11.6 L43.0 10.1 L42.5 9.6 L42.0 10.4 L41.5 9.7 L41.0 9.0 L40.5 9.3 L40.0 9.5 L39.5 12.9 L39.0 9.9 L38.5 9.4 L38.0 8.7 L37.5 8.8 L37.0 8.5 L36.5 9.4 L36.0 8.3 L35.5 8.7 L35.0 8.6 L34.5 8.9 L34.0 9.9 L33.5 8.8 L33.0 9.0 L32.5 9.8 L32.0 9.7 L31.5 9.2 L31.0 9.1 L30.5 9.9 L30.0 9.7 L29.5 10.3 L29.0 10.4 L28.5 9.8 L28.0 11.2 L27.5 12.6 L27.0 9.7 L26.5 11.8 L26.0 9.8 L25.5 11.3 L25.0 9.4 L24.5 11.7 L24.0 12.2 L23.5 11.0 L23.0 9.0 L22.5 10.3 L22.0 10.2 L21.5 12.9 L21.0 11.9 L20.5 10.3 L20.0 9.7 L19.5 10.8 L19.0 10.0 L18.5 10.3 L18.0 12.3 L17.5 12.1 L17.0 11.5 L16.5 11.6 L16.0 10.4 L15.5 9.9 L15.0 10.4 L14.5 11.5 L14.0 11.5 L13.5 12.2 L13.0 11.7 L12.5 9.8 L12.0 10.0 L11.5 9.5 L11.0 9.8 L10.5 9.2 L10.0 8.7 L9.5 9.4 L9.0 10.9 L8.5 9.6 L8.0 9.8 L7.5 9.3 L7.0 9.3 L6.5 9.4 L6.0 8.7 L5.5 9.3 L5.0 8.8 L4.5 9.1 L4.0 9.8 L3.5 10.1 L3.0 9.6 L2.5 11.7 L2.0 9.7 L1.5 10.2 L1.0 9.2 L0.5 9.4 L0.0 9.9 Z" fill="#e8684e"/><path d="M0.0 18.4 L0.5 17.0 L1.0 16.2 L1.5 18.5 L2.0 18.0 L2.5 18.4 L3.0 17.6 L3.5 17.8 L4.0 18.1 L4.5 18.4 L5.0 18.3 L5.5 18.7 L6.0 18.4 L6.5 18.1 L7.0 18.4 L7.5 18.3 L8.0 18.7 L8.5 17.5 L9.0 17.7 L9.5 16.8 L10.0 16.3 L10.5 15.7 L11.0 16.4 L11.5 15.5 L12.0 17.6 L12.5 17.8 L13.0 17.1 L13.5 16.8 L14.0 17.6 L14.5 17.3 L15.0 15.7 L15.5 16.9 L16.0 18.0 L16.5 17.7 L17.0 18.1 L17.5 18.5 L18.0 18.1 L18.5 18.9 L19.0 17.5 L19.5 17.9 L20.0 17.7 L20.5 16.6 L21.0 18.1 L21.5 17.7 L22.0 17.6 L22.5 17.6 L23.0 18.5 L23.5 18.5 L24.0 18.1 L24.5 17.8 L25.0 18.5 L25.5 18.7 L26.0 18.5 L26.5 17.6 L27.0 17.7 L27.5 16.8 L28.0 17.8 L28.5 17.8 L29.0 17.2 L29.5 18.6 L30.0 18.1 L30.5 18.2 L31.0 17.9 L31.5 18.1 L32.0 17.9 L32.5 18.1 L33.0 16.4 L33.5 16.3 L34.0 14.5 L34.5 17.2 L35.0 16.3 L35.5 18.3 L36.0 18.8 L36.5 18.9 L37.0 18.7 L37.5 18.1 L38.0 17.1 L38.5 17.9 L39.0 17.2 L39.5 15.6 L40.0 15.5 L40.5 16.1 L41.0 17.2 L41.5 17.0 L42.0 17.7 L42.5 17.9 L43.0 17.6 L43.5 17.6 L44.0 18.1 L44.5 17.5 L45.0 17.8 L45.5 17.5 L46.0 17.4 L46.5 17.7 L47.0 15.3 L47.5 14.5 L48.0 15.7 L48.5 16.1 L49.0 17.5 L49.5 17.4 L50.0 17.4 L50.5 18.4 L51.0 17.6 L51.5 17.2 L52.0 15.1 L52.5 16.0 L53.0 16.8 L53.5 17.0 L54.0 16.6 L54.5 15.4 L55.0 14.9 L55.5 15.6 L56.0 16.6 L56.5 16.4 L57.0 16.1 L57.5 18.2 L58.0 18.3 L58.5 17.9 L59.0 18.2 L59.5 18.3 L60.0 17.2 L60.5 17.7 L61.0 16.6 L61.5 15.9 L62.0 15.6 L62.5 16.8 L63.0 15.1 L63.5 17.5 L64.0 17.5 L64.5 18.0 L65.0 18.4 L65.5 18.8 L66.0 18.6 L66.5 17.7 L67.0 18.5 L67.5 16.7 L68.0 16.2 L68.5 16.4 L69.0 14.6 L69.5 17.1 L70.0 17.8 L70.5 16.5 L71.0 15.2 L71.5 17.0 L72.0 17.6 L72.5 18.1 L73.0 18.7 L73.5 18.0 L74.0 18.3 L74.5 18.3 L75.0 18.7 L75.5 18.9 L76.0 18.1 L76.5 18.2 L77.0 16.8 L77.5 16.5 L78.0 14.8 L78.5 14.5 L79.0 16.4 L79.5 16.8 L80.0 17.4 L80.5 18.6 L81.0 17.2 L81.5 17.1 L82.0 17.3 L82.5 15.9 L83.0 15.9 L83.5 15.8 L84.0 16.7 L84.5 16.9 L85.0 17.6 L85.5 17.7 L86.0 18.7 L86.5 16.8 L87.0 15.5 L87.5 18.6 L88.0 17.2 L88.5 18.1 L89.0 16.9 L89.5 16.3 L90.0 17.3 L90.5 17.8 L91.0 18.4 L91.5 18.8 L92.0 18.2 L92.5 17.8 L93.0 18.3 L93.5 17.8 L94.0 18.9 L94.5 19.0 L95.0 18.8 L95.5 16.2 L96.0 17.2 L96.5 18.6 L97.0 18.3 L97.5 17.1 L98.0 17.2 L98.5 17.5 L99.0 18.4 L99.5 18.5 L100.0 19.1 L100.5 18.6 L101.0 19.2 L101.5 19.1 L102.0 19.0 L102.5 18.8 L103.0 18.8 L103.5 18.1 L104.0 19.1 L104.5 18.8 L105.0 18.6 L105.5 15.5 L106.0 18.0 L106.5 18.7 L107.0 18.7 L107.5 19.0 L108.0 18.8 L108.5 18.8 L109.0 18.6 L109.5 18.3 L110.0 18.3 L110.5 17.7 L111.0 18.4 L111.5 17.3 L112.0 16.4 L112.5 17.7 L113.0 18.9 L113.5 18.7 L114.0 18.3 L114.5 18.7 L115.0 19.0 L115.5 19.1 L116.0 18.4 L116.5 18.8 L117.0 18.4 L117.5 17.6 L118.0 17.5 L118.5 18.3 L119.0 18.2 L119.5 17.8 L120.0 17.4 L120.5 18.7 L121.0 18.8 L121.5 19.2 L122.0 19.1 L122.5 19.2 L123.0 19.0 L123.5 18.1 L124.0 18.6 L124.5 17.6 L125.0 17.6 L125.5 17.7 L126.0 17.9 L126.5 18.0 L127.0 18.6 L127.5 18.3 L128.0 18.2 L128.5 18.8 L129.0 18.6 L129.5 18.5 L130.0 17.7 L130.5 17.2 L131.0 17.7 L131.5 16.0 L132.0 15.5 L132.5 15.5 L133.0 16.7 L133.5 18.5 L134.0 17.7 L134.5 18.5 L135.0 18.4 L135.5 18.7 L136.0 18.3 L136.5 17.5 L137.0 16.7 L137.5 17.9 L138.0 18.4 L138.5 19.0 L139.0 18.6 L139.5 19.2 L140.0 19.1 L140.5 18.3 L141.0 18.8 L141.5 18.8 L142.0 18.2 L142.5 16.8 L143.0 17.0 L143.5 18.3 L144.0 19.3 L144.5 19.0 L145.0 18.6 L145.5 19.1 L146.0 19.0 L146.5 19.2 L147.0 18.6 L147.5 18.3 L148.0 18.5 L148.5 17.7 L149.0 17.5 L149.5 17.7 L150.0 15.8 L150.5 16.1 L151.0 16.2 L151.5 17.0 L152.0 17.7 L152.5 18.1 L153.0 19.1 L153.5 19.2 L154.0 18.8 L154.5 18.1 L155.0 18.3 L155.5 17.3 L156.0 17.6 L156.5 17.3 L157.0 18.1 L157.5 17.8 L158.0 18.2 L158.5 18.6 L159.0 19.0 L159.5 18.9 L160.0 18.3 L160.5 18.3 L161.0 14.8 L161.5 17.6 L162.0 18.6 L162.5 19.1 L163.0 19.2 L163.5 19.1 L164.0 19.3 L164.5 19.2 L165.0 18.8 L165.5 18.5 L166.0 18.0 L166.5 15.7 L167.0 16.5 L167.5 17.1 L168.0 18.2 L168.5 18.7 L169.0 18.6 L169.5 16.9 L170.0 16.5 L170.5 16.2 L171.0 17.7 L171.5 16.6 L172.0 17.4 L172.5 18.0 L173.0 17.6 L173.5 16.2 L174.0 18.1 L174.5 18.8 L175.0 19.4 L175.5 19.1 L176.0 19.1 L176.5 19.3 L177.0 18.7 L177.5 18.6 L178.0 19.1 L178.5 18.8 L179.0 18.8 L179.5 18.8 L180.0 18.3 L180.5 17.6 L181.0 16.6 L181.5 17.5 L182.0 17.8 L182.5 18.5 L183.0 18.4 L183.5 18.7 L184.0 18.9 L184.5 18.7 L185.0 16.7 L185.5 16.7 L186.0 18.5 L186.5 19.1 L187.0 18.9 L187.5 19.0 L188.0 18.6 L188.5 18.7 L189.0 17.8 L189.5 16.8 L190.0 16.7 L190.5 15.9 L191.0 16.6 L191.5 17.8 L192.0 19.1 L192.5 19.4 L193.0 17.5 L193.5 18.7 L194.0 19.1 L194.5 18.6 L195.0 19.0 L195.5 19.1 L196.0 19.2 L196.5 18.9 L197.0 18.4 L197.5 17.3 L198.0 15.8 L198.5 16.2 L199.0 18.0 L199.5 18.1 L200.0 18.4 L200.5 18.6 L201.0 18.9 L201.5 18.6 L202.0 19.2 L202.5 18.9 L203.0 18.8 L203.5 17.7 L204.0 18.1 L204.5 18.1 L205.0 19.2 L205.5 18.9 L206.0 18.5 L206.5 18.9 L207.0 19.2 L207.5 18.5 L208.0 18.6 L208.5 18.0 L209.0 17.4 L209.5 17.1 L210.0 17.0 L210.5 15.8 L211.0 16.8 L211.5 17.2 L212.0 17.4 L212.5 18.0 L213.0 19.0 L213.5 19.1 L214.0 18.7 L214.5 18.4 L215.0 17.9 L215.5 16.9 L216.0 16.3 L216.5 17.0 L217.0 17.0 L217.5 18.1 L218.0 18.1 L218.5 17.8 L219.0 17.1 L219.5 18.6 L220.0 18.8 L220.5 18.4 L221.0 18.9 L221.5 18.9 L222.0 19.0 L222.5 18.5 L223.0 18.1 L223.5 17.2 L224.0 17.2 L224.5 18.5 L225.0 18.1 L225.5 18.5 L226.0 18.8 L226.5 18.9 L227.0 19.0 L227.5 19.0 L228.0 18.7 L228.5 18.4 L229.0 19.1 L229.5 17.8 L230.0 17.6 L230.5 17.1 L231.0 17.0 L231.5 16.9 L232.0 16.8 L232.5 16.7 L233.0 17.7 L233.5 16.9 L234.0 17.2 L234.5 18.2 L235.0 18.9 L235.5 18.7 L236.0 17.7 L236.5 18.3 L237.0 18.0 L237.5 16.4 L238.0 18.2 L238.5 17.2 L239.0 18.2 L239.5 18.2 L240.0 17.8 L240.5 17.7 L241.0 18.5 L241.5 19.1 L242.0 19.3 L242.5 18.5 L243.0 18.7 L243.5 18.3 L244.0 18.1 L244.5 18.4 L245.0 17.8 L245.5 18.0 L246.0 18.5 L246.5 18.2 L247.0 18.1 L247.5 18.7 L248.0 17.9 L248.5 17.7 L249.0 17.4 L249.5 17.9 L250.0 17.4 L250.5 18.0 L251.0 18.9 L251.5 18.7 L252.0 17.4 L252.5 16.0 L253.0 18.2 L253.5 18.7 L254.0 18.7 L254.5 18.2 L255.0 17.8 L255.5 17.5 L256.0 16.3 L256.5 16.6 L257.0 17.7 L257.5 18.1 L258.0 18.7 L258.5 18.9 L259.0 18.8 L259.5 17.8 L260.0 18.1 L260.5 16.0 L261.0 16.4 L261.5 17.4 L262.0 16.9 L262.5 19.1 L263.0 18.5 L263.5 18.6 L264.0 18.1 L264.5 17.2 L265.0 17.1 L265.5 18.1 L266.0 18.7 L266.5 18.9 L267.0 18.6 L267.5 19.1 L268.0 19.1 L268.5 18.4 L269.0 18.8 L269.5 17.3 L270.0 15.7 L270.5 16.5 L271.0 17.8 L271.5 17.1 L272.0 18.1 L272.5 18.3 L273.0 19.2 L273.5 18.5 L274.0 18.5 L274.5 18.6 L275.0 18.8 L275.5 19.0 L276.0 18.1 L276.5 18.2 L277.0 18.2 L277.5 17.0 L278.0 16.9 L278.5 17.1 L279.0 17.0 L279.5 16.5 L280.0 17.7 L280.5 18.5 L281.0 17.4 L281.5 16.9 L282.0 16.1 L282.5 17.8 L283.0 16.7 L283.5 17.2 L284.0 17.9 L284.5 16.6 L285.0 14.5 L285.5 17.2 L286.0 17.6 L286.5 18.1 L287.0 19.0 L287.5 18.9 L288.0 19.1 L288.5 18.4 L289.0 19.2 L289.5 18.6 L290.0 19.1 L290.5 18.9 L291.0 18.6 L291.5 18.7 L292.0 18.2 L292.5 18.1 L293.0 17.2 L293.5 18.0 L294.0 16.5 L294.5 17.5 L295.0 17.4 L295.5 17.6 L296.0 18.5 L296.5 18.7 L297.0 19.1 L297.5 19.2 L298.0 19.0 L298.5 18.9 L299.0 19.1 L299.5 18.9 L300.0 18.9 L300.5 18.2 L301.0 18.0 L301.5 19.1 L302.0 18.9 L302.5 18.7 L303.0 18.8 L303.5 18.9 L304.0 18.9 L304.5 18.4 L305.0 18.2 L305.5 18.1 L306.0 19.0 L306.5 18.5 L307.0 18.4 L307.5 19.0 L308.0 18.5 L308.5 18.4 L309.0 18.1 L309.5 17.9 L310.0 18.1 L310.5 18.3 L311.0 18.5 L311.5 18.9 L312.0 18.6 L312.5 19.1 L313.0 17.1 L313.5 15.9 L314.0 18.1 L314.5 19.2 L315.0 19.1 L315.5 19.0 L316.0 18.7 L316.5 18.5 L317.0 18.9 L317.5 19.0 L318.0 18.3 L318.5 17.6 L319.0 16.7 L319.5 17.4 L320.0 16.9 L320.5 15.9 L321.0 17.7 L321.5 16.7 L322.0 17.0 L322.5 18.1 L323.0 17.6 L323.5 18.9 L324.0 18.5 L324.5 18.7 L325.0 19.4 L325.5 18.4 L326.0 19.3 L326.5 18.3 L327.0 17.9 L327.5 18.0 L328.0 16.6 L328.5 17.8 L329.0 18.4 L329.5 18.7 L330.0 19.3 L330.5 19.1 L331.0 18.6 L331.5 19.1 L332.0 18.8 L332.5 18.1 L333.0 18.7 L333.5 16.8 L334.0 17.5 L334.5 15.5 L335.0 16.1 L335.5 16.8 L336.0 16.2 L336.5 17.5 L337.0 18.0 L337.5 18.6 L338.0 18.2 L338.5 18.5 L339.0 19.4 L339.5 18.7 L340.0 19.1 L340.5 18.6 L341.0 18.9 L341.5 18.3 L342.0 18.4 L342.5 17.9 L343.0 17.3 L343.5 18.1 L344.0 17.3 L344.5 17.9 L345.0 17.1 L345.5 18.0 L346.0 17.0 L346.5 18.9 L347.0 18.8 L347.5 18.3 L348.0 17.7 L348.5 15.5 L349.0 15.5 L349.5 17.8 L350.0 18.3 L350.5 18.5 L351.0 18.6 L351.5 18.5 L352.0 17.6 L352.5 17.9 L353.0 18.5 L353.5 19.0 L354.0 18.5 L354.5 18.5 L355.0 18.7 L355.5 18.0 L356.0 18.9 L356.5 18.9 L357.0 18.8 L357.5 18.9 L358.0 18.9 L358.5 17.9 L359.0 18.5 L359.5 18.2 L360.0 18.4 L360.5 18.5 L361.0 17.4 L361.5 17.2 L362.0 17.6 L362.5 18.0 L363.0 17.6 L363.5 18.3 L364.0 18.9 L364.5 18.5 L365.0 19.3 L365.5 19.1 L366.0 17.4 L366.5 19.2 L367.0 18.3 L367.5 18.0 L368.0 16.3 L368.5 17.0 L369.0 17.4 L369.5 18.7 L370.0 18.4 L370.5 19.1 L371.0 19.1 L371.5 18.7 L372.0 19.1 L372.5 18.9 L373.0 18.8 L373.5 18.1 L374.0 17.9 L374.5 16.3 L375.0 14.5 L375.5 18.0 L376.0 15.7 L376.5 17.3 L377.0 16.6 L377.5 17.5 L378.0 19.0 L378.5 19.0 L379.0 18.9 L379.5 17.9 L380.0 17.9 L380.5 17.4 L381.0 17.5 L381.5 15.6 L382.0 16.6 L382.5 17.8 L383.0 18.3 L383.5 18.8 L384.0 18.4 L384.5 17.6 L385.0 16.4 L385.5 18.7 L386.0 18.8 L386.5 18.8 L387.0 19.0 L387.5 18.8 L388.0 18.5 L388.5 18.0 L389.0 18.3 L389.5 18.2 L390.0 17.5 L390.5 16.9 L391.0 15.8 L391.5 16.2 L392.0 16.8 L392.5 18.5 L393.0 17.8 L393.5 19.0 L394.0 19.1 L394.5 18.9 L395.0 18.4 L395.5 16.7 L396.0 18.4 L396.5 18.8 L397.0 19.0 L397.5 19.1 L398.0 18.6 L398.5 19.1 L399.0 18.8 L399.5 18.9 L400.0 18.5 L400.5 18.5 L401.0 17.9 L401.5 17.3 L402.0 18.0 L402.5 18.4 L403.0 18.9 L403.5 19.1 L404.0 19.0 L404.5 19.1 L405.0 19.1 L405.5 17.7 L406.0 19.2 L406.5 18.7 L407.0 18.7 L407.5 17.2 L408.0 15.9 L408.5 17.4 L409.0 18.7 L409.5 19.0 L410.0 18.6 L410.5 18.6 L411.0 18.5 L411.5 19.1 L412.0 18.9 L412.5 18.7 L413.0 19.1 L413.5 19.1 L414.0 18.6 L414.5 18.4 L415.0 18.7 L415.5 18.8 L416.0 17.1 L416.5 18.2 L417.0 18.0 L417.5 18.3 L418.0 19.0 L418.5 19.0 L419.0 19.0 L419.5 16.7 L420.0 18.1 L420.5 16.9 L421.0 15.9 L421.5 17.5 L422.0 17.0 L422.5 16.9 L423.0 14.9 L423.5 17.1 L424.0 18.4 L424.5 19.3 L425.0 19.0 L425.5 18.6 L426.0 18.9 L426.5 17.8 L427.0 16.8 L427.5 17.2 L428.0 15.7 L428.5 16.5 L429.0 18.2 L429.5 18.6 L430.0 19.0 L430.5 19.1 L431.0 19.1 L431.5 19.2 L432.0 18.6 L432.5 19.2 L433.0 18.8 L433.5 18.4 L434.0 19.0 L434.5 19.1 L435.0 18.4 L435.5 18.2 L436.0 18.1 L436.5 16.9 L437.0 17.0 L437.5 16.1 L438.0 17.7 L438.5 17.4 L439.0 17.8 L439.5 18.0 L440.0 18.5 L440.5 18.2 L441.0 18.3 L441.5 19.1 L442.0 17.9 L442.5 18.3 L443.0 18.4 L443.5 19.1 L444.0 18.9 L444.5 18.7 L445.0 19.4 L445.5 18.8 L446.0 19.1 L446.5 18.7 L447.0 17.6 L447.5 17.9 L448.0 17.6 L448.5 18.3 L449.0 17.9 L449.5 18.3 L450.0 18.4 L450.5 19.0 L451.0 18.9 L451.5 18.5 L452.0 19.0 L452.5 19.1 L453.0 19.2 L453.5 18.6 L454.0 18.3 L454.5 19.3 L455.0 18.6 L455.5 18.7 L456.0 19.3 L456.5 19.2 L457.0 17.8 L457.5 17.9 L458.0 18.9 L458.5 18.6 L459.0 17.7 L459.5 18.4 L460.0 18.8 L460.5 18.6 L461.0 18.3 L461.5 19.0 L462.0 18.1 L462.5 17.7 L463.0 17.1 L463.5 16.3 L464.0 17.9 L464.5 18.2 L465.0 18.2 L465.5 17.3 L466.0 18.5 L466.5 18.3 L467.0 18.5 L467.5 19.3 L468.0 18.3 L468.5 19.3 L469.0 18.5 L469.5 18.6 L470.0 18.4 L470.5 18.4 L471.0 17.5 L471.5 17.8 L472.0 17.4 L472.5 16.9 L473.0 17.0 L473.5 18.6 L474.0 17.6 L474.5 18.6 L475.0 18.8 L475.5 17.9 L476.0 18.1 L476.5 17.5 L477.0 17.4 L477.5 18.0 L478.0 17.5 L478.5 18.6 L479.0 18.6 L479.5 19.1 L480.0 18.9 L480.5 19.0 L481.0 19.1 L481.5 18.4 L482.0 18.6 L482.5 17.7 L483.0 17.2 L483.5 17.6 L484.0 18.0 L484.5 17.4 L485.0 18.1 L485.5 18.5 L486.0 18.8 L486.5 18.5 L487.0 19.1 L487.5 17.9 L488.0 17.3 L488.5 18.1 L489.0 17.4 L489.5 18.0 L490.0 17.5 L490.5 18.6 L491.0 17.9 L491.5 16.8 L492.0 17.8 L492.5 18.4 L493.0 18.3 L493.5 18.0 L494.0 18.3 L494.5 17.0 L495.0 17.1 L495.5 18.0 L496.0 18.5 L496.5 18.6 L497.0 18.9 L497.5 18.7 L498.0 19.0 L498.5 19.2 L499.0 18.0 L499.5 17.9 L500.0 16.6 L500.5 17.0 L501.0 16.8 L501.5 17.5 L502.0 18.6 L502.5 18.9 L503.0 17.8 L503.5 18.4 L504.0 17.0 L504.5 17.3 L505.0 17.3 L505.5 18.0 L506.0 18.8 L506.5 18.9 L507.0 19.3 L507.5 19.1 L508.0 18.5 L508.5 19.2 L509.0 18.6 L509.5 17.5 L510.0 17.7 L510.5 17.5 L511.0 18.7 L511.5 19.2 L512.0 18.6 L512.5 19.0 L513.0 18.9 L513.5 18.9 L514.0 18.7 L514.5 18.0 L515.0 18.7 L515.5 18.1 L516.0 16.7 L516.5 18.1 L517.0 18.6 L517.5 18.7 L518.0 19.1 L518.5 18.6 L519.0 19.2 L519.5 18.6 L520.0 19.0 L520.5 18.4 L521.0 18.7 L521.5 18.5 L522.0 18.2 L522.5 17.5 L523.0 17.7 L523.5 18.1 L524.0 18.8 L524.5 18.9 L525.0 19.0 L525.5 18.7 L526.0 19.1 L526.5 18.8 L527.0 17.7 L527.5 18.7 L528.0 18.0 L528.5 17.9 L529.0 16.1 L529.5 17.3 L530.0 16.6 L530.5 16.8 L531.0 17.0 L531.5 17.1 L532.0 17.8 L532.5 17.3 L533.0 17.6 L533.5 15.7 L533.5 24.6 L533.0 23.3 L532.5 23.5 L532.0 22.9 L531.5 23.7 L531.0 23.6 L530.5 23.6 L530.0 24.2 L529.5 23.4 L529.0 24.7 L528.5 22.7 L528.0 22.5 L527.5 22.0 L527.0 22.9 L526.5 22.0 L526.0 21.5 L525.5 21.9 L525.0 21.6 L524.5 21.6 L524.0 21.7 L523.5 22.5 L523.0 23.1 L522.5 23.3 L522.0 22.6 L521.5 22.2 L521.0 22.0 L520.5 22.3 L520.0 21.7 L519.5 21.9 L519.0 21.4 L518.5 22.2 L518.0 21.5 L517.5 21.9 L517.0 21.8 L516.5 22.6 L516.0 23.8 L515.5 22.5 L515.0 21.9 L514.5 22.6 L514.0 21.8 L513.5 21.8 L513.0 21.7 L512.5 21.8 L512.0 22.2 L511.5 21.5 L511.0 22.1 L510.5 23.2 L510.0 23.0 L509.5 23.0 L509.0 22.2 L508.5 21.4 L508.0 22.1 L507.5 21.6 L507.0 21.4 L506.5 21.6 L506.0 21.8 L505.5 22.6 L505.0 23.4 L504.5 23.4 L504.0 23.9 L503.5 22.2 L503.0 22.8 L502.5 21.9 L502.0 22.0 L501.5 23.0 L501.0 23.6 L500.5 23.9 L500.0 24.0 L499.5 22.7 L499.0 22.5 L498.5 21.5 L498.0 21.8 L497.5 21.8 L497.0 21.9 L496.5 22.1 L496.0 22.2 L495.5 22.7 L495.0 23.5 L494.5 23.9 L494.0 22.5 L493.5 22.7 L493.0 22.2 L492.5 22.2 L492.0 22.7 L491.5 23.6 L491.0 22.5 L490.5 22.2 L490.0 23.3 L489.5 22.7 L489.0 23.1 L488.5 22.4 L488.0 23.4 L487.5 22.7 L487.0 21.6 L486.5 22.0 L486.0 21.7 L485.5 22.1 L485.0 22.5 L484.5 23.0 L484.0 22.8 L483.5 23.0 L483.0 23.5 L482.5 22.7 L482.0 22.1 L481.5 22.2 L481.0 21.6 L480.5 21.7 L480.0 21.8 L479.5 21.6 L479.0 22.1 L478.5 21.9 L478.0 23.3 L477.5 22.6 L477.0 23.2 L476.5 23.1 L476.0 22.7 L475.5 22.7 L475.0 21.9 L474.5 22.0 L474.0 23.3 L473.5 21.9 L473.0 23.5 L472.5 23.7 L472.0 23.3 L471.5 22.9 L471.0 22.9 L470.5 22.3 L470.0 22.4 L469.5 21.9 L469.0 22.1 L468.5 21.3 L468.0 22.4 L467.5 21.3 L467.0 22.2 L466.5 22.5 L466.0 22.1 L465.5 23.3 L465.0 22.5 L464.5 22.6 L464.0 23.0 L463.5 24.2 L463.0 23.7 L462.5 22.9 L462.0 22.4 L461.5 21.6 L461.0 22.3 L460.5 22.0 L460.0 21.9 L459.5 22.2 L459.0 23.0 L458.5 22.1 L458.0 21.7 L457.5 22.9 L457.0 23.1 L456.5 21.5 L456.0 21.3 L455.5 22.0 L455.0 22.2 L454.5 21.3 L454.0 22.5 L453.5 22.1 L453.0 21.5 L452.5 21.5 L452.0 21.6 L451.5 22.1 L451.0 21.9 L450.5 21.6 L450.0 22.3 L449.5 22.5 L449.0 22.7 L448.5 22.4 L448.0 22.8 L447.5 22.6 L447.0 22.8 L446.5 21.9 L446.0 21.6 L445.5 21.8 L445.0 21.3 L444.5 21.8 L444.0 21.7 L443.5 21.6 L443.0 22.2 L442.5 22.4 L442.0 23.0 L441.5 21.4 L441.0 22.1 L440.5 22.5 L440.0 22.1 L439.5 22.8 L439.0 22.7 L438.5 23.2 L438.0 23.1 L437.5 24.7 L437.0 23.6 L436.5 23.5 L436.0 22.8 L435.5 22.4 L435.0 22.2 L434.5 21.6 L434.0 21.6 L433.5 22.0 L433.0 21.9 L432.5 21.6 L432.0 22.1 L431.5 21.5 L431.0 21.4 L430.5 21.6 L430.0 21.7 L429.5 22.1 L429.0 22.5 L428.5 24.0 L428.0 25.4 L427.5 23.6 L427.0 24.1 L426.5 22.7 L426.0 21.7 L425.5 22.0 L425.0 21.8 L424.5 21.4 L424.0 22.1 L423.5 23.5 L423.0 25.4 L422.5 24.0 L422.0 23.8 L421.5 23.1 L421.0 24.4 L420.5 23.9 L420.0 22.4 L419.5 23.7 L419.0 21.5 L418.5 21.7 L418.0 21.6 L417.5 22.4 L417.0 22.5 L416.5 22.5 L416.0 23.8 L415.5 21.8 L415.0 21.9 L414.5 22.2 L414.0 21.9 L413.5 21.6 L413.0 21.6 L412.5 22.0 L412.0 21.8 L411.5 21.5 L411.0 22.2 L410.5 22.1 L410.0 22.0 L409.5 21.8 L409.0 22.0 L408.5 23.3 L408.0 24.7 L407.5 23.2 L407.0 21.8 L406.5 22.0 L406.0 21.4 L405.5 22.7 L405.0 21.5 L404.5 21.6 L404.0 21.7 L403.5 21.5 L403.0 21.7 L402.5 22.1 L402.0 22.8 L401.5 23.3 L401.0 22.6 L400.5 22.1 L400.0 22.0 L399.5 21.7 L399.0 21.9 L398.5 21.6 L398.0 22.1 L397.5 21.6 L397.0 21.6 L396.5 21.9 L396.0 22.2 L395.5 23.8 L395.0 22.2 L394.5 21.8 L394.0 21.6 L393.5 21.5 L393.0 22.9 L392.5 22.0 L392.0 23.6 L391.5 24.8 L391.0 24.7 L390.5 23.5 L390.0 22.9 L389.5 22.3 L389.0 22.1 L388.5 22.5 L388.0 22.1 L387.5 21.7 L387.0 21.7 L386.5 21.9 L386.0 22.0 L385.5 21.8 L385.0 24.5 L384.5 23.1 L384.0 22.2 L383.5 21.7 L383.0 22.3 L382.5 22.9 L382.0 23.7 L381.5 25.1 L381.0 23.4 L380.5 23.2 L380.0 22.8 L379.5 22.7 L379.0 21.7 L378.5 21.6 L378.0 21.7 L377.5 23.1 L377.0 23.9 L376.5 23.5 L376.0 25.3 L375.5 22.7 L375.0 25.8 L374.5 24.6 L374.0 22.6 L373.5 22.5 L373.0 21.8 L372.5 21.6 L372.0 21.6 L371.5 21.9 L371.0 21.5 L370.5 21.7 L370.0 22.2 L369.5 22.1 L369.0 23.0 L368.5 23.8 L368.0 24.7 L367.5 22.6 L367.0 22.3 L366.5 21.6 L366.0 23.4 L365.5 21.4 L365.0 21.4 L364.5 22.2 L364.0 21.9 L363.5 22.5 L363.0 23.0 L362.5 22.5 L362.0 23.1 L361.5 23.6 L361.0 23.5 L360.5 22.0 L360.0 22.1 L359.5 22.4 L359.0 22.2 L358.5 22.7 L358.0 21.7 L357.5 21.8 L357.0 21.8 L356.5 21.7 L356.0 21.8 L355.5 22.7 L355.0 22.0 L354.5 22.2 L354.0 22.3 L353.5 21.6 L353.0 22.3 L352.5 22.7 L352.0 23.1 L351.5 22.0 L351.0 21.9 L350.5 22.0 L350.0 22.4 L349.5 22.7 L349.0 24.7 L348.5 24.9 L348.0 22.7 L347.5 22.2 L347.0 22.0 L346.5 21.8 L346.0 23.8 L345.5 22.6 L345.0 23.6 L344.5 22.8 L344.0 23.6 L343.5 22.4 L343.0 23.2 L342.5 22.7 L342.0 22.3 L341.5 22.5 L341.0 21.9 L340.5 22.2 L340.0 21.5 L339.5 21.9 L339.0 21.3 L338.5 22.0 L338.0 22.5 L337.5 21.9 L337.0 22.5 L336.5 23.3 L336.0 24.4 L335.5 24.2 L335.0 24.3 L334.5 24.9 L334.0 23.2 L333.5 23.7 L333.0 22.2 L332.5 22.7 L332.0 21.9 L331.5 21.6 L331.0 21.9 L330.5 21.6 L330.0 21.3 L329.5 21.9 L329.0 22.2 L328.5 22.9 L328.0 24.1 L327.5 22.5 L327.0 22.5 L326.5 22.2 L326.0 21.4 L325.5 22.2 L325.0 21.2 L324.5 21.9 L324.0 22.2 L323.5 21.8 L323.0 23.2 L322.5 22.3 L322.0 23.8 L321.5 24.0 L321.0 23.1 L320.5 25.2 L320.0 23.4 L319.5 23.5 L319.0 23.7 L318.5 23.3 L318.0 22.5 L317.5 21.7 L317.0 21.8 L316.5 22.0 L316.0 22.0 L315.5 21.5 L315.0 21.5 L314.5 21.4 L314.0 22.3 L313.5 25.0 L313.0 23.5 L312.5 21.4 L312.0 22.0 L311.5 21.7 L311.0 22.1 L310.5 22.5 L310.0 22.5 L309.5 22.9 L309.0 22.5 L308.5 22.2 L308.0 22.0 L307.5 21.6 L307.0 22.2 L306.5 22.2 L306.0 21.5 L305.5 22.4 L305.0 22.4 L304.5 22.3 L304.0 21.8 L303.5 21.7 L303.0 21.7 L302.5 22.0 L302.0 21.8 L301.5 21.7 L301.0 22.8 L300.5 22.6 L300.0 21.9 L299.5 21.6 L299.0 21.6 L298.5 21.8 L298.0 21.6 L297.5 21.5 L297.0 21.4 L296.5 22.1 L296.0 22.4 L295.5 22.8 L295.0 23.3 L294.5 23.1 L294.0 23.9 L293.5 22.5 L293.0 23.7 L292.5 22.5 L292.0 22.6 L291.5 22.0 L291.0 22.1 L290.5 21.8 L290.0 21.4 L289.5 22.1 L289.0 21.6 L288.5 22.1 L288.0 21.5 L287.5 21.7 L287.0 21.8 L286.5 22.5 L286.0 22.9 L285.5 23.6 L285.0 26.6 L284.5 24.1 L284.0 22.8 L283.5 23.4 L283.0 24.2 L282.5 22.6 L282.0 24.7 L281.5 23.5 L281.0 23.0 L280.5 22.0 L280.0 23.2 L279.5 24.2 L279.0 23.9 L278.5 23.3 L278.0 23.9 L277.5 23.7 L277.0 22.6 L276.5 22.4 L276.0 22.5 L275.5 21.6 L275.0 21.8 L274.5 22.1 L274.0 22.1 L273.5 22.3 L273.0 21.5 L272.5 22.3 L272.0 22.7 L271.5 23.7 L271.0 22.8 L270.5 24.0 L270.0 25.1 L269.5 23.6 L269.0 21.9 L268.5 22.2 L268.0 21.7 L267.5 21.6 L267.0 22.1 L266.5 21.6 L266.0 22.1 L265.5 22.8 L265.0 23.6 L264.5 23.2 L264.0 22.7 L263.5 22.2 L263.0 22.0 L262.5 21.5 L262.0 23.8 L261.5 23.0 L261.0 24.0 L260.5 24.6 L260.0 22.3 L259.5 23.0 L259.0 21.9 L258.5 21.8 L258.0 21.8 L257.5 22.4 L257.0 23.1 L256.5 24.2 L256.0 24.5 L255.5 22.9 L255.0 23.0 L254.5 22.3 L254.0 22.0 L253.5 22.0 L253.0 22.3 L252.5 24.6 L252.0 23.5 L251.5 22.0 L251.0 21.6 L250.5 22.5 L250.0 23.5 L249.5 22.6 L249.0 23.3 L248.5 23.1 L248.0 22.6 L247.5 21.9 L247.0 22.4 L246.5 22.5 L246.0 22.2 L245.5 22.5 L245.0 22.7 L244.5 22.4 L244.0 22.7 L243.5 22.2 L243.0 21.9 L242.5 22.2 L242.0 21.3 L241.5 21.5 L241.0 22.2 L240.5 23.0 L240.0 22.6 L239.5 22.4 L239.0 22.4 L238.5 23.6 L238.0 22.7 L237.5 24.0 L237.0 22.6 L236.5 22.2 L236.0 22.7 L235.5 22.0 L235.0 21.8 L234.5 22.2 L234.0 23.7 L233.5 23.8 L233.0 22.7 L232.5 24.0 L232.0 24.2 L231.5 24.0 L231.0 23.4 L230.5 23.6 L230.0 23.3 L229.5 22.8 L229.0 21.6 L228.5 22.1 L228.0 21.9 L227.5 21.6 L227.0 21.7 L226.5 21.9 L226.0 21.9 L225.5 22.1 L225.0 22.6 L224.5 22.1 L224.0 23.3 L223.5 23.4 L223.0 22.7 L222.5 22.0 L222.0 21.6 L221.5 21.7 L221.0 21.7 L220.5 22.1 L220.0 21.9 L219.5 22.2 L219.0 23.7 L218.5 23.0 L218.0 22.4 L217.5 22.4 L217.0 23.9 L216.5 23.5 L216.0 24.1 L215.5 24.0 L215.0 22.9 L214.5 22.4 L214.0 22.1 L213.5 21.5 L213.0 21.6 L212.5 22.6 L212.0 23.4 L211.5 23.5 L211.0 23.6 L210.5 24.7 L210.0 23.5 L209.5 23.5 L209.0 23.4 L208.5 22.4 L208.0 22.0 L207.5 22.0 L207.0 21.5 L206.5 21.7 L206.0 21.9 L205.5 21.9 L205.0 21.6 L204.5 22.6 L204.0 22.6 L203.5 23.2 L203.0 21.9 L202.5 21.6 L202.0 21.3 L201.5 21.9 L201.0 21.7 L200.5 22.0 L200.0 22.3 L199.5 22.8 L199.0 22.9 L198.5 24.8 L198.0 25.0 L197.5 23.5 L197.0 22.3 L196.5 21.7 L196.0 21.4 L195.5 21.6 L195.0 21.8 L194.5 22.1 L194.0 21.6 L193.5 22.0 L193.0 23.3 L192.5 21.4 L192.0 21.6 L191.5 22.9 L191.0 24.1 L190.5 25.0 L190.0 24.0 L189.5 24.0 L189.0 23.0 L188.5 22.1 L188.0 22.0 L187.5 21.6 L187.0 21.8 L186.5 21.4 L186.0 22.4 L185.5 24.2 L185.0 23.9 L184.5 21.9 L184.0 21.7 L183.5 21.8 L183.0 22.1 L182.5 22.2 L182.0 22.9 L181.5 23.2 L181.0 23.9 L180.5 23.3 L180.0 22.2 L179.5 21.9 L179.0 21.9 L178.5 21.9 L178.0 21.6 L177.5 22.0 L177.0 22.0 L176.5 21.3 L176.0 21.5 L175.5 21.5 L175.0 21.3 L174.5 21.9 L174.0 22.5 L173.5 24.3 L173.0 23.2 L172.5 22.4 L172.0 23.3 L171.5 24.3 L171.0 23.0 L170.5 24.2 L170.0 24.3 L169.5 23.6 L169.0 22.0 L168.5 21.8 L168.0 22.5 L167.5 23.4 L167.0 24.5 L166.5 24.8 L166.0 22.7 L165.5 22.1 L165.0 21.8 L164.5 21.3 L164.0 21.5 L163.5 21.6 L163.0 21.4 L162.5 21.6 L162.0 21.9 L161.5 23.2 L161.0 25.8 L160.5 22.4 L160.0 22.2 L159.5 21.9 L159.0 21.7 L158.5 21.8 L158.0 22.4 L157.5 23.1 L157.0 22.4 L156.5 23.5 L156.0 23.3 L155.5 23.4 L155.0 22.4 L154.5 22.6 L154.0 21.9 L153.5 21.4 L153.0 21.7 L152.5 22.7 L152.0 22.9 L151.5 23.7 L151.0 24.1 L150.5 24.9 L150.0 24.5 L149.5 23.1 L149.0 23.3 L148.5 23.1 L148.0 22.1 L147.5 22.6 L147.0 22.1 L146.5 21.3 L146.0 21.6 L145.5 21.6 L145.0 22.2 L144.5 21.5 L144.0 21.3 L143.5 22.3 L143.0 23.8 L142.5 23.5 L142.0 22.6 L141.5 21.8 L141.0 21.9 L140.5 22.4 L140.0 21.6 L139.5 21.4 L139.0 22.1 L138.5 21.6 L138.0 22.3 L137.5 22.7 L137.0 24.1 L136.5 23.1 L136.0 22.5 L135.5 22.0 L135.0 22.1 L134.5 22.1 L134.0 22.9 L133.5 22.3 L133.0 24.3 L132.5 25.1 L132.0 25.3 L131.5 24.8 L131.0 22.8 L130.5 23.2 L130.0 23.0 L129.5 22.0 L129.0 22.1 L128.5 22.0 L128.0 22.5 L127.5 22.6 L127.0 22.1 L126.5 22.5 L126.0 22.7 L125.5 22.9 L125.0 22.9 L124.5 22.8 L124.0 22.2 L123.5 22.7 L123.0 21.7 L122.5 21.6 L122.0 21.6 L121.5 21.6 L121.0 21.7 L120.5 21.9 L120.0 23.2 L119.5 22.9 L119.0 22.6 L118.5 22.2 L118.0 23.4 L117.5 23.1 L117.0 22.3 L116.5 21.9 L116.0 22.3 L115.5 21.6 L115.0 21.7 L114.5 21.9 L114.0 22.4 L113.5 22.0 L113.0 21.8 L112.5 22.7 L112.0 24.1 L111.5 23.2 L111.0 22.1 L110.5 23.2 L110.0 22.4 L109.5 22.4 L109.0 22.2 L108.5 21.8 L108.0 21.8 L107.5 21.6 L107.0 21.8 L106.5 22.0 L106.0 22.6 L105.5 25.6 L105.0 21.9 L104.5 22.0 L104.0 21.7 L103.5 22.5 L103.0 21.8 L102.5 21.9 L102.0 21.5 L101.5 21.5 L101.0 21.4 L100.5 21.9 L100.0 21.5 L99.5 22.3 L99.0 22.1 L98.5 23.3 L98.0 23.3 L97.5 23.3 L97.0 22.4 L96.5 21.9 L96.0 23.4 L95.5 24.6 L95.0 22.0 L94.5 21.7 L94.0 21.7 L93.5 22.6 L93.0 22.1 L92.5 23.0 L92.0 22.6 L91.5 21.7 L91.0 22.3 L90.5 23.1 L90.0 23.3 L89.5 24.5 L89.0 23.6 L88.5 22.5 L88.0 23.6 L87.5 21.9 L87.0 25.5 L86.5 23.7 L86.0 21.8 L85.5 22.8 L85.0 23.1 L84.5 23.5 L84.0 24.2 L83.5 24.9 L83.0 25.0 L82.5 25.0 L82.0 23.1 L81.5 23.5 L81.0 23.5 L80.5 22.2 L80.0 23.2 L79.5 24.0 L79.0 23.9 L78.5 25.7 L78.0 25.4 L77.5 24.4 L77.0 23.8 L76.5 22.4 L76.0 22.6 L75.5 21.9 L75.0 21.9 L74.5 22.3 L74.0 22.4 L73.5 22.8 L73.0 21.9 L72.5 22.7 L72.0 22.8 L71.5 23.9 L71.0 25.5 L70.5 24.2 L70.0 22.7 L69.5 23.4 L69.0 25.4 L68.5 24.4 L68.0 24.6 L67.5 23.6 L67.0 22.2 L66.5 23.0 L66.0 22.1 L65.5 21.9 L65.0 22.2 L64.5 22.8 L64.0 23.3 L63.5 22.8 L63.0 25.4 L62.5 24.0 L62.0 25.0 L61.5 25.1 L61.0 24.2 L60.5 23.0 L60.0 23.4 L59.5 22.3 L59.0 22.5 L58.5 23.0 L58.0 22.5 L57.5 22.4 L57.0 24.3 L56.5 24.3 L56.0 23.8 L55.5 24.9 L55.0 26.3 L54.5 25.1 L54.0 24.2 L53.5 23.9 L53.0 23.9 L52.5 24.7 L52.0 25.1 L51.5 23.6 L51.0 23.0 L50.5 22.2 L50.0 23.2 L49.5 23.4 L49.0 23.3 L48.5 24.3 L48.0 24.8 L47.5 25.7 L47.0 25.3 L46.5 23.2 L46.0 23.0 L45.5 23.3 L45.0 23.0 L44.5 22.9 L44.0 22.6 L43.5 22.9 L43.0 22.8 L42.5 22.7 L42.0 23.1 L41.5 23.9 L41.0 23.5 L40.5 24.5 L40.0 25.4 L39.5 25.4 L39.0 23.3 L38.5 23.0 L38.0 23.5 L37.5 22.5 L37.0 22.0 L36.5 21.9 L36.0 21.9 L35.5 22.5 L35.0 24.7 L34.5 23.5 L34.0 25.9 L33.5 24.4 L33.0 24.2 L32.5 22.7 L32.0 23.0 L31.5 22.5 L31.0 22.7 L30.5 22.3 L30.0 22.5 L29.5 22.1 L29.0 23.6 L28.5 22.6 L28.0 22.8 L27.5 24.0 L27.0 23.1 L26.5 23.2 L26.0 22.0 L25.5 22.0 L25.0 22.3 L24.5 22.6 L24.0 22.7 L23.5 22.1 L23.0 22.2 L22.5 23.2 L22.0 23.0 L21.5 23.1 L21.0 22.5 L20.5 24.3 L20.0 23.1 L19.5 22.9 L19.0 23.2 L18.5 21.6 L18.0 22.3 L17.5 22.3 L17.0 22.6 L16.5 22.8 L16.0 22.4 L15.5 23.5 L15.0 24.6 L14.5 23.5 L14.0 23.3 L13.5 23.6 L13.0 23.3 L12.5 22.7 L12.0 23.3 L11.5 24.8 L11.0 24.0 L10.5 25.3 L10.0 24.2 L9.5 23.9 L9.0 23.1 L8.5 23.4 L8.0 21.8 L7.5 22.2 L7.0 22.2 L6.5 22.6 L6.0 22.1 L5.5 21.8 L5.0 22.3 L4.5 22.4 L4.0 22.6 L3.5 22.7 L3.0 23.3 L2.5 22.4 L2.0 22.6 L1.5 22.1 L1.0 24.8 L0.5 23.7 L0.0 22.1 Z" fill="#e8684e"/></svg>
<div class="a" style="left:259.5px;top:402.8px;width:43px;height:10px;background:#2a1210;"></div>
<div class="t" style="left:263.0px;top:404.75px;font-size:5.3px;line-height:6.89px;color:#e6e6e6;transform:scaleX(0.923);transform-origin:left;">Eventname.mp3</div>
<div class="a" style="left:499px;top:402.8px;width:43px;height:10px;background:#2a1210;"></div>
<div class="t" style="left:502.5px;top:404.75px;font-size:5.3px;line-height:6.89px;color:#e6e6e6;transform:scaleX(0.923);transform-origin:left;">Eventname.mp3</div>
<div class="a" style="left:477px;top:418.7px;width:19.5px;height:10px;background:#2a1210;"></div>
<div class="t" style="left:383.7px;width:200px;text-align:center;top:418.80px;font-size:8px;line-height:10.4px;color:#f0f0f0;letter-spacing:-0.4px;">fx</div>
<div class="a" style="left:490.8px;top:423.3px;width:1.1px;height:1.1px;background:#9c9c9c;"></div>
<div class="a" style="left:493.2px;top:423.3px;width:1.1px;height:1.1px;background:#9c9c9c;"></div>
<div class="a" style="left:495.6px;top:423.3px;width:1.1px;height:1.1px;background:#9c9c9c;"></div>
<div class="a" style="left:779px;top:418.7px;width:13px;height:10px;background:#2a1210;"></div>
<div class="t" style="left:685.7px;width:200px;text-align:center;top:418.80px;font-size:8px;line-height:10.4px;color:#f0f0f0;letter-spacing:-0.4px;">fx</div>
<div class="a" style="left:174px;top:429px;width:350px;height:27.7px;background:#5e3466;"></div>
<div class="a" style="left:258.5px;top:429px;width:92.5px;height:27.7px;background:#8a5a98;"></div>
<div class="a" style="left:174px;top:442.45000000000005px;width:350px;height:0.9px;background:rgba(0,0,0,0.35);"></div>
<svg class="a" style="left:174px;top:429px;" width="350" height="27.7" viewBox="0 0 350 27.7"><path d="M0.0 5.5 L0.5 5.7 L1.0 2.9 L1.5 4.1 L2.0 6.0 L2.5 5.7 L3.0 5.5 L3.5 5.6 L4.0 5.6 L4.5 5.5 L5.0 5.4 L5.5 5.6 L6.0 5.9 L6.5 6.2 L7.0 6.0 L7.5 5.7 L8.0 6.1 L8.5 5.3 L9.0 5.0 L9.5 5.3 L10.0 4.4 L10.5 4.3 L11.0 4.2 L11.5 4.1 L12.0 3.7 L12.5 3.8 L13.0 2.7 L13.5 3.4 L14.0 4.9 L14.5 5.3 L15.0 4.2 L15.5 5.0 L16.0 3.6 L16.5 3.8 L17.0 4.9 L17.5 4.7 L18.0 3.0 L18.5 4.8 L19.0 6.0 L19.5 6.1 L20.0 5.6 L20.5 5.2 L21.0 4.7 L21.5 4.6 L22.0 4.1 L22.5 3.3 L23.0 3.2 L23.5 5.0 L24.0 4.1 L24.5 5.4 L25.0 5.0 L25.5 5.3 L26.0 6.0 L26.5 5.2 L27.0 5.4 L27.5 5.3 L28.0 2.4 L28.5 4.7 L29.0 5.4 L29.5 5.9 L30.0 4.9 L30.5 5.0 L31.0 4.8 L31.5 4.5 L32.0 3.9 L32.5 4.5 L33.0 5.1 L33.5 4.7 L34.0 5.4 L34.5 3.8 L35.0 4.6 L35.5 5.0 L36.0 5.7 L36.5 5.8 L37.0 5.5 L37.5 5.6 L38.0 5.4 L38.5 5.1 L39.0 4.3 L39.5 3.9 L40.0 3.6 L40.5 3.5 L41.0 5.0 L41.5 4.9 L42.0 5.3 L42.5 3.8 L43.0 5.3 L43.5 5.6 L44.0 5.1 L44.5 5.4 L45.0 4.9 L45.5 5.1 L46.0 4.4 L46.5 3.2 L47.0 4.5 L47.5 5.5 L48.0 4.7 L48.5 4.5 L49.0 4.6 L49.5 2.5 L50.0 3.8 L50.5 3.4 L51.0 4.8 L51.5 4.5 L52.0 4.9 L52.5 5.7 L53.0 6.0 L53.5 5.5 L54.0 5.3 L54.5 5.6 L55.0 5.6 L55.5 4.5 L56.0 5.1 L56.5 4.6 L57.0 4.2 L57.5 3.5 L58.0 3.8 L58.5 3.9 L59.0 5.0 L59.5 5.3 L60.0 4.6 L60.5 4.8 L61.0 2.6 L61.5 4.7 L62.0 3.9 L62.5 4.5 L63.0 5.1 L63.5 5.4 L64.0 5.8 L64.5 6.0 L65.0 5.6 L65.5 5.7 L66.0 5.9 L66.5 5.4 L67.0 4.8 L67.5 5.6 L68.0 4.4 L68.5 4.6 L69.0 4.4 L69.5 2.7 L70.0 4.7 L70.5 3.7 L71.0 4.8 L71.5 4.7 L72.0 3.5 L72.5 3.7 L73.0 4.2 L73.5 4.6 L74.0 5.3 L74.5 5.4 L75.0 5.6 L75.5 5.8 L76.0 5.7 L76.5 6.2 L77.0 5.9 L77.5 5.6 L78.0 6.0 L78.5 5.8 L79.0 5.8 L79.5 5.3 L80.0 4.9 L80.5 4.7 L81.0 5.4 L81.5 5.8 L82.0 5.7 L82.5 5.8 L83.0 4.9 L83.5 5.8 L84.0 5.8 L84.5 3.7 L85.0 4.4 L85.5 4.2 L86.0 4.7 L86.5 2.9 L87.0 4.3 L87.5 5.0 L88.0 4.3 L88.5 4.4 L89.0 3.6 L89.5 3.9 L90.0 4.3 L90.5 3.4 L91.0 3.9 L91.5 5.1 L92.0 4.7 L92.5 4.6 L93.0 3.9 L93.5 4.5 L94.0 4.8 L94.5 4.2 L95.0 4.1 L95.5 2.6 L96.0 2.3 L96.5 3.4 L97.0 3.8 L97.5 4.2 L98.0 3.6 L98.5 4.6 L99.0 4.9 L99.5 4.0 L100.0 4.3 L100.5 5.0 L101.0 5.3 L101.5 5.1 L102.0 5.5 L102.5 5.1 L103.0 4.5 L103.5 5.2 L104.0 3.6 L104.5 4.3 L105.0 2.7 L105.5 1.4 L106.0 1.7 L106.5 2.9 L107.0 3.4 L107.5 4.5 L108.0 3.3 L108.5 2.9 L109.0 2.9 L109.5 1.9 L110.0 2.2 L110.5 3.1 L111.0 3.6 L111.5 3.5 L112.0 3.3 L112.5 5.1 L113.0 4.2 L113.5 4.2 L114.0 4.4 L114.5 4.9 L115.0 5.1 L115.5 5.1 L116.0 5.0 L116.5 5.1 L117.0 5.3 L117.5 5.4 L118.0 4.3 L118.5 2.7 L119.0 1.9 L119.5 4.1 L120.0 4.3 L120.5 4.7 L121.0 5.5 L121.5 5.2 L122.0 4.7 L122.5 5.7 L123.0 5.0 L123.5 5.2 L124.0 5.6 L124.5 4.2 L125.0 5.4 L125.5 4.9 L126.0 4.0 L126.5 3.4 L127.0 4.2 L127.5 3.4 L128.0 4.0 L128.5 4.8 L129.0 4.8 L129.5 4.8 L130.0 3.2 L130.5 4.9 L131.0 3.9 L131.5 3.4 L132.0 4.0 L132.5 5.0 L133.0 4.5 L133.5 4.2 L134.0 3.0 L134.5 3.4 L135.0 4.3 L135.5 4.6 L136.0 4.9 L136.5 4.8 L137.0 4.7 L137.5 4.7 L138.0 4.2 L138.5 3.4 L139.0 4.6 L139.5 5.4 L140.0 4.9 L140.5 5.7 L141.0 5.5 L141.5 5.7 L142.0 5.4 L142.5 4.7 L143.0 4.9 L143.5 4.9 L144.0 4.5 L144.5 5.1 L145.0 5.5 L145.5 4.0 L146.0 4.1 L146.5 3.3 L147.0 3.9 L147.5 2.2 L148.0 3.8 L148.5 2.6 L149.0 4.0 L149.5 4.2 L150.0 5.1 L150.5 5.4 L151.0 5.8 L151.5 5.2 L152.0 5.3 L152.5 5.2 L153.0 5.3 L153.5 5.4 L154.0 5.6 L154.5 5.6 L155.0 4.8 L155.5 4.5 L156.0 3.6 L156.5 3.2 L157.0 1.4 L157.5 3.8 L158.0 3.7 L158.5 4.1 L159.0 3.9 L159.5 3.7 L160.0 3.4 L160.5 4.1 L161.0 4.4 L161.5 4.3 L162.0 4.0 L162.5 3.8 L163.0 4.7 L163.5 4.7 L164.0 4.9 L164.5 4.9 L165.0 5.2 L165.5 4.6 L166.0 4.4 L166.5 4.8 L167.0 4.4 L167.5 5.4 L168.0 5.4 L168.5 4.3 L169.0 4.5 L169.5 4.6 L170.0 3.5 L170.5 4.0 L171.0 4.0 L171.5 4.4 L172.0 4.9 L172.5 5.3 L173.0 5.5 L173.5 5.5 L174.0 5.3 L174.5 5.2 L175.0 4.9 L175.5 4.1 L176.0 3.3 L176.5 4.8 L177.0 4.4 L177.5 5.2 L178.0 5.5 L178.5 5.9 L179.0 5.9 L179.5 5.7 L180.0 5.6 L180.5 5.7 L181.0 5.7 L181.5 5.2 L182.0 5.0 L182.5 4.4 L183.0 5.3 L183.5 4.3 L184.0 4.5 L184.5 5.2 L185.0 5.3 L185.5 5.3 L186.0 5.8 L186.5 6.0 L187.0 5.6 L187.5 5.2 L188.0 5.6 L188.5 5.3 L189.0 4.4 L189.5 4.9 L190.0 5.3 L190.5 4.6 L191.0 5.0 L191.5 4.7 L192.0 4.4 L192.5 4.3 L193.0 3.7 L193.5 4.4 L194.0 4.4 L194.5 5.2 L195.0 5.5 L195.5 5.8 L196.0 5.5 L196.5 5.4 L197.0 5.9 L197.5 5.8 L198.0 6.0 L198.5 6.1 L199.0 5.8 L199.5 5.9 L200.0 5.5 L200.5 5.7 L201.0 4.8 L201.5 3.9 L202.0 4.5 L202.5 4.0 L203.0 5.5 L203.5 4.0 L204.0 2.8 L204.5 3.0 L205.0 4.6 L205.5 4.5 L206.0 4.9 L206.5 5.7 L207.0 5.9 L207.5 5.6 L208.0 5.6 L208.5 5.6 L209.0 5.8 L209.5 5.7 L210.0 5.0 L210.5 5.4 L211.0 4.4 L211.5 3.5 L212.0 3.2 L212.5 2.9 L213.0 3.7 L213.5 4.5 L214.0 4.4 L214.5 5.0 L215.0 3.9 L215.5 5.5 L216.0 5.2 L216.5 5.4 L217.0 5.5 L217.5 5.7 L218.0 6.0 L218.5 5.8 L219.0 5.4 L219.5 4.4 L220.0 3.9 L220.5 3.9 L221.0 4.1 L221.5 4.0 L222.0 4.2 L222.5 5.1 L223.0 5.4 L223.5 3.5 L224.0 2.6 L224.5 4.2 L225.0 4.7 L225.5 5.4 L226.0 6.0 L226.5 5.2 L227.0 4.6 L227.5 4.5 L228.0 3.4 L228.5 3.6 L229.0 4.7 L229.5 5.4 L230.0 5.5 L230.5 5.7 L231.0 5.2 L231.5 4.3 L232.0 4.0 L232.5 4.2 L233.0 5.1 L233.5 5.0 L234.0 5.8 L234.5 6.1 L235.0 6.0 L235.5 5.4 L236.0 5.4 L236.5 5.0 L237.0 4.4 L237.5 4.3 L238.0 4.8 L238.5 4.0 L239.0 4.1 L239.5 2.8 L240.0 3.8 L240.5 4.4 L241.0 4.9 L241.5 5.1 L242.0 5.6 L242.5 5.7 L243.0 3.4 L243.5 5.0 L244.0 6.1 L244.5 5.5 L245.0 5.7 L245.5 5.0 L246.0 4.4 L246.5 3.9 L247.0 3.5 L247.5 5.9 L248.0 5.5 L248.5 5.4 L249.0 6.0 L249.5 5.8 L250.0 5.3 L250.5 5.8 L251.0 6.0 L251.5 5.3 L252.0 6.1 L252.5 5.5 L253.0 4.2 L253.5 5.7 L254.0 5.8 L254.5 5.9 L255.0 5.9 L255.5 6.0 L256.0 4.2 L256.5 4.5 L257.0 4.8 L257.5 5.4 L258.0 5.4 L258.5 6.1 L259.0 6.1 L259.5 5.5 L260.0 5.1 L260.5 4.6 L261.0 5.0 L261.5 3.1 L262.0 1.6 L262.5 2.5 L263.0 3.5 L263.5 4.5 L264.0 4.9 L264.5 4.5 L265.0 5.0 L265.5 5.3 L266.0 5.7 L266.5 5.7 L267.0 5.1 L267.5 4.8 L268.0 4.1 L268.5 2.7 L269.0 3.6 L269.5 4.9 L270.0 5.1 L270.5 4.5 L271.0 5.1 L271.5 4.3 L272.0 3.3 L272.5 4.6 L273.0 4.7 L273.5 5.6 L274.0 3.3 L274.5 3.3 L275.0 2.9 L275.5 1.4 L276.0 3.3 L276.5 4.5 L277.0 3.2 L277.5 4.3 L278.0 3.0 L278.5 4.0 L279.0 4.4 L279.5 4.8 L280.0 4.7 L280.5 5.7 L281.0 6.0 L281.5 5.3 L282.0 5.4 L282.5 4.7 L283.0 4.3 L283.5 4.2 L284.0 4.4 L284.5 4.7 L285.0 5.0 L285.5 6.0 L286.0 6.1 L286.5 5.3 L287.0 6.1 L287.5 6.0 L288.0 4.9 L288.5 4.4 L289.0 3.7 L289.5 4.2 L290.0 4.2 L290.5 3.0 L291.0 4.3 L291.5 3.8 L292.0 4.9 L292.5 4.4 L293.0 3.8 L293.5 5.8 L294.0 5.9 L294.5 5.5 L295.0 5.7 L295.5 5.8 L296.0 5.8 L296.5 5.8 L297.0 4.4 L297.5 4.8 L298.0 3.6 L298.5 3.1 L299.0 3.4 L299.5 3.7 L300.0 3.4 L300.5 5.1 L301.0 5.4 L301.5 5.7 L302.0 5.5 L302.5 4.6 L303.0 4.4 L303.5 4.6 L304.0 4.9 L304.5 4.9 L305.0 4.3 L305.5 4.0 L306.0 4.3 L306.5 2.1 L307.0 2.2 L307.5 4.5 L308.0 4.0 L308.5 5.3 L309.0 4.6 L309.5 5.5 L310.0 5.7 L310.5 6.2 L311.0 5.1 L311.5 4.2 L312.0 3.8 L312.5 2.7 L313.0 4.4 L313.5 3.9 L314.0 4.3 L314.5 5.3 L315.0 6.0 L315.5 5.5 L316.0 4.5 L316.5 5.5 L317.0 5.6 L317.5 5.6 L318.0 5.1 L318.5 5.0 L319.0 4.7 L319.5 4.1 L320.0 5.0 L320.5 5.1 L321.0 6.3 L321.5 5.3 L322.0 5.8 L322.5 6.2 L323.0 5.5 L323.5 4.4 L324.0 4.3 L324.5 5.1 L325.0 5.3 L325.5 5.7 L326.0 5.1 L326.5 5.3 L327.0 4.7 L327.5 5.2 L328.0 5.3 L328.5 5.5 L329.0 5.6 L329.5 5.6 L330.0 5.4 L330.5 6.0 L331.0 6.2 L331.5 5.6 L332.0 5.4 L332.5 5.7 L333.0 4.6 L333.5 4.8 L334.0 4.9 L334.5 5.8 L335.0 5.5 L335.5 5.9 L336.0 5.6 L336.5 5.7 L337.0 5.9 L337.5 5.4 L338.0 6.1 L338.5 5.7 L339.0 5.5 L339.5 5.5 L340.0 5.1 L340.5 3.4 L341.0 3.4 L341.5 3.8 L342.0 4.2 L342.5 5.1 L343.0 5.7 L343.5 5.4 L344.0 4.3 L344.5 2.8 L345.0 3.3 L345.5 4.5 L346.0 5.2 L346.5 5.1 L347.0 4.8 L347.5 4.6 L348.0 5.5 L348.5 5.5 L349.0 5.4 L349.5 5.7 L350.0 5.2 L350.0 9.1 L349.5 8.6 L349.0 8.9 L348.5 9.0 L348.0 8.8 L347.5 9.7 L347.0 9.8 L346.5 9.3 L346.0 9.2 L345.5 10.1 L345.0 11.5 L344.5 11.6 L344.0 10.0 L343.5 9.3 L343.0 8.8 L342.5 9.6 L342.0 10.2 L341.5 10.5 L341.0 10.7 L340.5 11.0 L340.0 9.4 L339.5 9.0 L339.0 8.7 L338.5 8.7 L338.0 8.3 L337.5 8.9 L337.0 8.5 L336.5 8.8 L336.0 8.7 L335.5 8.7 L335.0 9.1 L334.5 8.7 L334.0 9.5 L333.5 9.6 L333.0 9.9 L332.5 8.9 L332.0 8.9 L331.5 9.0 L331.0 8.2 L330.5 8.4 L330.0 8.9 L329.5 9.0 L329.0 8.8 L328.5 8.9 L328.0 9.2 L327.5 9.2 L327.0 9.8 L326.5 9.3 L326.0 9.2 L325.5 8.7 L325.0 9.1 L324.5 9.5 L324.0 10.2 L323.5 9.8 L323.0 8.8 L322.5 8.3 L322.0 8.7 L321.5 9.0 L321.0 8.1 L320.5 9.3 L320.0 9.2 L319.5 10.6 L319.0 9.6 L318.5 9.6 L318.0 9.4 L317.5 8.8 L317.0 8.8 L316.5 9.1 L316.0 10.0 L315.5 9.0 L315.0 8.4 L314.5 9.3 L314.0 10.4 L313.5 10.8 L313.0 9.9 L312.5 12.0 L312.0 10.6 L311.5 10.5 L311.0 9.5 L310.5 8.2 L310.0 8.9 L309.5 8.8 L309.0 10.1 L308.5 8.9 L308.0 10.4 L307.5 10.0 L307.0 12.7 L306.5 12.0 L306.0 10.3 L305.5 10.4 L305.0 10.1 L304.5 9.4 L304.0 9.5 L303.5 10.0 L303.0 10.3 L302.5 9.9 L302.0 8.9 L301.5 8.6 L301.0 9.1 L300.5 9.3 L300.0 11.0 L299.5 11.0 L299.0 11.4 L298.5 11.1 L298.0 10.9 L297.5 9.4 L297.0 10.0 L296.5 8.6 L296.0 8.6 L295.5 8.5 L295.0 8.8 L294.5 9.0 L294.0 8.5 L293.5 8.6 L293.0 10.5 L292.5 9.9 L292.0 9.7 L291.5 10.5 L291.0 10.1 L290.5 11.9 L290.0 10.1 L289.5 10.2 L289.0 11.1 L288.5 10.0 L288.0 9.4 L287.5 8.4 L287.0 8.4 L286.5 9.0 L286.0 8.5 L285.5 8.6 L285.0 9.3 L284.5 9.9 L284.0 10.0 L283.5 10.6 L283.0 9.9 L282.5 10.0 L282.0 8.9 L281.5 9.3 L281.0 8.5 L280.5 8.8 L280.0 9.7 L279.5 9.6 L279.0 10.2 L278.5 10.2 L278.0 11.5 L277.5 9.9 L277.0 11.1 L276.5 9.8 L276.0 11.0 L275.5 13.0 L275.0 11.8 L274.5 11.2 L274.0 11.1 L273.5 8.9 L273.0 9.9 L272.5 9.9 L272.0 10.9 L271.5 10.0 L271.0 9.2 L270.5 9.8 L270.0 9.2 L269.5 9.3 L269.0 10.7 L268.5 12.1 L268.0 10.4 L267.5 9.6 L267.0 9.5 L266.5 8.6 L266.0 8.8 L265.5 9.1 L265.0 9.2 L264.5 10.1 L264.0 9.5 L263.5 10.2 L263.0 11.1 L262.5 11.6 L262.0 12.7 L261.5 11.2 L261.0 9.6 L260.5 9.6 L260.0 9.3 L259.5 8.8 L259.0 8.3 L258.5 8.5 L258.0 9.0 L257.5 9.0 L257.0 9.9 L256.5 10.2 L256.0 10.5 L255.5 8.3 L255.0 8.5 L254.5 8.5 L254.0 8.6 L253.5 8.7 L253.0 10.1 L252.5 8.9 L252.0 8.3 L251.5 9.1 L251.0 8.3 L250.5 8.7 L250.0 9.2 L249.5 8.7 L249.0 8.4 L248.5 9.0 L248.0 8.8 L247.5 8.6 L247.0 11.1 L246.5 10.3 L246.0 9.8 L245.5 9.3 L245.0 8.8 L244.5 9.0 L244.0 8.3 L243.5 9.2 L243.0 11.2 L242.5 8.7 L242.0 8.7 L241.5 9.2 L241.0 9.5 L240.5 9.9 L240.0 10.6 L239.5 11.4 L239.0 10.5 L238.5 10.4 L238.0 9.7 L237.5 10.2 L237.0 10.2 L236.5 9.4 L236.0 9.0 L235.5 9.1 L235.0 8.6 L234.5 8.3 L234.0 8.6 L233.5 9.6 L233.0 9.1 L232.5 10.1 L232.0 10.5 L231.5 10.3 L231.0 9.1 L230.5 8.7 L230.0 9.0 L229.5 9.2 L229.0 9.8 L228.5 11.1 L228.0 11.3 L227.5 10.0 L227.0 10.0 L226.5 9.4 L226.0 8.5 L225.5 9.0 L225.0 9.7 L224.5 10.1 L224.0 11.7 L223.5 10.7 L223.0 8.9 L222.5 9.5 L222.0 10.2 L221.5 10.3 L221.0 10.6 L220.5 10.7 L220.0 10.5 L219.5 10.3 L219.0 9.1 L218.5 8.8 L218.0 8.4 L217.5 8.9 L217.0 9.0 L216.5 9.2 L216.0 9.4 L215.5 8.9 L215.0 10.3 L214.5 9.7 L214.0 10.1 L213.5 9.8 L213.0 10.9 L212.5 11.3 L212.0 11.2 L211.5 10.8 L211.0 10.3 L210.5 8.9 L210.0 9.6 L209.5 8.7 L209.0 8.8 L208.5 8.7 L208.0 9.0 L207.5 9.0 L207.0 8.7 L206.5 8.8 L206.0 9.5 L205.5 10.2 L205.0 9.9 L204.5 11.8 L204.0 11.6 L203.5 10.3 L203.0 9.0 L202.5 10.7 L202.0 9.8 L201.5 10.8 L201.0 9.6 L200.5 8.9 L200.0 9.0 L199.5 8.5 L199.0 8.6 L198.5 8.4 L198.0 8.5 L197.5 8.6 L197.0 8.6 L196.5 8.9 L196.0 8.8 L195.5 8.8 L195.0 8.9 L194.5 9.3 L194.0 9.9 L193.5 9.8 L193.0 10.9 L192.5 10.0 L192.0 9.9 L191.5 9.8 L191.0 9.3 L190.5 9.9 L190.0 9.3 L189.5 9.4 L189.0 10.1 L188.5 9.3 L188.0 8.9 L187.5 9.1 L187.0 9.0 L186.5 8.4 L186.0 8.7 L185.5 9.1 L185.0 9.3 L184.5 9.2 L184.0 9.9 L183.5 10.3 L183.0 9.3 L182.5 9.8 L182.0 9.4 L181.5 9.4 L181.0 8.8 L180.5 8.7 L180.0 8.8 L179.5 8.9 L179.0 8.5 L178.5 8.5 L178.0 8.9 L177.5 9.2 L177.0 10.2 L176.5 9.8 L176.0 11.4 L175.5 10.3 L175.0 9.4 L174.5 9.1 L174.0 9.0 L173.5 9.2 L173.0 9.0 L172.5 9.3 L172.0 9.6 L171.5 10.2 L171.0 10.5 L170.5 10.7 L170.0 11.0 L169.5 9.7 L169.0 10.0 L168.5 10.2 L168.0 9.0 L167.5 8.9 L167.0 9.9 L166.5 9.8 L166.0 10.2 L165.5 10.1 L165.0 9.0 L164.5 9.8 L164.0 9.3 L163.5 9.6 L163.0 9.5 L162.5 10.7 L162.0 10.1 L161.5 10.2 L161.0 9.8 L160.5 10.2 L160.0 10.8 L159.5 10.7 L159.0 10.5 L158.5 10.6 L158.0 10.9 L157.5 10.5 L157.0 13.3 L156.5 11.2 L156.0 10.6 L155.5 9.9 L155.0 9.6 L154.5 9.0 L154.0 8.7 L153.5 9.0 L153.0 9.0 L152.5 9.3 L152.0 9.1 L151.5 9.4 L151.0 8.7 L150.5 9.2 L150.0 9.5 L149.5 10.1 L149.0 10.7 L148.5 11.9 L148.0 10.5 L147.5 12.4 L147.0 10.3 L146.5 11.1 L146.0 10.6 L145.5 10.8 L145.0 8.8 L144.5 9.5 L144.0 10.1 L143.5 9.6 L143.0 9.8 L142.5 9.6 L142.0 9.2 L141.5 8.6 L141.0 8.8 L140.5 8.8 L140.0 9.5 L139.5 9.2 L139.0 9.7 L138.5 11.3 L138.0 10.5 L137.5 9.6 L137.0 9.8 L136.5 9.5 L136.0 9.6 L135.5 10.0 L135.0 10.1 L134.5 11.2 L134.0 11.8 L133.5 10.4 L133.0 9.8 L132.5 9.4 L132.0 10.2 L131.5 10.8 L131.0 10.4 L130.5 9.8 L130.0 11.3 L129.5 9.8 L129.0 9.8 L128.5 9.6 L128.0 10.3 L127.5 11.3 L127.0 10.3 L126.5 10.8 L126.0 10.5 L125.5 9.7 L125.0 8.9 L124.5 9.9 L124.0 9.0 L123.5 9.2 L123.0 9.3 L122.5 8.9 L122.0 9.5 L121.5 9.2 L121.0 8.9 L120.5 9.6 L120.0 9.9 L119.5 10.5 L119.0 12.4 L118.5 11.4 L118.0 10.4 L117.5 9.2 L117.0 9.0 L116.5 9.2 L116.0 9.5 L115.5 9.3 L115.0 9.4 L114.5 9.5 L114.0 9.9 L113.5 10.2 L113.0 10.1 L112.5 9.4 L112.0 11.4 L111.5 11.3 L111.0 10.7 L110.5 11.2 L110.0 11.9 L109.5 12.6 L109.0 11.7 L108.5 11.5 L108.0 11.2 L107.5 9.9 L107.0 10.7 L106.5 11.3 L106.0 13.1 L105.5 13.4 L105.0 11.7 L104.5 10.4 L104.0 11.0 L103.5 9.5 L103.0 10.0 L102.5 9.3 L102.0 8.8 L101.5 9.5 L101.0 9.1 L100.5 9.5 L100.0 10.4 L99.5 10.5 L99.0 9.5 L98.5 9.9 L98.0 10.5 L97.5 10.0 L97.0 10.5 L96.5 11.4 L96.0 12.4 L95.5 11.5 L95.0 10.6 L94.5 10.4 L94.0 9.7 L93.5 10.0 L93.0 10.3 L92.5 10.0 L92.0 9.6 L91.5 9.2 L91.0 10.4 L90.5 11.3 L90.0 10.0 L89.5 10.5 L89.0 10.9 L88.5 10.0 L88.0 10.3 L87.5 9.3 L87.0 10.3 L86.5 11.2 L86.0 9.9 L85.5 10.3 L85.0 9.9 L84.5 10.5 L84.0 8.7 L83.5 8.7 L83.0 9.5 L82.5 8.5 L82.0 8.6 L81.5 8.7 L81.0 9.2 L80.5 9.6 L80.0 9.5 L79.5 9.0 L79.0 8.6 L78.5 8.5 L78.0 8.4 L77.5 8.7 L77.0 8.5 L76.5 8.1 L76.0 8.8 L75.5 8.6 L75.0 8.8 L74.5 9.2 L74.0 9.2 L73.5 9.7 L73.0 10.5 L72.5 10.6 L72.0 10.6 L71.5 9.6 L71.0 9.6 L70.5 10.7 L70.0 9.6 L69.5 11.8 L69.0 10.1 L68.5 10.1 L68.0 9.9 L67.5 8.8 L67.0 9.6 L66.5 9.0 L66.0 8.6 L65.5 8.8 L65.0 8.8 L64.5 8.3 L64.0 8.7 L63.5 9.2 L63.0 9.5 L62.5 9.7 L62.0 10.3 L61.5 9.6 L61.0 11.8 L60.5 9.8 L60.0 10.1 L59.5 9.2 L59.0 9.6 L58.5 10.4 L58.0 10.8 L57.5 10.7 L57.0 10.1 L56.5 9.6 L56.0 9.5 L55.5 9.8 L55.0 8.8 L54.5 8.7 L54.0 8.9 L53.5 9.0 L53.0 8.4 L52.5 8.8 L52.0 9.6 L51.5 10.0 L51.0 9.7 L50.5 10.8 L50.0 10.4 L49.5 11.5 L49.0 9.8 L48.5 10.2 L48.0 9.8 L47.5 8.9 L47.0 10.1 L46.5 11.6 L46.0 10.1 L45.5 9.2 L45.0 9.8 L44.5 9.0 L44.0 9.3 L43.5 8.9 L43.0 9.3 L42.5 10.9 L42.0 9.1 L41.5 9.4 L41.0 9.3 L40.5 10.9 L40.0 10.7 L39.5 10.7 L39.0 10.2 L38.5 9.3 L38.0 8.9 L37.5 8.8 L37.0 8.9 L36.5 8.7 L36.0 8.6 L35.5 9.5 L35.0 9.9 L34.5 10.9 L34.0 9.0 L33.5 9.9 L33.0 9.3 L32.5 9.7 L32.0 10.5 L31.5 10.1 L31.0 9.7 L30.5 9.2 L30.0 9.5 L29.5 8.5 L29.0 9.0 L28.5 9.9 L28.0 11.8 L27.5 9.2 L27.0 9.3 L26.5 9.1 L26.0 8.5 L25.5 9.1 L25.0 9.7 L24.5 9.2 L24.0 10.6 L23.5 9.5 L23.0 10.9 L22.5 11.4 L22.0 10.2 L21.5 10.0 L21.0 9.9 L20.5 9.2 L20.0 8.9 L19.5 8.3 L19.0 8.5 L18.5 9.6 L18.0 11.8 L17.5 9.8 L17.0 9.5 L16.5 10.4 L16.0 10.9 L15.5 9.6 L15.0 10.1 L14.5 9.1 L14.0 9.6 L13.5 10.7 L13.0 11.6 L12.5 10.8 L12.0 10.9 L11.5 10.5 L11.0 10.3 L10.5 10.1 L10.0 9.8 L9.5 9.2 L9.0 9.4 L8.5 9.3 L8.0 8.4 L7.5 8.9 L7.0 8.5 L6.5 8.2 L6.0 8.6 L5.5 8.8 L5.0 9.1 L4.5 8.9 L4.0 8.7 L3.5 8.7 L3.0 8.8 L2.5 8.6 L2.0 8.4 L1.5 10.5 L1.0 11.2 L0.5 8.9 L0.0 8.9 Z" fill="#d07ae0"/><path d="M0.0 20.2 L0.5 19.9 L1.0 18.7 L1.5 18.2 L2.0 19.0 L2.5 18.2 L3.0 16.1 L3.5 16.2 L4.0 17.3 L4.5 15.3 L5.0 18.0 L5.5 18.4 L6.0 19.6 L6.5 19.3 L7.0 18.2 L7.5 18.8 L8.0 18.3 L8.5 19.1 L9.0 19.6 L9.5 19.5 L10.0 19.4 L10.5 18.9 L11.0 17.9 L11.5 18.4 L12.0 19.5 L12.5 19.1 L13.0 19.5 L13.5 18.5 L14.0 19.0 L14.5 15.3 L15.0 16.6 L15.5 16.5 L16.0 18.2 L16.5 17.4 L17.0 18.5 L17.5 18.2 L18.0 18.9 L18.5 18.5 L19.0 18.6 L19.5 19.5 L20.0 19.3 L20.5 19.8 L21.0 19.9 L21.5 19.9 L22.0 20.1 L22.5 19.3 L23.0 20.0 L23.5 19.8 L24.0 19.6 L24.5 19.5 L25.0 18.8 L25.5 18.6 L26.0 19.1 L26.5 19.1 L27.0 18.8 L27.5 19.3 L28.0 19.1 L28.5 19.7 L29.0 19.3 L29.5 20.1 L30.0 20.1 L30.5 19.1 L31.0 19.8 L31.5 18.1 L32.0 19.6 L32.5 18.3 L33.0 18.8 L33.5 18.8 L34.0 19.3 L34.5 19.4 L35.0 19.9 L35.5 19.6 L36.0 20.0 L36.5 19.8 L37.0 19.3 L37.5 19.6 L38.0 19.1 L38.5 18.8 L39.0 19.3 L39.5 17.7 L40.0 18.1 L40.5 17.8 L41.0 18.1 L41.5 19.1 L42.0 19.1 L42.5 18.2 L43.0 17.6 L43.5 18.7 L44.0 19.2 L44.5 19.7 L45.0 19.8 L45.5 20.1 L46.0 19.8 L46.5 19.8 L47.0 19.5 L47.5 19.8 L48.0 19.1 L48.5 19.7 L49.0 19.2 L49.5 19.6 L50.0 19.5 L50.5 19.4 L51.0 18.5 L51.5 18.1 L52.0 19.1 L52.5 17.7 L53.0 18.4 L53.5 18.7 L54.0 19.2 L54.5 18.8 L55.0 19.4 L55.5 19.5 L56.0 19.3 L56.5 20.0 L57.0 19.2 L57.5 19.2 L58.0 18.7 L58.5 18.7 L59.0 18.4 L59.5 19.0 L60.0 18.7 L60.5 17.6 L61.0 18.7 L61.5 19.1 L62.0 18.5 L62.5 18.9 L63.0 19.3 L63.5 19.3 L64.0 19.0 L64.5 18.2 L65.0 17.4 L65.5 17.7 L66.0 18.5 L66.5 18.9 L67.0 19.6 L67.5 19.9 L68.0 19.6 L68.5 20.1 L69.0 19.4 L69.5 19.8 L70.0 19.2 L70.5 19.3 L71.0 19.4 L71.5 19.1 L72.0 19.8 L72.5 19.4 L73.0 18.3 L73.5 17.7 L74.0 17.4 L74.5 18.4 L75.0 18.7 L75.5 18.0 L76.0 18.0 L76.5 18.7 L77.0 19.7 L77.5 19.2 L78.0 19.0 L78.5 18.6 L79.0 18.7 L79.5 17.8 L80.0 18.1 L80.5 18.2 L81.0 18.6 L81.5 17.9 L82.0 15.9 L82.5 17.1 L83.0 18.4 L83.5 18.4 L84.0 18.8 L84.5 19.0 L85.0 19.4 L85.5 18.7 L86.0 19.3 L86.5 18.7 L87.0 17.3 L87.5 17.3 L88.0 17.1 L88.5 15.3 L89.0 15.3 L89.5 16.5 L90.0 17.5 L90.5 18.3 L91.0 19.0 L91.5 18.6 L92.0 18.7 L92.5 17.3 L93.0 16.6 L93.5 17.2 L94.0 18.2 L94.5 18.7 L95.0 16.9 L95.5 15.3 L96.0 16.2 L96.5 18.5 L97.0 18.5 L97.5 19.3 L98.0 18.4 L98.5 19.0 L99.0 18.9 L99.5 19.1 L100.0 16.5 L100.5 17.6 L101.0 15.3 L101.5 15.9 L102.0 18.2 L102.5 18.6 L103.0 18.8 L103.5 18.3 L104.0 19.4 L104.5 19.0 L105.0 18.9 L105.5 18.8 L106.0 18.8 L106.5 16.4 L107.0 17.7 L107.5 18.8 L108.0 19.3 L108.5 19.5 L109.0 18.7 L109.5 19.1 L110.0 17.4 L110.5 18.7 L111.0 19.2 L111.5 17.8 L112.0 17.6 L112.5 16.6 L113.0 17.3 L113.5 18.1 L114.0 18.6 L114.5 19.3 L115.0 18.8 L115.5 19.2 L116.0 19.3 L116.5 19.3 L117.0 18.5 L117.5 19.2 L118.0 18.4 L118.5 18.4 L119.0 18.2 L119.5 16.9 L120.0 17.4 L120.5 17.3 L121.0 16.5 L121.5 15.4 L122.0 16.8 L122.5 18.1 L123.0 19.0 L123.5 18.4 L124.0 18.4 L124.5 17.6 L125.0 18.4 L125.5 17.7 L126.0 17.0 L126.5 17.4 L127.0 17.8 L127.5 18.3 L128.0 16.5 L128.5 15.9 L129.0 17.8 L129.5 16.9 L130.0 16.9 L130.5 18.0 L131.0 18.9 L131.5 19.1 L132.0 19.2 L132.5 19.0 L133.0 19.2 L133.5 18.4 L134.0 18.4 L134.5 16.4 L135.0 15.6 L135.5 17.0 L136.0 16.5 L136.5 17.0 L137.0 18.4 L137.5 18.8 L138.0 19.3 L138.5 18.4 L139.0 19.1 L139.5 18.9 L140.0 15.9 L140.5 15.8 L141.0 16.8 L141.5 15.8 L142.0 18.2 L142.5 18.1 L143.0 18.7 L143.5 19.1 L144.0 19.1 L144.5 17.7 L145.0 17.4 L145.5 18.0 L146.0 15.9 L146.5 15.3 L147.0 17.8 L147.5 16.6 L148.0 17.6 L148.5 18.3 L149.0 18.6 L149.5 19.4 L150.0 18.7 L150.5 18.7 L151.0 18.2 L151.5 17.2 L152.0 17.4 L152.5 18.6 L153.0 19.2 L153.5 19.4 L154.0 19.2 L154.5 18.4 L155.0 19.0 L155.5 18.8 L156.0 18.3 L156.5 17.4 L157.0 17.2 L157.5 16.2 L158.0 16.5 L158.5 16.5 L159.0 18.4 L159.5 17.8 L160.0 18.7 L160.5 18.8 L161.0 18.9 L161.5 19.1 L162.0 19.0 L162.5 19.0 L163.0 18.6 L163.5 17.4 L164.0 17.8 L164.5 18.0 L165.0 18.8 L165.5 18.7 L166.0 19.0 L166.5 19.4 L167.0 18.7 L167.5 18.5 L168.0 19.4 L168.5 19.2 L169.0 19.0 L169.5 19.6 L170.0 18.2 L170.5 17.8 L171.0 16.2 L171.5 17.9 L172.0 19.0 L172.5 19.1 L173.0 19.4 L173.5 18.8 L174.0 18.8 L174.5 18.8 L175.0 18.9 L175.5 18.6 L176.0 18.9 L176.5 17.0 L177.0 16.9 L177.5 18.4 L178.0 17.7 L178.5 17.7 L179.0 18.6 L179.5 18.4 L180.0 17.5 L180.5 18.2 L181.0 18.7 L181.5 19.7 L182.0 18.6 L182.5 19.9 L183.0 19.7 L183.5 20.1 L184.0 20.0 L184.5 19.5 L185.0 19.0 L185.5 18.7 L186.0 17.9 L186.5 15.3 L187.0 17.3 L187.5 15.6 L188.0 17.5 L188.5 17.4 L189.0 19.1 L189.5 19.3 L190.0 19.6 L190.5 18.9 L191.0 19.0 L191.5 17.8 L192.0 18.8 L192.5 19.4 L193.0 19.0 L193.5 19.2 L194.0 19.8 L194.5 19.2 L195.0 19.3 L195.5 19.0 L196.0 18.8 L196.5 18.6 L197.0 16.5 L197.5 17.5 L198.0 16.5 L198.5 17.8 L199.0 19.4 L199.5 18.8 L200.0 19.7 L200.5 19.7 L201.0 19.3 L201.5 19.2 L202.0 19.9 L202.5 19.5 L203.0 19.5 L203.5 19.7 L204.0 19.2 L204.5 18.9 L205.0 19.6 L205.5 18.6 L206.0 18.3 L206.5 17.7 L207.0 18.9 L207.5 16.7 L208.0 18.4 L208.5 18.6 L209.0 19.6 L209.5 19.2 L210.0 19.6 L210.5 18.8 L211.0 18.9 L211.5 18.0 L212.0 16.9 L212.5 17.6 L213.0 18.4 L213.5 19.4 L214.0 19.2 L214.5 19.8 L215.0 19.6 L215.5 20.1 L216.0 20.0 L216.5 19.7 L217.0 19.2 L217.5 18.0 L218.0 18.1 L218.5 18.9 L219.0 19.3 L219.5 19.6 L220.0 19.5 L220.5 19.6 L221.0 19.9 L221.5 19.8 L222.0 19.3 L222.5 19.4 L223.0 19.6 L223.5 19.9 L224.0 18.7 L224.5 17.4 L225.0 19.5 L225.5 19.5 L226.0 19.4 L226.5 19.3 L227.0 19.6 L227.5 19.5 L228.0 19.7 L228.5 20.1 L229.0 20.0 L229.5 19.2 L230.0 19.2 L230.5 19.6 L231.0 19.3 L231.5 18.9 L232.0 19.8 L232.5 19.7 L233.0 18.8 L233.5 18.3 L234.0 18.6 L234.5 18.6 L235.0 18.3 L235.5 18.3 L236.0 18.1 L236.5 19.2 L237.0 19.3 L237.5 19.4 L238.0 19.5 L238.5 19.6 L239.0 19.7 L239.5 19.3 L240.0 19.0 L240.5 18.1 L241.0 18.5 L241.5 17.8 L242.0 17.3 L242.5 18.5 L243.0 19.0 L243.5 18.6 L244.0 18.9 L244.5 18.2 L245.0 17.0 L245.5 16.2 L246.0 18.8 L246.5 18.7 L247.0 19.5 L247.5 18.8 L248.0 18.4 L248.5 17.4 L249.0 17.1 L249.5 17.6 L250.0 16.8 L250.5 15.3 L251.0 18.9 L251.5 19.2 L252.0 19.7 L252.5 18.9 L253.0 19.7 L253.5 19.2 L254.0 19.9 L254.5 19.6 L255.0 19.6 L255.5 19.1 L256.0 18.7 L256.5 18.3 L257.0 18.7 L257.5 18.4 L258.0 16.8 L258.5 17.8 L259.0 18.0 L259.5 19.3 L260.0 19.1 L260.5 19.4 L261.0 19.3 L261.5 19.9 L262.0 19.4 L262.5 19.9 L263.0 19.5 L263.5 19.4 L264.0 18.6 L264.5 17.9 L265.0 17.9 L265.5 17.3 L266.0 17.8 L266.5 18.6 L267.0 19.4 L267.5 18.8 L268.0 18.5 L268.5 18.4 L269.0 18.5 L269.5 19.3 L270.0 20.0 L270.5 20.0 L271.0 19.1 L271.5 19.4 L272.0 19.4 L272.5 19.4 L273.0 16.4 L273.5 17.1 L274.0 17.0 L274.5 18.6 L275.0 19.0 L275.5 19.2 L276.0 18.0 L276.5 18.2 L277.0 18.5 L277.5 18.7 L278.0 19.2 L278.5 19.4 L279.0 19.4 L279.5 19.4 L280.0 20.2 L280.5 19.8 L281.0 19.5 L281.5 19.6 L282.0 20.0 L282.5 19.4 L283.0 18.8 L283.5 19.0 L284.0 17.9 L284.5 18.3 L285.0 16.5 L285.5 16.4 L286.0 17.1 L286.5 18.3 L287.0 18.9 L287.5 19.4 L288.0 19.5 L288.5 19.3 L289.0 19.0 L289.5 17.5 L290.0 18.3 L290.5 17.9 L291.0 18.4 L291.5 19.8 L292.0 19.5 L292.5 19.6 L293.0 19.3 L293.5 18.6 L294.0 18.0 L294.5 18.0 L295.0 18.3 L295.5 18.6 L296.0 17.9 L296.5 18.3 L297.0 18.8 L297.5 19.2 L298.0 19.5 L298.5 19.3 L299.0 19.5 L299.5 19.4 L300.0 19.0 L300.5 18.6 L301.0 17.8 L301.5 17.7 L302.0 18.1 L302.5 17.9 L303.0 17.5 L303.5 19.0 L304.0 19.1 L304.5 19.5 L305.0 19.3 L305.5 19.8 L306.0 19.2 L306.5 20.0 L307.0 19.5 L307.5 19.6 L308.0 20.2 L308.5 19.3 L309.0 19.5 L309.5 19.4 L310.0 19.6 L310.5 18.9 L311.0 19.1 L311.5 18.1 L312.0 17.3 L312.5 16.7 L313.0 17.7 L313.5 18.5 L314.0 18.0 L314.5 18.2 L315.0 18.8 L315.5 19.7 L316.0 19.9 L316.5 19.2 L317.0 19.8 L317.5 19.8 L318.0 19.0 L318.5 17.7 L319.0 19.6 L319.5 19.5 L320.0 20.0 L320.5 19.4 L321.0 19.3 L321.5 18.8 L322.0 19.1 L322.5 18.8 L323.0 19.4 L323.5 19.4 L324.0 19.8 L324.5 19.9 L325.0 19.8 L325.5 19.8 L326.0 19.1 L326.5 19.6 L327.0 19.2 L327.5 19.3 L328.0 18.2 L328.5 18.2 L329.0 18.6 L329.5 19.0 L330.0 18.4 L330.5 17.8 L331.0 16.2 L331.5 16.6 L332.0 18.2 L332.5 18.2 L333.0 19.0 L333.5 19.8 L334.0 19.5 L334.5 19.0 L335.0 19.6 L335.5 19.3 L336.0 19.1 L336.5 19.2 L337.0 18.7 L337.5 17.7 L338.0 17.3 L338.5 18.0 L339.0 18.2 L339.5 17.1 L340.0 19.2 L340.5 18.8 L341.0 18.2 L341.5 18.0 L342.0 16.7 L342.5 16.8 L343.0 17.9 L343.5 18.6 L344.0 19.4 L344.5 19.9 L345.0 20.1 L345.5 19.7 L346.0 20.0 L346.5 18.9 L347.0 18.9 L347.5 18.7 L348.0 18.4 L348.5 19.2 L349.0 19.2 L349.5 19.8 L350.0 19.7 L350.0 22.4 L349.5 22.4 L349.0 23.0 L348.5 22.8 L348.0 23.9 L347.5 23.6 L347.0 23.2 L346.5 23.1 L346.0 22.2 L345.5 22.6 L345.0 22.1 L344.5 22.3 L344.0 22.8 L343.5 23.4 L343.0 24.4 L342.5 25.2 L342.0 25.7 L341.5 23.9 L341.0 24.1 L340.5 23.3 L340.0 22.7 L339.5 24.7 L339.0 23.9 L338.5 24.1 L338.0 24.8 L337.5 24.5 L337.0 23.2 L336.5 23.0 L336.0 23.0 L335.5 22.7 L335.0 22.6 L334.5 23.1 L334.0 22.8 L333.5 22.5 L333.0 23.3 L332.5 23.9 L332.0 23.9 L331.5 25.2 L331.0 26.1 L330.5 24.3 L330.0 23.6 L329.5 23.3 L329.0 23.8 L328.5 24.1 L328.0 23.7 L327.5 23.0 L327.0 23.0 L326.5 22.4 L326.0 23.0 L325.5 22.3 L325.0 22.4 L324.5 22.2 L324.0 22.4 L323.5 22.8 L323.0 22.9 L322.5 23.2 L322.0 23.1 L321.5 23.5 L321.0 22.8 L320.5 22.9 L320.0 22.1 L319.5 22.7 L319.0 22.5 L318.5 24.3 L318.0 23.3 L317.5 22.2 L317.0 22.3 L316.5 23.1 L316.0 22.4 L315.5 22.5 L315.0 23.6 L314.5 24.1 L314.0 24.1 L313.5 23.6 L313.0 24.8 L312.5 25.3 L312.0 25.2 L311.5 24.3 L311.0 23.3 L310.5 23.4 L310.0 22.4 L309.5 22.7 L309.0 22.7 L308.5 22.8 L308.0 22.0 L307.5 22.5 L307.0 22.7 L306.5 22.1 L306.0 23.0 L305.5 22.2 L305.0 22.9 L304.5 22.7 L304.0 23.1 L303.5 23.3 L303.0 24.8 L302.5 24.2 L302.0 24.0 L301.5 24.4 L301.0 24.6 L300.5 23.4 L300.0 23.3 L299.5 22.9 L299.0 22.7 L298.5 22.9 L298.0 22.6 L297.5 23.0 L297.0 23.3 L296.5 24.0 L296.0 24.5 L295.5 23.8 L295.0 23.7 L294.5 24.2 L294.0 24.3 L293.5 23.6 L293.0 22.9 L292.5 22.5 L292.0 22.6 L291.5 22.3 L291.0 23.5 L290.5 24.4 L290.0 24.0 L289.5 24.9 L289.0 23.1 L288.5 22.8 L288.0 22.7 L287.5 22.6 L287.0 23.1 L286.5 23.9 L286.0 24.8 L285.5 25.6 L285.0 25.2 L284.5 24.1 L284.0 24.3 L283.5 23.1 L283.0 23.2 L282.5 22.8 L282.0 22.1 L281.5 22.6 L281.0 22.8 L280.5 22.2 L280.0 21.9 L279.5 22.9 L279.0 22.7 L278.5 22.7 L278.0 22.8 L277.5 23.4 L277.0 23.7 L276.5 24.0 L276.0 24.5 L275.5 23.1 L275.0 23.0 L274.5 23.5 L274.0 25.3 L273.5 24.7 L273.0 26.0 L272.5 22.8 L272.0 22.8 L271.5 22.9 L271.0 23.0 L270.5 22.2 L270.0 22.3 L269.5 22.9 L269.0 23.9 L268.5 23.6 L268.0 23.9 L267.5 23.5 L267.0 22.7 L266.5 23.8 L266.0 24.2 L265.5 24.9 L265.0 24.3 L264.5 24.5 L264.0 23.5 L263.5 22.6 L263.0 22.6 L262.5 22.3 L262.0 22.9 L261.5 22.2 L261.0 22.8 L260.5 22.7 L260.0 23.2 L259.5 23.1 L259.0 24.4 L258.5 24.4 L258.0 25.5 L257.5 24.0 L257.0 23.6 L256.5 23.8 L256.0 23.4 L255.5 23.0 L255.0 22.6 L254.5 22.4 L254.0 22.1 L253.5 22.9 L253.0 22.6 L252.5 23.3 L252.0 22.3 L251.5 23.0 L251.0 23.2 L250.5 26.4 L250.0 25.1 L249.5 24.6 L249.0 25.1 L248.5 24.7 L248.0 23.7 L247.5 23.3 L247.0 22.5 L246.5 23.6 L246.0 23.3 L245.5 26.2 L245.0 25.0 L244.5 23.9 L244.0 23.3 L243.5 23.5 L243.0 23.3 L242.5 23.4 L242.0 25.0 L241.5 24.4 L241.0 23.8 L240.5 23.9 L240.0 23.1 L239.5 22.8 L239.0 22.6 L238.5 22.6 L238.0 22.8 L237.5 22.8 L237.0 23.0 L236.5 22.9 L236.0 24.2 L235.5 23.8 L235.0 23.7 L234.5 23.3 L234.0 23.7 L233.5 24.0 L233.0 23.2 L232.5 22.5 L232.0 22.4 L231.5 23.5 L231.0 22.8 L230.5 22.7 L230.0 22.9 L229.5 22.8 L229.0 22.1 L228.5 22.0 L228.0 22.5 L227.5 22.8 L227.0 22.6 L226.5 22.7 L226.0 22.9 L225.5 22.6 L225.0 22.8 L224.5 24.7 L224.0 23.5 L223.5 22.4 L223.0 22.4 L222.5 22.8 L222.0 22.7 L221.5 22.3 L221.0 22.3 L220.5 22.6 L220.0 22.5 L219.5 22.5 L219.0 23.0 L218.5 23.4 L218.0 23.8 L217.5 23.9 L217.0 23.0 L216.5 22.5 L216.0 22.2 L215.5 22.0 L215.0 22.6 L214.5 22.2 L214.0 22.9 L213.5 22.7 L213.0 23.6 L212.5 24.5 L212.0 25.1 L211.5 24.0 L211.0 23.3 L210.5 23.1 L210.0 22.6 L209.5 22.7 L209.0 22.7 L208.5 23.7 L208.0 23.8 L207.5 25.8 L207.0 23.1 L206.5 24.7 L206.0 23.6 L205.5 23.4 L205.0 22.7 L204.5 23.2 L204.0 22.8 L203.5 22.6 L203.0 22.7 L202.5 22.7 L202.0 22.2 L201.5 22.9 L201.0 22.8 L200.5 22.6 L200.0 22.5 L199.5 23.1 L199.0 22.8 L198.5 24.5 L198.0 25.6 L197.5 24.7 L197.0 25.8 L196.5 23.4 L196.0 23.3 L195.5 23.0 L195.0 23.0 L194.5 23.0 L194.0 22.4 L193.5 22.8 L193.0 23.2 L192.5 22.9 L192.0 23.3 L191.5 24.0 L191.0 23.1 L190.5 23.2 L190.0 22.4 L189.5 23.0 L189.0 22.9 L188.5 24.6 L188.0 24.7 L187.5 26.1 L187.0 24.8 L186.5 26.3 L186.0 24.2 L185.5 23.6 L185.0 23.1 L184.5 22.7 L184.0 22.1 L183.5 22.1 L183.0 22.4 L182.5 22.3 L182.0 23.7 L181.5 22.4 L181.0 23.7 L180.5 23.7 L180.0 24.8 L179.5 23.8 L179.0 23.7 L178.5 24.5 L178.0 24.2 L177.5 24.0 L177.0 25.2 L176.5 25.5 L176.0 23.1 L175.5 23.3 L175.0 23.3 L174.5 23.4 L174.0 23.2 L173.5 23.2 L173.0 22.7 L172.5 23.2 L172.0 23.2 L171.5 24.2 L171.0 26.4 L170.5 24.3 L170.0 24.0 L169.5 22.7 L169.0 23.2 L168.5 23.0 L168.0 22.9 L167.5 23.8 L167.0 23.6 L166.5 22.9 L166.0 23.2 L165.5 23.7 L165.0 23.3 L164.5 24.2 L164.0 24.4 L163.5 24.8 L163.0 23.8 L162.5 23.3 L162.0 23.0 L161.5 23.0 L161.0 23.3 L160.5 23.2 L160.0 23.3 L159.5 24.4 L159.0 23.6 L158.5 26.1 L158.0 25.6 L157.5 26.3 L157.0 25.2 L156.5 25.0 L156.0 23.6 L155.5 23.3 L155.0 23.2 L154.5 23.9 L154.0 22.9 L153.5 22.8 L153.0 22.9 L152.5 23.3 L152.0 24.3 L151.5 25.1 L151.0 23.6 L150.5 23.3 L150.0 23.5 L149.5 22.7 L149.0 23.7 L148.5 24.2 L148.0 24.6 L147.5 25.1 L147.0 24.2 L146.5 27.2 L146.0 25.8 L145.5 24.1 L145.0 24.8 L144.5 24.3 L144.0 23.2 L143.5 23.0 L143.0 23.2 L142.5 23.8 L142.0 24.2 L141.5 26.8 L141.0 25.0 L140.5 26.1 L140.0 26.2 L139.5 23.3 L139.0 23.1 L138.5 23.9 L138.0 22.7 L137.5 23.3 L137.0 23.5 L136.5 25.0 L136.0 25.7 L135.5 25.2 L135.0 26.6 L134.5 26.1 L134.0 23.7 L133.5 23.7 L133.0 23.0 L132.5 23.0 L132.0 23.0 L131.5 23.0 L131.0 23.4 L130.5 24.0 L130.0 25.4 L129.5 24.9 L129.0 24.3 L128.5 26.5 L128.0 25.4 L127.5 23.6 L127.0 24.2 L126.5 25.1 L126.0 24.9 L125.5 24.2 L125.0 23.7 L124.5 24.4 L124.0 24.0 L123.5 23.7 L123.0 23.1 L122.5 24.1 L122.0 25.1 L121.5 27.1 L121.0 26.0 L120.5 24.7 L120.0 24.7 L119.5 25.1 L119.0 24.0 L118.5 23.7 L118.0 23.9 L117.5 23.0 L117.0 23.5 L116.5 22.7 L116.0 22.8 L115.5 22.8 L115.0 23.5 L114.5 22.9 L114.0 23.7 L113.5 24.0 L113.0 24.7 L112.5 25.7 L112.0 24.2 L111.5 24.5 L111.0 23.1 L110.5 23.2 L110.0 24.7 L109.5 23.2 L109.0 23.2 L108.5 22.7 L108.0 22.7 L107.5 23.2 L107.0 24.5 L106.5 25.6 L106.0 23.2 L105.5 23.2 L105.0 23.0 L104.5 23.2 L104.0 22.6 L103.5 23.9 L103.0 23.4 L102.5 23.4 L102.0 23.9 L101.5 26.3 L101.0 27.4 L100.5 24.4 L100.0 25.9 L99.5 23.2 L99.0 23.2 L98.5 23.0 L98.0 23.9 L97.5 22.7 L97.0 23.5 L96.5 23.5 L96.0 26.1 L95.5 27.1 L95.0 25.4 L94.5 23.2 L94.0 24.1 L93.5 24.7 L93.0 25.4 L92.5 24.8 L92.0 23.6 L91.5 23.3 L91.0 23.3 L90.5 23.6 L90.0 24.5 L89.5 25.7 L89.0 27.0 L88.5 26.4 L88.0 24.8 L87.5 24.6 L87.0 24.5 L86.5 23.4 L86.0 22.8 L85.5 23.6 L85.0 22.9 L84.5 23.2 L84.0 23.4 L83.5 23.8 L83.0 23.9 L82.5 24.8 L82.0 26.5 L81.5 24.2 L81.0 23.8 L80.5 24.0 L80.0 24.1 L79.5 24.2 L79.0 23.5 L78.5 23.5 L78.0 23.3 L77.5 23.1 L77.0 22.5 L76.5 23.2 L76.0 24.2 L75.5 23.8 L75.0 23.3 L74.5 24.0 L74.0 24.8 L73.5 24.7 L73.0 24.1 L72.5 22.6 L72.0 22.5 L71.5 23.0 L71.0 22.8 L70.5 23.0 L70.0 23.1 L69.5 22.4 L69.0 22.7 L68.5 22.1 L68.0 22.6 L67.5 22.3 L67.0 22.6 L66.5 23.1 L66.0 23.5 L65.5 24.5 L65.0 24.9 L64.5 24.2 L64.0 23.0 L63.5 22.8 L63.0 22.8 L62.5 23.3 L62.0 23.7 L61.5 23.2 L61.0 23.5 L60.5 24.3 L60.0 23.7 L59.5 23.0 L59.0 23.7 L58.5 23.4 L58.0 23.6 L57.5 23.1 L57.0 22.8 L56.5 22.1 L56.0 22.8 L55.5 22.7 L55.0 22.7 L54.5 23.5 L54.0 22.8 L53.5 23.6 L53.0 23.9 L52.5 24.3 L52.0 23.2 L51.5 24.1 L51.0 23.4 L50.5 22.9 L50.0 22.7 L49.5 22.7 L49.0 22.9 L48.5 22.5 L48.0 23.0 L47.5 22.3 L47.0 22.6 L46.5 22.4 L46.0 22.4 L45.5 22.0 L45.0 22.3 L44.5 22.5 L44.0 23.1 L43.5 23.5 L43.0 24.4 L42.5 23.8 L42.0 23.2 L41.5 22.9 L41.0 23.8 L40.5 24.4 L40.0 24.0 L39.5 24.2 L39.0 22.8 L38.5 23.4 L38.0 23.0 L37.5 22.6 L37.0 22.9 L36.5 22.4 L36.0 22.0 L35.5 22.6 L35.0 22.3 L34.5 22.6 L34.0 23.0 L33.5 23.2 L33.0 23.4 L32.5 24.0 L32.0 22.5 L31.5 23.8 L31.0 22.3 L30.5 23.1 L30.0 22.2 L29.5 22.0 L29.0 22.8 L28.5 22.6 L28.0 23.1 L27.5 23.0 L27.0 23.3 L26.5 23.2 L26.0 23.2 L25.5 23.7 L25.0 23.4 L24.5 22.8 L24.0 22.7 L23.5 22.3 L23.0 22.1 L22.5 22.9 L22.0 22.1 L21.5 22.3 L21.0 22.4 L20.5 22.3 L20.0 23.0 L19.5 22.6 L19.0 23.5 L18.5 23.8 L18.0 23.3 L17.5 24.0 L17.0 23.5 L16.5 24.8 L16.0 24.0 L15.5 25.4 L15.0 25.1 L14.5 26.8 L14.0 23.0 L13.5 23.7 L13.0 22.5 L12.5 22.8 L12.0 22.8 L11.5 23.9 L11.0 24.1 L10.5 23.3 L10.0 22.7 L9.5 22.5 L9.0 22.5 L8.5 23.1 L8.0 23.6 L7.5 23.4 L7.0 23.8 L6.5 22.9 L6.0 22.5 L5.5 23.8 L5.0 24.3 L4.5 26.7 L4.0 25.2 L3.5 25.8 L3.0 26.0 L2.5 23.8 L2.0 23.0 L1.5 24.2 L1.0 23.5 L0.5 22.3 L0.0 22.1 Z" fill="#d07ae0"/></svg>
<div class="a" style="left:175px;top:429.8px;width:43px;height:10px;background:#2a1530;"></div>
<div class="t" style="left:178.5px;top:431.75px;font-size:5.3px;line-height:6.89px;color:#e6e6e6;transform:scaleX(0.923);transform-origin:left;">Eventname.mp3</div>
<div class="a" style="left:504px;top:446.7px;width:20px;height:10px;background:#2a1530;"></div>
<div class="t" style="left:410.7px;width:200px;text-align:center;top:446.80px;font-size:8px;line-height:10.4px;color:#f0f0f0;letter-spacing:-0.4px;">fx</div>
<div class="a" style="left:517.8px;top:451.3px;width:1.1px;height:1.1px;background:#9c9c9c;"></div>
<div class="a" style="left:520.1999999999999px;top:451.3px;width:1.1px;height:1.1px;background:#9c9c9c;"></div>
<div class="a" style="left:522.5999999999999px;top:451.3px;width:1.1px;height:1.1px;background:#9c9c9c;"></div>
<div class="a" style="left:411px;top:457px;width:351px;height:27px;background:#3a2288;"></div>
<div class="a" style="left:411px;top:470.1px;width:351px;height:0.9px;background:rgba(0,0,0,0.35);"></div>
<svg class="a" style="left:411px;top:457px;" width="351" height="27" viewBox="0 0 351 27"><path d="M0.0 5.2 L0.5 5.7 L1.0 5.1 L1.5 4.8 L2.0 5.0 L2.5 3.1 L3.0 2.7 L3.5 4.5 L4.0 4.4 L4.5 5.0 L5.0 4.7 L5.5 5.2 L6.0 5.0 L6.5 4.6 L7.0 4.7 L7.5 4.9 L8.0 4.7 L8.5 4.3 L9.0 4.1 L9.5 3.8 L10.0 3.9 L10.5 4.7 L11.0 3.9 L11.5 5.2 L12.0 5.2 L12.5 5.7 L13.0 5.4 L13.5 5.8 L14.0 5.9 L14.5 5.8 L15.0 5.4 L15.5 5.9 L16.0 5.4 L16.5 5.4 L17.0 4.6 L17.5 4.1 L18.0 3.1 L18.5 4.0 L19.0 2.2 L19.5 3.3 L20.0 4.8 L20.5 5.0 L21.0 5.2 L21.5 5.5 L22.0 5.6 L22.5 5.4 L23.0 5.4 L23.5 5.8 L24.0 5.2 L24.5 5.4 L25.0 4.3 L25.5 3.6 L26.0 4.2 L26.5 4.9 L27.0 5.7 L27.5 5.3 L28.0 6.0 L28.5 5.2 L29.0 5.3 L29.5 5.0 L30.0 5.1 L30.5 4.6 L31.0 4.5 L31.5 5.2 L32.0 4.4 L32.5 3.4 L33.0 5.7 L33.5 5.7 L34.0 5.3 L34.5 5.3 L35.0 5.6 L35.5 5.6 L36.0 5.1 L36.5 5.9 L37.0 5.8 L37.5 4.9 L38.0 5.9 L38.5 5.5 L39.0 3.6 L39.5 2.6 L40.0 5.5 L40.5 5.5 L41.0 5.0 L41.5 5.8 L42.0 5.6 L42.5 5.3 L43.0 5.8 L43.5 5.7 L44.0 5.4 L44.5 5.6 L45.0 5.9 L45.5 5.1 L46.0 4.6 L46.5 4.8 L47.0 5.0 L47.5 4.5 L48.0 3.6 L48.5 3.9 L49.0 2.7 L49.5 2.6 L50.0 3.7 L50.5 4.9 L51.0 5.5 L51.5 4.7 L52.0 3.9 L52.5 4.4 L53.0 4.5 L53.5 5.5 L54.0 5.3 L54.5 4.6 L55.0 4.3 L55.5 3.9 L56.0 5.3 L56.5 5.2 L57.0 5.6 L57.5 5.9 L58.0 5.6 L58.5 5.0 L59.0 4.7 L59.5 4.1 L60.0 4.0 L60.5 4.7 L61.0 5.4 L61.5 5.6 L62.0 5.9 L62.5 5.9 L63.0 5.4 L63.5 5.0 L64.0 5.7 L64.5 5.7 L65.0 5.1 L65.5 4.8 L66.0 4.8 L66.5 3.6 L67.0 3.5 L67.5 3.6 L68.0 5.0 L68.5 5.2 L69.0 4.9 L69.5 5.2 L70.0 5.8 L70.5 5.6 L71.0 5.5 L71.5 4.0 L72.0 4.1 L72.5 3.7 L73.0 5.2 L73.5 5.6 L74.0 6.1 L74.5 5.5 L75.0 5.1 L75.5 4.7 L76.0 5.5 L76.5 5.7 L77.0 5.9 L77.5 5.2 L78.0 5.3 L78.5 5.3 L79.0 4.7 L79.5 4.8 L80.0 5.6 L80.5 5.6 L81.0 4.5 L81.5 4.8 L82.0 4.4 L82.5 4.3 L83.0 1.2 L83.5 4.4 L84.0 3.8 L84.5 4.3 L85.0 5.0 L85.5 5.2 L86.0 5.3 L86.5 5.1 L87.0 4.3 L87.5 3.9 L88.0 3.4 L88.5 3.8 L89.0 4.0 L89.5 5.3 L90.0 5.2 L90.5 5.2 L91.0 4.3 L91.5 3.5 L92.0 4.6 L92.5 3.8 L93.0 5.0 L93.5 4.9 L94.0 5.7 L94.5 5.8 L95.0 6.0 L95.5 5.2 L96.0 5.4 L96.5 4.8 L97.0 3.9 L97.5 3.9 L98.0 3.3 L98.5 4.0 L99.0 2.9 L99.5 4.6 L100.0 5.4 L100.5 5.4 L101.0 5.9 L101.5 3.9 L102.0 4.1 L102.5 5.0 L103.0 5.5 L103.5 5.3 L104.0 5.6 L104.5 5.9 L105.0 4.3 L105.5 5.9 L106.0 5.9 L106.5 6.0 L107.0 5.9 L107.5 5.1 L108.0 5.6 L108.5 5.5 L109.0 5.0 L109.5 5.7 L110.0 4.4 L110.5 5.0 L111.0 4.4 L111.5 3.9 L112.0 5.1 L112.5 4.6 L113.0 4.4 L113.5 3.8 L114.0 5.0 L114.5 4.9 L115.0 5.2 L115.5 6.0 L116.0 5.9 L116.5 5.7 L117.0 5.8 L117.5 5.1 L118.0 3.9 L118.5 1.8 L119.0 3.9 L119.5 5.5 L120.0 5.5 L120.5 5.6 L121.0 5.4 L121.5 6.0 L122.0 5.7 L122.5 5.8 L123.0 5.6 L123.5 5.6 L124.0 5.4 L124.5 6.0 L125.0 5.5 L125.5 5.0 L126.0 3.9 L126.5 3.8 L127.0 4.7 L127.5 5.3 L128.0 5.8 L128.5 5.6 L129.0 5.2 L129.5 5.1 L130.0 5.8 L130.5 5.5 L131.0 5.4 L131.5 5.6 L132.0 5.1 L132.5 5.4 L133.0 4.6 L133.5 3.5 L134.0 2.6 L134.5 3.6 L135.0 4.4 L135.5 5.7 L136.0 5.3 L136.5 5.7 L137.0 5.7 L137.5 5.5 L138.0 5.2 L138.5 4.9 L139.0 3.5 L139.5 3.4 L140.0 4.0 L140.5 4.0 L141.0 5.0 L141.5 5.5 L142.0 5.3 L142.5 5.7 L143.0 5.5 L143.5 5.7 L144.0 5.0 L144.5 5.5 L145.0 4.6 L145.5 4.5 L146.0 3.5 L146.5 3.4 L147.0 5.3 L147.5 5.0 L148.0 5.8 L148.5 5.9 L149.0 5.8 L149.5 5.7 L150.0 4.8 L150.5 4.7 L151.0 3.0 L151.5 2.7 L152.0 4.4 L152.5 4.4 L153.0 3.9 L153.5 3.6 L154.0 4.9 L154.5 6.0 L155.0 5.4 L155.5 5.7 L156.0 5.6 L156.5 4.6 L157.0 5.6 L157.5 5.6 L158.0 5.9 L158.5 5.4 L159.0 5.5 L159.5 5.0 L160.0 5.7 L160.5 5.8 L161.0 5.3 L161.5 4.4 L162.0 4.1 L162.5 3.8 L163.0 4.1 L163.5 4.1 L164.0 5.2 L164.5 3.0 L165.0 2.7 L165.5 4.5 L166.0 4.9 L166.5 5.0 L167.0 5.3 L167.5 5.6 L168.0 4.6 L168.5 4.5 L169.0 4.5 L169.5 3.4 L170.0 2.6 L170.5 4.5 L171.0 3.8 L171.5 4.9 L172.0 4.1 L172.5 4.7 L173.0 3.9 L173.5 5.5 L174.0 5.1 L174.5 5.9 L175.0 5.0 L175.5 5.3 L176.0 5.5 L176.5 5.5 L177.0 5.7 L177.5 5.5 L178.0 5.6 L178.5 4.2 L179.0 3.7 L179.5 3.3 L180.0 4.3 L180.5 4.8 L181.0 4.4 L181.5 5.5 L182.0 4.5 L182.5 3.9 L183.0 4.8 L183.5 5.1 L184.0 5.4 L184.5 5.9 L185.0 5.2 L185.5 5.9 L186.0 6.0 L186.5 5.7 L187.0 5.5 L187.5 5.6 L188.0 4.8 L188.5 4.1 L189.0 3.7 L189.5 3.8 L190.0 4.8 L190.5 3.6 L191.0 5.0 L191.5 4.9 L192.0 5.8 L192.5 5.6 L193.0 6.0 L193.5 5.6 L194.0 4.6 L194.5 4.5 L195.0 3.0 L195.5 4.9 L196.0 4.3 L196.5 5.4 L197.0 5.5 L197.5 5.4 L198.0 5.4 L198.5 5.1 L199.0 5.9 L199.5 5.7 L200.0 5.4 L200.5 5.4 L201.0 5.1 L201.5 5.6 L202.0 4.6 L202.5 4.9 L203.0 4.8 L203.5 5.0 L204.0 5.3 L204.5 4.2 L205.0 3.3 L205.5 4.6 L206.0 4.7 L206.5 5.2 L207.0 5.4 L207.5 4.1 L208.0 3.4 L208.5 4.6 L209.0 5.4 L209.5 5.7 L210.0 5.5 L210.5 5.7 L211.0 5.6 L211.5 5.6 L212.0 5.8 L212.5 5.8 L213.0 5.6 L213.5 5.1 L214.0 4.6 L214.5 5.1 L215.0 3.6 L215.5 3.3 L216.0 3.9 L216.5 5.1 L217.0 4.4 L217.5 5.2 L218.0 5.9 L218.5 5.2 L219.0 5.8 L219.5 4.8 L220.0 3.8 L220.5 4.1 L221.0 4.4 L221.5 4.9 L222.0 3.3 L222.5 5.6 L223.0 5.9 L223.5 5.2 L224.0 4.3 L224.5 3.7 L225.0 2.5 L225.5 2.0 L226.0 4.5 L226.5 4.2 L227.0 5.4 L227.5 5.7 L228.0 5.4 L228.5 5.4 L229.0 5.3 L229.5 5.6 L230.0 4.5 L230.5 5.3 L231.0 4.7 L231.5 4.8 L232.0 4.9 L232.5 5.5 L233.0 5.1 L233.5 5.2 L234.0 5.0 L234.5 4.9 L235.0 4.4 L235.5 5.1 L236.0 4.6 L236.5 5.7 L237.0 6.0 L237.5 5.9 L238.0 5.8 L238.5 5.6 L239.0 5.6 L239.5 5.7 L240.0 5.6 L240.5 5.3 L241.0 5.4 L241.5 5.0 L242.0 5.0 L242.5 2.4 L243.0 4.7 L243.5 6.0 L244.0 4.8 L244.5 4.9 L245.0 3.4 L245.5 3.6 L246.0 4.1 L246.5 4.9 L247.0 5.5 L247.5 5.5 L248.0 5.6 L248.5 6.0 L249.0 5.8 L249.5 5.9 L250.0 5.3 L250.5 5.1 L251.0 5.6 L251.5 5.6 L252.0 5.6 L252.5 4.8 L253.0 4.9 L253.5 4.5 L254.0 4.4 L254.5 3.3 L255.0 3.6 L255.5 1.2 L256.0 4.7 L256.5 5.0 L257.0 4.5 L257.5 5.5 L258.0 5.2 L258.5 5.1 L259.0 5.9 L259.5 5.2 L260.0 3.1 L260.5 4.4 L261.0 4.2 L261.5 4.7 L262.0 5.0 L262.5 5.4 L263.0 4.0 L263.5 3.4 L264.0 2.6 L264.5 3.6 L265.0 4.0 L265.5 3.3 L266.0 4.2 L266.5 4.8 L267.0 5.2 L267.5 5.0 L268.0 3.8 L268.5 4.9 L269.0 5.9 L269.5 5.5 L270.0 5.9 L270.5 5.3 L271.0 5.7 L271.5 5.1 L272.0 5.2 L272.5 4.2 L273.0 2.9 L273.5 4.3 L274.0 3.4 L274.5 4.8 L275.0 5.0 L275.5 5.5 L276.0 5.6 L276.5 5.8 L277.0 5.4 L277.5 4.2 L278.0 4.8 L278.5 4.1 L279.0 5.0 L279.5 5.1 L280.0 6.0 L280.5 5.7 L281.0 4.5 L281.5 4.3 L282.0 5.0 L282.5 5.4 L283.0 5.2 L283.5 5.6 L284.0 4.7 L284.5 4.2 L285.0 2.9 L285.5 3.1 L286.0 2.6 L286.5 4.1 L287.0 5.0 L287.5 5.3 L288.0 5.4 L288.5 5.4 L289.0 5.1 L289.5 3.6 L290.0 3.2 L290.5 3.7 L291.0 4.3 L291.5 4.5 L292.0 4.7 L292.5 5.5 L293.0 5.7 L293.5 5.1 L294.0 5.1 L294.5 5.3 L295.0 4.2 L295.5 3.5 L296.0 3.5 L296.5 3.6 L297.0 4.9 L297.5 5.5 L298.0 5.1 L298.5 5.7 L299.0 5.4 L299.5 5.5 L300.0 5.8 L300.5 5.7 L301.0 4.1 L301.5 3.4 L302.0 2.2 L302.5 4.5 L303.0 5.6 L303.5 5.5 L304.0 5.6 L304.5 5.7 L305.0 5.5 L305.5 5.6 L306.0 5.4 L306.5 5.3 L307.0 5.2 L307.5 5.0 L308.0 4.7 L308.5 5.1 L309.0 5.2 L309.5 5.1 L310.0 6.0 L310.5 5.5 L311.0 5.4 L311.5 6.1 L312.0 5.5 L312.5 5.0 L313.0 4.9 L313.5 4.8 L314.0 4.9 L314.5 4.7 L315.0 4.5 L315.5 4.2 L316.0 3.8 L316.5 4.0 L317.0 4.2 L317.5 3.6 L318.0 4.7 L318.5 5.0 L319.0 3.7 L319.5 3.7 L320.0 4.3 L320.5 2.2 L321.0 1.8 L321.5 4.4 L322.0 4.0 L322.5 4.5 L323.0 4.9 L323.5 4.7 L324.0 3.8 L324.5 3.0 L325.0 3.4 L325.5 3.7 L326.0 4.9 L326.5 5.2 L327.0 4.8 L327.5 4.5 L328.0 5.8 L328.5 6.0 L329.0 5.8 L329.5 5.5 L330.0 4.5 L330.5 4.8 L331.0 5.7 L331.5 5.9 L332.0 5.8 L332.5 5.6 L333.0 5.7 L333.5 5.2 L334.0 5.2 L334.5 5.5 L335.0 5.8 L335.5 5.3 L336.0 5.8 L336.5 5.1 L337.0 5.1 L337.5 5.3 L338.0 3.9 L338.5 3.2 L339.0 3.9 L339.5 4.8 L340.0 4.3 L340.5 3.7 L341.0 3.9 L341.5 4.2 L342.0 5.7 L342.5 5.2 L343.0 5.9 L343.5 5.8 L344.0 5.1 L344.5 6.1 L345.0 5.8 L345.5 5.7 L346.0 5.8 L346.5 3.8 L347.0 2.8 L347.5 2.5 L348.0 3.8 L348.5 4.8 L349.0 5.6 L349.5 5.5 L350.0 5.4 L350.5 5.6 L351.0 5.6 L351.0 8.5 L350.5 8.4 L350.0 8.6 L349.5 8.6 L349.0 8.5 L348.5 9.3 L348.0 10.6 L347.5 11.5 L347.0 11.7 L346.5 10.1 L346.0 8.3 L345.5 8.4 L345.0 8.3 L344.5 7.9 L344.0 9.2 L343.5 8.3 L343.0 8.2 L342.5 9.0 L342.0 8.5 L341.5 9.9 L341.0 10.2 L340.5 10.1 L340.0 9.7 L339.5 9.1 L339.0 10.3 L338.5 10.8 L338.0 10.3 L337.5 8.9 L337.0 9.0 L336.5 9.1 L336.0 8.4 L335.5 8.8 L335.0 8.3 L334.5 8.6 L334.0 8.7 L333.5 9.1 L333.0 8.3 L332.5 8.4 L332.0 8.2 L331.5 8.1 L331.0 8.3 L330.5 9.5 L330.0 9.6 L329.5 8.7 L329.0 8.3 L328.5 8.2 L328.0 8.3 L327.5 9.4 L327.0 9.5 L326.5 8.9 L326.0 9.0 L325.5 10.7 L325.0 10.4 L324.5 10.8 L324.0 10.0 L323.5 9.4 L323.0 9.2 L322.5 9.5 L322.0 10.0 L321.5 9.7 L321.0 11.9 L320.5 11.6 L320.0 9.9 L319.5 10.4 L319.0 10.2 L318.5 9.3 L318.0 9.3 L317.5 10.2 L317.0 9.9 L316.5 9.8 L316.0 10.3 L315.5 9.8 L315.0 9.5 L314.5 9.5 L314.0 9.0 L313.5 9.4 L313.0 9.1 L312.5 9.2 L312.0 8.7 L311.5 8.0 L311.0 8.6 L310.5 8.6 L310.0 8.0 L309.5 8.9 L309.0 8.7 L308.5 9.2 L308.0 9.3 L307.5 8.9 L307.0 8.8 L306.5 8.7 L306.0 8.7 L305.5 8.5 L305.0 8.5 L304.5 8.5 L304.0 8.4 L303.5 8.5 L303.0 8.4 L302.5 9.6 L302.0 11.8 L301.5 10.5 L301.0 10.1 L300.5 8.3 L300.0 8.4 L299.5 8.6 L299.0 8.8 L298.5 8.3 L298.0 8.9 L297.5 8.5 L297.0 9.2 L296.5 10.3 L296.0 10.8 L295.5 10.7 L295.0 10.2 L294.5 8.8 L294.0 8.8 L293.5 9.0 L293.0 8.5 L292.5 8.5 L292.0 9.4 L291.5 9.6 L291.0 9.9 L290.5 10.1 L290.0 10.9 L289.5 10.2 L289.0 8.9 L288.5 8.7 L288.0 8.6 L287.5 8.8 L287.0 9.2 L286.5 9.8 L286.0 11.7 L285.5 10.7 L285.0 11.5 L284.5 9.7 L284.0 9.3 L283.5 8.4 L283.0 8.8 L282.5 8.9 L282.0 9.0 L281.5 9.6 L281.0 9.5 L280.5 8.3 L280.0 8.1 L279.5 9.0 L279.0 9.2 L278.5 9.9 L278.0 9.3 L277.5 10.2 L277.0 8.7 L276.5 8.3 L276.0 8.4 L275.5 8.4 L275.0 9.1 L274.5 9.5 L274.0 11.0 L273.5 10.0 L273.0 11.0 L272.5 9.8 L272.0 9.0 L271.5 8.9 L271.0 8.3 L270.5 8.7 L270.0 8.2 L269.5 8.5 L269.0 8.3 L268.5 9.1 L268.0 10.0 L267.5 8.9 L267.0 9.1 L266.5 9.2 L266.0 10.1 L265.5 11.0 L265.0 10.3 L264.5 10.4 L264.0 11.6 L263.5 10.9 L263.0 10.0 L262.5 8.7 L262.0 9.3 L261.5 9.6 L261.0 9.9 L260.5 9.6 L260.0 11.3 L259.5 8.8 L259.0 8.1 L258.5 9.1 L258.0 8.9 L257.5 8.7 L257.0 9.4 L256.5 9.2 L256.0 9.4 L255.5 12.8 L255.0 10.4 L254.5 10.5 L254.0 9.9 L253.5 9.5 L253.0 9.1 L252.5 9.3 L252.0 8.5 L251.5 8.5 L251.0 8.5 L250.5 9.0 L250.0 9.0 L249.5 8.1 L249.0 8.3 L248.5 8.2 L248.0 8.4 L247.5 8.7 L247.0 8.7 L246.5 9.3 L246.0 10.1 L245.5 10.2 L245.0 10.7 L244.5 9.1 L244.0 9.1 L243.5 8.0 L243.0 9.4 L242.5 12.0 L242.0 9.3 L241.5 9.0 L241.0 8.7 L240.5 8.9 L240.0 8.4 L239.5 8.5 L239.0 8.4 L238.5 8.6 L238.0 8.3 L237.5 8.2 L237.0 8.1 L236.5 8.3 L236.0 9.3 L235.5 8.9 L235.0 9.7 L234.5 9.2 L234.0 9.1 L233.5 8.7 L233.0 8.9 L232.5 8.7 L232.0 9.1 L231.5 9.2 L231.0 9.2 L230.5 8.8 L230.0 9.3 L229.5 8.4 L229.0 8.8 L228.5 8.7 L228.0 8.7 L227.5 8.4 L227.0 8.7 L226.5 10.0 L226.0 9.6 L225.5 11.7 L225.0 11.7 L224.5 10.5 L224.0 9.9 L223.5 8.9 L223.0 8.2 L222.5 8.4 L222.0 10.5 L221.5 9.1 L221.0 9.8 L220.5 10.3 L220.0 10.3 L219.5 9.1 L219.0 8.2 L218.5 8.9 L218.0 8.3 L217.5 8.8 L217.0 9.8 L216.5 9.1 L216.0 9.9 L215.5 11.0 L215.0 10.5 L214.5 9.1 L214.0 9.5 L213.5 9.2 L213.0 8.5 L212.5 8.4 L212.0 8.3 L211.5 8.6 L211.0 8.4 L210.5 8.5 L210.0 8.7 L209.5 8.4 L209.0 8.7 L208.5 9.5 L208.0 10.6 L207.5 9.9 L207.0 8.6 L206.5 8.7 L206.0 9.6 L205.5 9.3 L205.0 10.6 L204.5 10.0 L204.0 9.0 L203.5 9.2 L203.0 9.2 L202.5 9.2 L202.0 9.6 L201.5 8.5 L201.0 8.8 L200.5 8.6 L200.0 8.6 L199.5 8.5 L199.0 8.3 L198.5 8.9 L198.0 8.6 L197.5 8.5 L197.0 8.5 L196.5 8.7 L196.0 9.7 L195.5 9.4 L195.0 11.2 L194.5 9.4 L194.0 9.6 L193.5 8.4 L193.0 8.1 L192.5 8.6 L192.0 8.2 L191.5 9.1 L191.0 9.3 L190.5 10.7 L190.0 9.3 L189.5 10.4 L189.0 10.4 L188.5 9.9 L188.0 9.4 L187.5 8.5 L187.0 8.5 L186.5 8.5 L186.0 8.1 L185.5 8.3 L185.0 8.9 L184.5 8.1 L184.0 8.8 L183.5 9.0 L183.0 9.3 L182.5 10.3 L182.0 9.9 L181.5 8.6 L181.0 9.7 L180.5 9.4 L180.0 9.7 L179.5 11.1 L179.0 10.4 L178.5 10.1 L178.0 8.6 L177.5 8.6 L177.0 8.4 L176.5 8.6 L176.0 8.7 L175.5 8.7 L175.0 9.3 L174.5 8.2 L174.0 9.1 L173.5 8.5 L173.0 10.5 L172.5 9.5 L172.0 10.0 L171.5 9.3 L171.0 10.4 L170.5 9.5 L170.0 11.4 L169.5 10.6 L169.0 9.5 L168.5 9.5 L168.0 9.4 L167.5 8.5 L167.0 8.8 L166.5 9.3 L166.0 9.3 L165.5 9.5 L165.0 11.2 L164.5 11.1 L164.0 9.1 L163.5 9.8 L163.0 9.8 L162.5 10.2 L162.0 9.8 L161.5 9.8 L161.0 9.0 L160.5 8.4 L160.0 8.4 L159.5 9.2 L159.0 8.6 L158.5 8.5 L158.0 8.3 L157.5 8.4 L157.0 8.5 L156.5 9.7 L156.0 8.6 L155.5 8.4 L155.0 8.6 L154.5 8.1 L154.0 9.2 L153.5 10.7 L153.0 10.0 L152.5 9.5 L152.0 9.5 L151.5 11.2 L151.0 11.3 L150.5 9.6 L150.0 9.5 L149.5 8.4 L149.0 8.4 L148.5 8.1 L148.0 8.3 L147.5 8.9 L147.0 8.9 L146.5 11.0 L146.0 10.6 L145.5 9.7 L145.0 9.4 L144.5 8.6 L144.0 9.2 L143.5 8.5 L143.0 8.6 L142.5 8.5 L142.0 8.9 L141.5 8.6 L141.0 9.0 L140.5 10.0 L140.0 10.4 L139.5 10.7 L139.0 10.6 L138.5 9.4 L138.0 8.9 L137.5 8.5 L137.0 8.5 L136.5 8.4 L136.0 8.7 L135.5 8.5 L135.0 9.7 L134.5 10.4 L134.0 11.6 L133.5 10.8 L133.0 9.6 L132.5 8.7 L132.0 9.0 L131.5 8.6 L131.0 8.6 L130.5 8.7 L130.0 8.3 L129.5 8.9 L129.0 8.8 L128.5 8.6 L128.0 8.2 L127.5 9.0 L127.0 9.5 L126.5 10.0 L126.0 10.1 L125.5 8.9 L125.0 8.6 L124.5 8.1 L124.0 8.7 L123.5 8.4 L123.0 8.5 L122.5 8.3 L122.0 8.3 L121.5 8.2 L121.0 8.6 L120.5 8.7 L120.0 8.7 L119.5 8.6 L119.0 10.3 L118.5 12.2 L118.0 10.0 L117.5 8.8 L117.0 8.3 L116.5 8.4 L116.0 8.2 L115.5 8.1 L115.0 8.8 L114.5 9.2 L114.0 9.2 L113.5 10.4 L113.0 10.0 L112.5 9.2 L112.0 9.0 L111.5 10.0 L111.0 9.6 L110.5 8.9 L110.0 9.7 L109.5 8.3 L109.0 9.0 L108.5 8.5 L108.0 8.4 L107.5 9.0 L107.0 8.2 L106.5 8.1 L106.0 8.1 L105.5 8.3 L105.0 9.6 L104.5 8.3 L104.0 8.5 L103.5 8.8 L103.0 8.7 L102.5 9.3 L102.0 9.9 L101.5 10.0 L101.0 8.3 L100.5 8.8 L100.0 8.6 L99.5 9.4 L99.0 10.9 L98.5 10.1 L98.0 10.7 L97.5 10.2 L97.0 10.1 L96.5 9.2 L96.0 8.7 L95.5 8.9 L95.0 8.2 L94.5 8.4 L94.0 8.3 L93.5 9.3 L93.0 9.0 L92.5 10.1 L92.0 9.3 L91.5 10.7 L91.0 9.6 L90.5 8.9 L90.0 8.7 L89.5 8.9 L89.0 10.2 L88.5 10.0 L88.0 10.9 L87.5 10.3 L87.0 9.7 L86.5 9.2 L86.0 8.9 L85.5 8.8 L85.0 9.2 L84.5 9.8 L84.0 10.2 L83.5 9.5 L83.0 13.2 L82.5 9.7 L82.0 9.7 L81.5 9.5 L81.0 9.4 L80.5 8.4 L80.0 8.5 L79.5 9.1 L79.0 9.2 L78.5 8.9 L78.0 8.7 L77.5 8.9 L77.0 8.3 L76.5 8.3 L76.0 8.7 L75.5 9.5 L75.0 9.2 L74.5 8.7 L74.0 8.0 L73.5 8.5 L73.0 8.8 L72.5 10.5 L72.0 10.0 L71.5 10.1 L71.0 8.6 L70.5 8.4 L70.0 8.4 L69.5 8.8 L69.0 9.2 L68.5 9.0 L68.0 9.2 L67.5 10.8 L67.0 10.7 L66.5 10.2 L66.0 9.2 L65.5 9.4 L65.0 9.1 L64.5 8.6 L64.0 8.4 L63.5 9.1 L63.0 8.7 L62.5 8.1 L62.0 8.2 L61.5 8.3 L61.0 8.6 L60.5 9.4 L60.0 9.9 L59.5 9.8 L59.0 9.6 L58.5 9.1 L58.0 8.6 L57.5 8.2 L57.0 8.6 L56.5 9.0 L56.0 8.8 L55.5 10.4 L55.0 9.9 L54.5 9.3 L54.0 8.7 L53.5 8.7 L53.0 9.7 L52.5 10.0 L52.0 9.9 L51.5 9.4 L51.0 8.8 L50.5 9.0 L50.0 10.6 L49.5 11.5 L49.0 11.6 L48.5 10.0 L48.0 10.3 L47.5 9.5 L47.0 9.0 L46.5 9.5 L46.0 9.7 L45.5 8.9 L45.0 8.2 L44.5 8.5 L44.0 8.6 L43.5 8.3 L43.0 8.3 L42.5 8.8 L42.0 8.6 L41.5 8.3 L41.0 9.0 L40.5 8.6 L40.0 8.5 L39.5 11.5 L39.0 10.4 L38.5 8.5 L38.0 8.3 L37.5 9.0 L37.0 8.3 L36.5 8.2 L36.0 9.0 L35.5 8.6 L35.0 8.6 L34.5 8.9 L34.0 8.7 L33.5 8.3 L33.0 8.6 L32.5 10.7 L32.0 9.9 L31.5 8.8 L31.0 9.7 L30.5 9.6 L30.0 9.2 L29.5 9.0 L29.0 8.9 L28.5 8.9 L28.0 8.1 L27.5 8.7 L27.0 8.4 L26.5 9.0 L26.0 10.1 L25.5 10.4 L25.0 9.7 L24.5 8.6 L24.0 8.8 L23.5 8.3 L23.0 8.6 L22.5 8.6 L22.0 8.4 L21.5 8.4 L21.0 8.8 L20.5 8.9 L20.0 9.1 L19.5 10.6 L19.0 11.4 L18.5 10.2 L18.0 11.2 L17.5 9.7 L17.0 9.4 L16.5 8.8 L16.0 8.8 L15.5 8.2 L15.0 8.6 L14.5 8.3 L14.0 8.2 L13.5 8.3 L13.0 8.8 L12.5 8.3 L12.0 8.8 L11.5 8.9 L11.0 9.9 L10.5 9.6 L10.0 10.1 L9.5 10.3 L9.0 10.2 L8.5 9.8 L8.0 9.4 L7.5 9.1 L7.0 9.2 L6.5 9.5 L6.0 9.2 L5.5 8.9 L5.0 9.2 L4.5 9.2 L4.0 9.9 L3.5 9.4 L3.0 11.5 L2.5 10.9 L2.0 9.1 L1.5 9.2 L1.0 8.9 L0.5 8.3 L0.0 8.8 Z" fill="#7a4cf0"/><path d="M0.0 18.9 L0.5 19.0 L1.0 19.3 L1.5 19.0 L2.0 18.9 L2.5 18.2 L3.0 17.0 L3.5 18.2 L4.0 18.1 L4.5 18.6 L5.0 18.5 L5.5 18.1 L6.0 18.5 L6.5 18.5 L7.0 19.3 L7.5 19.5 L8.0 18.9 L8.5 19.3 L9.0 19.3 L9.5 18.9 L10.0 19.2 L10.5 19.2 L11.0 19.2 L11.5 18.9 L12.0 18.3 L12.5 18.6 L13.0 18.2 L13.5 17.1 L14.0 16.3 L14.5 15.4 L15.0 16.9 L15.5 17.1 L16.0 18.1 L16.5 19.2 L17.0 19.0 L17.5 19.5 L18.0 19.2 L18.5 18.9 L19.0 19.6 L19.5 18.8 L20.0 19.1 L20.5 17.9 L21.0 18.9 L21.5 18.6 L22.0 17.9 L22.5 17.3 L23.0 17.9 L23.5 17.8 L24.0 16.9 L24.5 16.3 L25.0 17.6 L25.5 18.2 L26.0 19.1 L26.5 19.0 L27.0 18.3 L27.5 17.9 L28.0 17.9 L28.5 16.7 L29.0 16.5 L29.5 17.9 L30.0 18.5 L30.5 17.0 L31.0 18.9 L31.5 18.7 L32.0 19.2 L32.5 19.1 L33.0 19.2 L33.5 18.7 L34.0 18.8 L34.5 18.1 L35.0 17.6 L35.5 17.2 L36.0 17.6 L36.5 18.2 L37.0 17.6 L37.5 17.5 L38.0 18.5 L38.5 17.2 L39.0 17.7 L39.5 16.3 L40.0 16.7 L40.5 18.1 L41.0 18.4 L41.5 18.2 L42.0 19.2 L42.5 18.7 L43.0 17.9 L43.5 18.4 L44.0 16.9 L44.5 17.5 L45.0 16.9 L45.5 17.4 L46.0 18.3 L46.5 18.2 L47.0 18.5 L47.5 19.2 L48.0 18.5 L48.5 16.5 L49.0 16.3 L49.5 17.3 L50.0 17.6 L50.5 18.2 L51.0 17.6 L51.5 15.8 L52.0 18.1 L52.5 17.9 L53.0 18.4 L53.5 19.3 L54.0 19.2 L54.5 19.0 L55.0 18.4 L55.5 19.3 L56.0 19.1 L56.5 18.6 L57.0 18.6 L57.5 16.6 L58.0 17.4 L58.5 17.3 L59.0 18.0 L59.5 15.7 L60.0 17.1 L60.5 17.4 L61.0 19.3 L61.5 19.4 L62.0 19.5 L62.5 19.0 L63.0 18.6 L63.5 19.0 L64.0 19.3 L64.5 19.3 L65.0 18.6 L65.5 18.7 L66.0 18.6 L66.5 17.7 L67.0 17.3 L67.5 18.0 L68.0 18.5 L68.5 18.1 L69.0 16.0 L69.5 17.7 L70.0 19.2 L70.5 18.7 L71.0 19.1 L71.5 19.3 L72.0 19.2 L72.5 19.4 L73.0 19.6 L73.5 18.7 L74.0 19.1 L74.5 18.0 L75.0 17.7 L75.5 17.8 L76.0 16.5 L76.5 16.2 L77.0 17.5 L77.5 17.3 L78.0 16.0 L78.5 18.2 L79.0 18.7 L79.5 18.9 L80.0 19.3 L80.5 19.3 L81.0 19.4 L81.5 19.2 L82.0 18.9 L82.5 19.4 L83.0 18.8 L83.5 19.0 L84.0 18.5 L84.5 19.1 L85.0 19.0 L85.5 18.1 L86.0 17.9 L86.5 18.2 L87.0 18.4 L87.5 19.1 L88.0 18.8 L88.5 19.5 L89.0 19.0 L89.5 18.7 L90.0 19.2 L90.5 18.8 L91.0 18.4 L91.5 16.9 L92.0 16.3 L92.5 17.2 L93.0 18.5 L93.5 19.0 L94.0 19.4 L94.5 18.8 L95.0 19.1 L95.5 19.0 L96.0 17.8 L96.5 18.2 L97.0 17.2 L97.5 18.1 L98.0 18.3 L98.5 19.2 L99.0 18.9 L99.5 18.8 L100.0 17.3 L100.5 16.5 L101.0 17.4 L101.5 16.0 L102.0 16.2 L102.5 16.8 L103.0 16.8 L103.5 16.0 L104.0 17.0 L104.5 18.6 L105.0 19.2 L105.5 18.8 L106.0 18.6 L106.5 18.7 L107.0 17.2 L107.5 17.2 L108.0 17.9 L108.5 17.7 L109.0 18.8 L109.5 19.4 L110.0 18.1 L110.5 16.9 L111.0 16.5 L111.5 17.7 L112.0 17.4 L112.5 18.4 L113.0 18.8 L113.5 19.2 L114.0 19.4 L114.5 19.4 L115.0 19.3 L115.5 19.0 L116.0 19.1 L116.5 19.3 L117.0 18.9 L117.5 17.5 L118.0 15.4 L118.5 18.5 L119.0 19.3 L119.5 19.4 L120.0 18.8 L120.5 18.6 L121.0 18.6 L121.5 18.4 L122.0 17.9 L122.5 18.1 L123.0 18.4 L123.5 18.3 L124.0 19.4 L124.5 18.8 L125.0 19.4 L125.5 18.3 L126.0 17.2 L126.5 17.0 L127.0 18.0 L127.5 18.4 L128.0 18.5 L128.5 17.3 L129.0 15.5 L129.5 16.9 L130.0 16.9 L130.5 18.4 L131.0 19.2 L131.5 19.5 L132.0 19.0 L132.5 18.7 L133.0 18.4 L133.5 17.4 L134.0 17.3 L134.5 18.1 L135.0 18.7 L135.5 19.0 L136.0 18.8 L136.5 19.0 L137.0 19.3 L137.5 19.3 L138.0 18.3 L138.5 18.6 L139.0 19.2 L139.5 19.0 L140.0 18.3 L140.5 17.9 L141.0 18.1 L141.5 17.6 L142.0 17.7 L142.5 17.5 L143.0 17.9 L143.5 18.3 L144.0 17.5 L144.5 16.6 L145.0 16.0 L145.5 17.9 L146.0 17.3 L146.5 18.7 L147.0 19.0 L147.5 19.2 L148.0 18.7 L148.5 19.4 L149.0 19.1 L149.5 19.0 L150.0 19.0 L150.5 19.0 L151.0 17.4 L151.5 18.3 L152.0 17.4 L152.5 18.3 L153.0 18.9 L153.5 19.1 L154.0 19.5 L154.5 18.4 L155.0 19.1 L155.5 19.1 L156.0 18.9 L156.5 17.6 L157.0 17.7 L157.5 17.8 L158.0 15.9 L158.5 17.4 L159.0 18.0 L159.5 18.4 L160.0 18.4 L160.5 17.2 L161.0 16.0 L161.5 17.0 L162.0 17.4 L162.5 18.5 L163.0 17.9 L163.5 18.1 L164.0 17.7 L164.5 17.7 L165.0 17.8 L165.5 18.8 L166.0 18.5 L166.5 19.2 L167.0 19.1 L167.5 19.2 L168.0 18.9 L168.5 19.0 L169.0 18.7 L169.5 18.2 L170.0 18.1 L170.5 17.1 L171.0 17.4 L171.5 18.4 L172.0 18.4 L172.5 16.5 L173.0 18.6 L173.5 18.6 L174.0 19.4 L174.5 18.6 L175.0 18.1 L175.5 18.3 L176.0 15.8 L176.5 15.4 L177.0 16.2 L177.5 17.3 L178.0 18.3 L178.5 18.5 L179.0 17.7 L179.5 17.0 L180.0 18.1 L180.5 18.9 L181.0 19.3 L181.5 19.2 L182.0 19.6 L182.5 19.2 L183.0 18.1 L183.5 17.6 L184.0 18.8 L184.5 19.1 L185.0 19.4 L185.5 19.1 L186.0 19.0 L186.5 19.2 L187.0 18.8 L187.5 17.9 L188.0 18.2 L188.5 18.8 L189.0 18.5 L189.5 19.4 L190.0 18.9 L190.5 19.3 L191.0 19.5 L191.5 19.5 L192.0 19.5 L192.5 18.9 L193.0 18.7 L193.5 19.6 L194.0 19.3 L194.5 19.3 L195.0 18.7 L195.5 19.0 L196.0 17.8 L196.5 17.4 L197.0 18.1 L197.5 18.9 L198.0 18.2 L198.5 17.4 L199.0 18.5 L199.5 18.9 L200.0 19.0 L200.5 18.9 L201.0 18.9 L201.5 18.8 L202.0 19.3 L202.5 19.6 L203.0 19.6 L203.5 18.7 L204.0 19.2 L204.5 18.7 L205.0 17.9 L205.5 16.5 L206.0 17.7 L206.5 18.4 L207.0 18.5 L207.5 19.4 L208.0 19.4 L208.5 18.8 L209.0 18.5 L209.5 19.5 L210.0 18.9 L210.5 18.4 L211.0 18.7 L211.5 18.1 L212.0 18.1 L212.5 17.4 L213.0 16.7 L213.5 18.3 L214.0 18.3 L214.5 18.4 L215.0 19.1 L215.5 18.9 L216.0 18.7 L216.5 19.5 L217.0 18.8 L217.5 18.7 L218.0 18.8 L218.5 19.0 L219.0 18.4 L219.5 18.0 L220.0 16.7 L220.5 16.7 L221.0 16.9 L221.5 17.9 L222.0 17.5 L222.5 17.3 L223.0 17.4 L223.5 19.1 L224.0 18.6 L224.5 19.4 L225.0 18.6 L225.5 18.3 L226.0 18.8 L226.5 18.3 L227.0 15.0 L227.5 16.9 L228.0 18.5 L228.5 18.5 L229.0 19.1 L229.5 18.5 L230.0 19.3 L230.5 18.7 L231.0 18.8 L231.5 18.3 L232.0 18.0 L232.5 17.5 L233.0 17.1 L233.5 17.7 L234.0 17.4 L234.5 17.6 L235.0 18.9 L235.5 18.9 L236.0 19.3 L236.5 19.1 L237.0 19.2 L237.5 19.2 L238.0 18.5 L238.5 18.7 L239.0 18.5 L239.5 17.4 L240.0 17.5 L240.5 17.6 L241.0 17.7 L241.5 18.8 L242.0 18.2 L242.5 18.0 L243.0 18.6 L243.5 18.9 L244.0 18.9 L244.5 18.9 L245.0 19.3 L245.5 18.9 L246.0 18.5 L246.5 17.1 L247.0 17.9 L247.5 18.8 L248.0 18.8 L248.5 19.1 L249.0 18.7 L249.5 19.1 L250.0 19.0 L250.5 19.5 L251.0 19.2 L251.5 18.7 L252.0 17.5 L252.5 15.9 L253.0 17.2 L253.5 18.0 L254.0 18.6 L254.5 18.9 L255.0 18.8 L255.5 19.4 L256.0 18.8 L256.5 18.8 L257.0 18.9 L257.5 17.4 L258.0 17.8 L258.5 17.1 L259.0 18.4 L259.5 18.9 L260.0 18.6 L260.5 19.1 L261.0 18.9 L261.5 19.0 L262.0 19.2 L262.5 17.8 L263.0 16.9 L263.5 17.4 L264.0 16.9 L264.5 19.1 L265.0 18.9 L265.5 19.1 L266.0 18.6 L266.5 19.0 L267.0 17.3 L267.5 18.3 L268.0 18.4 L268.5 18.9 L269.0 19.1 L269.5 18.9 L270.0 18.3 L270.5 18.8 L271.0 18.0 L271.5 16.2 L272.0 17.6 L272.5 18.5 L273.0 19.2 L273.5 19.4 L274.0 18.6 L274.5 19.2 L275.0 19.2 L275.5 18.8 L276.0 19.1 L276.5 19.0 L277.0 18.5 L277.5 17.7 L278.0 16.4 L278.5 15.9 L279.0 18.0 L279.5 17.0 L280.0 17.3 L280.5 18.2 L281.0 18.8 L281.5 19.0 L282.0 19.1 L282.5 18.7 L283.0 17.9 L283.5 18.7 L284.0 18.7 L284.5 17.8 L285.0 18.6 L285.5 17.9 L286.0 18.7 L286.5 18.0 L287.0 19.2 L287.5 18.5 L288.0 18.6 L288.5 18.9 L289.0 18.7 L289.5 18.6 L290.0 17.7 L290.5 17.7 L291.0 16.3 L291.5 17.5 L292.0 18.5 L292.5 19.3 L293.0 19.4 L293.5 19.1 L294.0 18.9 L294.5 19.2 L295.0 18.9 L295.5 17.0 L296.0 18.0 L296.5 17.5 L297.0 16.8 L297.5 16.4 L298.0 16.8 L298.5 16.6 L299.0 17.6 L299.5 18.2 L300.0 18.9 L300.5 19.4 L301.0 19.4 L301.5 19.4 L302.0 19.1 L302.5 19.4 L303.0 19.0 L303.5 18.9 L304.0 18.0 L304.5 17.8 L305.0 18.3 L305.5 17.4 L306.0 18.5 L306.5 18.1 L307.0 18.4 L307.5 19.3 L308.0 18.5 L308.5 17.7 L309.0 16.9 L309.5 18.3 L310.0 18.6 L310.5 19.3 L311.0 18.8 L311.5 18.4 L312.0 18.7 L312.5 19.0 L313.0 18.8 L313.5 17.9 L314.0 17.6 L314.5 17.8 L315.0 17.1 L315.5 17.1 L316.0 17.9 L316.5 19.3 L317.0 18.8 L317.5 18.6 L318.0 17.1 L318.5 15.8 L319.0 17.7 L319.5 18.8 L320.0 18.7 L320.5 18.2 L321.0 17.5 L321.5 17.6 L322.0 17.1 L322.5 17.3 L323.0 16.6 L323.5 17.7 L324.0 17.6 L324.5 17.9 L325.0 18.2 L325.5 18.8 L326.0 18.7 L326.5 17.0 L327.0 17.2 L327.5 18.4 L328.0 18.5 L328.5 19.0 L329.0 19.5 L329.5 19.1 L330.0 18.7 L330.5 17.4 L331.0 16.2 L331.5 17.3 L332.0 16.7 L332.5 18.9 L333.0 19.3 L333.5 19.1 L334.0 19.1 L334.5 18.9 L335.0 18.9 L335.5 19.3 L336.0 18.8 L336.5 17.3 L337.0 17.1 L337.5 19.3 L338.0 18.6 L338.5 19.2 L339.0 19.0 L339.5 19.2 L340.0 19.5 L340.5 18.9 L341.0 18.0 L341.5 17.2 L342.0 17.1 L342.5 18.7 L343.0 18.8 L343.5 18.7 L344.0 18.3 L344.5 17.6 L345.0 17.3 L345.5 17.5 L346.0 17.5 L346.5 18.6 L347.0 18.7 L347.5 19.1 L348.0 19.1 L348.5 18.9 L349.0 18.9 L349.5 18.1 L350.0 18.4 L350.5 19.4 L351.0 18.8 L351.0 22.1 L350.5 21.8 L350.0 22.7 L349.5 23.0 L349.0 22.3 L348.5 22.2 L348.0 21.9 L347.5 22.0 L347.0 22.5 L346.5 22.4 L346.0 23.8 L345.5 23.6 L345.0 23.7 L344.5 23.7 L344.0 22.7 L343.5 22.4 L343.0 22.2 L342.5 22.3 L342.0 23.9 L341.5 23.6 L341.0 23.1 L340.5 22.0 L340.0 21.6 L339.5 21.8 L339.0 22.0 L338.5 21.9 L338.0 22.4 L337.5 21.7 L337.0 23.6 L336.5 24.1 L336.0 22.3 L335.5 21.7 L335.0 22.2 L334.5 22.3 L334.0 21.9 L333.5 22.0 L333.0 21.7 L332.5 22.3 L332.0 24.3 L331.5 23.9 L331.0 25.1 L330.5 23.3 L330.0 22.6 L329.5 21.9 L329.0 21.6 L328.5 22.0 L328.0 22.6 L327.5 22.5 L327.0 23.8 L326.5 23.8 L326.0 22.5 L325.5 22.2 L325.0 23.1 L324.5 23.2 L324.0 23.5 L323.5 23.5 L323.0 24.1 L322.5 24.0 L322.0 23.8 L321.5 23.4 L321.0 23.4 L320.5 22.9 L320.0 22.3 L319.5 22.2 L319.0 23.5 L318.5 25.4 L318.0 24.2 L317.5 22.7 L317.0 22.2 L316.5 21.9 L316.0 23.0 L315.5 24.0 L315.0 23.9 L314.5 23.3 L314.0 23.7 L313.5 23.0 L313.0 22.4 L312.5 22.2 L312.0 22.4 L311.5 22.8 L311.0 22.3 L310.5 21.8 L310.0 22.6 L309.5 22.8 L309.0 24.3 L308.5 23.3 L308.0 22.5 L307.5 21.8 L307.0 22.9 L306.5 23.2 L306.0 22.5 L305.5 23.5 L305.0 22.8 L304.5 23.4 L304.0 23.2 L303.5 22.2 L303.0 22.2 L302.5 21.7 L302.0 22.0 L301.5 21.7 L301.0 21.6 L300.5 21.6 L300.0 22.0 L299.5 23.0 L299.0 23.4 L298.5 24.5 L298.0 24.1 L297.5 24.9 L297.0 24.2 L296.5 23.8 L296.0 23.1 L295.5 24.1 L295.0 22.3 L294.5 21.9 L294.0 22.3 L293.5 22.1 L293.0 21.7 L292.5 21.8 L292.0 22.7 L291.5 23.9 L291.0 24.7 L290.5 23.2 L290.0 23.1 L289.5 22.5 L289.0 22.4 L288.5 22.2 L288.0 22.6 L287.5 22.6 L287.0 21.9 L286.5 23.3 L286.0 22.4 L285.5 23.3 L285.0 22.7 L284.5 23.4 L284.0 22.6 L283.5 22.5 L283.0 23.2 L282.5 22.3 L282.0 21.9 L281.5 22.2 L281.0 22.1 L280.5 23.1 L280.0 23.9 L279.5 24.3 L279.0 23.3 L278.5 25.0 L278.0 25.0 L277.5 23.6 L277.0 22.4 L276.5 22.2 L276.0 22.0 L275.5 22.3 L275.0 21.9 L274.5 21.8 L274.0 22.5 L273.5 21.7 L273.0 21.9 L272.5 22.5 L272.0 23.3 L271.5 24.9 L271.0 23.2 L270.5 22.4 L270.0 22.8 L269.5 22.4 L269.0 22.0 L268.5 22.3 L268.0 22.5 L267.5 22.9 L267.0 23.9 L266.5 22.1 L266.0 22.6 L265.5 22.1 L265.0 22.1 L264.5 22.0 L264.0 24.4 L263.5 23.9 L263.0 24.0 L262.5 23.5 L262.0 21.9 L261.5 22.0 L261.0 22.4 L260.5 22.1 L260.0 22.4 L259.5 22.0 L259.0 22.7 L258.5 23.8 L258.0 23.3 L257.5 24.0 L257.0 22.3 L256.5 22.3 L256.0 22.4 L255.5 21.7 L255.0 22.4 L254.5 22.2 L254.0 22.7 L253.5 23.1 L253.0 24.0 L252.5 25.1 L252.0 23.7 L251.5 22.2 L251.0 21.8 L250.5 21.6 L250.0 22.1 L249.5 22.0 L249.0 22.3 L248.5 21.9 L248.0 22.3 L247.5 22.2 L247.0 23.0 L246.5 24.1 L246.0 22.5 L245.5 22.2 L245.0 21.7 L244.5 22.3 L244.0 22.3 L243.5 22.3 L243.0 22.5 L242.5 23.1 L242.0 22.8 L241.5 22.2 L241.0 23.5 L240.5 23.5 L240.0 23.7 L239.5 24.0 L239.0 22.7 L238.5 22.5 L238.0 22.5 L237.5 21.9 L237.0 21.9 L236.5 22.1 L236.0 21.9 L235.5 22.3 L235.0 22.3 L234.5 23.8 L234.0 23.5 L233.5 23.5 L233.0 24.0 L232.5 23.7 L232.0 23.1 L231.5 22.6 L231.0 22.4 L230.5 22.3 L230.0 21.6 L229.5 22.4 L229.0 22.0 L228.5 22.6 L228.0 22.6 L227.5 24.0 L227.0 26.5 L226.5 22.6 L226.0 22.4 L225.5 22.9 L225.0 22.4 L224.5 21.6 L224.0 22.5 L223.5 21.9 L223.0 23.7 L222.5 24.0 L222.0 23.3 L221.5 23.2 L221.0 24.0 L220.5 24.6 L220.0 24.2 L219.5 22.9 L219.0 22.7 L218.5 22.0 L218.0 22.1 L217.5 22.3 L217.0 22.2 L216.5 21.6 L216.0 22.2 L215.5 22.3 L215.0 21.9 L214.5 22.8 L214.0 22.9 L213.5 22.6 L213.0 24.4 L212.5 23.6 L212.0 22.8 L211.5 23.2 L211.0 22.4 L210.5 22.6 L210.0 22.1 L209.5 21.6 L209.0 22.8 L208.5 22.2 L208.0 21.8 L207.5 21.8 L207.0 22.4 L206.5 22.7 L206.0 23.5 L205.5 24.3 L205.0 23.2 L204.5 22.4 L204.0 22.0 L203.5 22.3 L203.0 21.6 L202.5 21.6 L202.0 21.8 L201.5 22.3 L201.0 22.3 L200.5 22.0 L200.0 22.1 L199.5 22.1 L199.0 22.6 L198.5 23.7 L198.0 22.7 L197.5 22.1 L197.0 23.0 L196.5 23.9 L196.0 23.4 L195.5 22.1 L195.0 22.5 L194.5 21.9 L194.0 21.9 L193.5 21.4 L193.0 22.4 L192.5 22.3 L192.0 21.6 L191.5 21.6 L191.0 21.7 L190.5 21.7 L190.0 22.3 L189.5 21.8 L189.0 22.5 L188.5 22.2 L188.0 22.9 L187.5 23.4 L187.0 22.2 L186.5 22.0 L186.0 22.1 L185.5 21.9 L185.0 21.7 L184.5 22.0 L184.0 22.4 L183.5 23.7 L183.0 23.1 L182.5 22.0 L182.0 21.6 L181.5 21.9 L181.0 21.8 L180.5 22.2 L180.0 23.1 L179.5 24.0 L179.0 23.5 L178.5 22.5 L178.0 22.8 L177.5 24.1 L177.0 24.8 L176.5 26.2 L176.0 25.1 L175.5 22.8 L175.0 23.0 L174.5 22.7 L174.0 21.7 L173.5 22.6 L173.0 22.4 L172.5 24.4 L172.0 22.5 L171.5 22.7 L171.0 23.7 L170.5 24.1 L170.0 22.8 L169.5 22.7 L169.0 22.5 L168.5 22.0 L168.0 22.2 L167.5 21.9 L167.0 22.0 L166.5 21.8 L166.0 22.7 L165.5 22.1 L165.0 23.0 L164.5 23.3 L164.0 23.1 L163.5 22.8 L163.0 23.0 L162.5 22.4 L162.0 24.0 L161.5 24.4 L161.0 25.0 L160.5 23.7 L160.0 22.5 L159.5 22.7 L159.0 23.3 L158.5 23.9 L158.0 25.1 L157.5 23.4 L157.0 23.6 L156.5 23.5 L156.0 22.2 L155.5 22.1 L155.0 22.0 L154.5 22.8 L154.0 21.7 L153.5 22.1 L153.0 22.2 L152.5 22.6 L152.0 23.4 L151.5 22.9 L151.0 23.5 L150.5 22.0 L150.0 22.1 L149.5 22.2 L149.0 22.0 L148.5 21.8 L148.0 22.4 L147.5 21.9 L147.0 21.9 L146.5 22.6 L146.0 24.0 L145.5 23.3 L145.0 24.8 L144.5 24.3 L144.0 23.4 L143.5 23.0 L143.0 23.0 L142.5 23.6 L142.0 23.1 L141.5 23.7 L141.0 23.1 L140.5 23.1 L140.0 22.8 L139.5 22.2 L139.0 21.8 L138.5 22.6 L138.0 22.7 L137.5 21.8 L137.0 21.9 L136.5 22.2 L136.0 22.1 L135.5 22.3 L135.0 22.5 L134.5 23.1 L134.0 24.0 L133.5 23.7 L133.0 22.6 L132.5 22.3 L132.0 22.2 L131.5 21.6 L131.0 21.9 L130.5 22.8 L130.0 24.4 L129.5 24.3 L129.0 25.2 L128.5 23.5 L128.0 22.5 L127.5 22.7 L127.0 23.0 L126.5 24.5 L126.0 24.1 L125.5 22.9 L125.0 21.7 L124.5 22.3 L124.0 21.8 L123.5 22.6 L123.0 22.8 L122.5 22.9 L122.0 23.3 L121.5 22.8 L121.0 22.7 L120.5 22.4 L120.0 22.2 L119.5 21.7 L119.0 21.8 L118.5 22.6 L118.0 25.9 L117.5 23.6 L117.0 22.1 L116.5 21.7 L116.0 22.0 L115.5 22.0 L115.0 21.9 L114.5 21.7 L114.0 21.6 L113.5 21.8 L113.0 22.3 L112.5 22.9 L112.0 23.6 L111.5 23.6 L111.0 24.5 L110.5 24.4 L110.0 23.1 L109.5 21.7 L109.0 22.3 L108.5 23.3 L108.0 23.4 L107.5 23.6 L107.0 23.9 L106.5 22.4 L106.0 22.4 L105.5 22.2 L105.0 21.8 L104.5 22.5 L104.0 24.1 L103.5 25.2 L103.0 24.2 L102.5 24.6 L102.0 24.8 L101.5 25.0 L101.0 23.8 L100.5 24.7 L100.0 23.9 L99.5 22.1 L99.0 22.1 L98.5 21.8 L98.0 22.9 L97.5 22.9 L97.0 23.6 L96.5 22.7 L96.0 23.0 L95.5 22.0 L95.0 22.1 L94.5 22.4 L94.0 21.7 L93.5 22.0 L93.0 22.8 L92.5 24.1 L92.0 25.0 L91.5 24.0 L91.0 22.8 L90.5 22.2 L90.0 21.9 L89.5 22.4 L89.0 21.9 L88.5 21.7 L88.0 22.4 L87.5 21.8 L87.0 22.5 L86.5 22.7 L86.0 23.2 L85.5 22.9 L85.0 22.1 L84.5 21.9 L84.0 22.5 L83.5 22.1 L83.0 22.4 L82.5 21.7 L82.0 22.2 L81.5 21.9 L81.0 21.8 L80.5 21.8 L80.0 21.8 L79.5 22.2 L79.0 22.5 L78.5 23.0 L78.0 24.6 L77.5 23.7 L77.0 23.6 L76.5 24.9 L76.0 24.3 L75.5 23.1 L75.0 23.1 L74.5 23.0 L74.0 22.1 L73.5 22.5 L73.0 21.6 L72.5 21.7 L72.0 21.9 L71.5 21.8 L71.0 22.0 L70.5 22.6 L70.0 21.8 L69.5 23.4 L69.0 25.1 L68.5 23.0 L68.0 22.7 L67.5 23.3 L67.0 23.5 L66.5 23.5 L66.0 22.5 L65.5 22.3 L65.0 22.7 L64.5 21.8 L64.0 21.8 L63.5 22.0 L63.0 22.4 L62.5 21.9 L62.0 21.6 L61.5 21.7 L61.0 21.8 L60.5 24.0 L60.0 23.7 L59.5 25.8 L59.0 23.1 L58.5 23.9 L58.0 23.8 L57.5 24.6 L57.0 22.4 L56.5 22.4 L56.0 22.1 L55.5 21.7 L55.0 22.6 L54.5 22.2 L54.0 21.8 L53.5 21.7 L53.0 22.8 L52.5 23.4 L52.0 22.9 L51.5 25.1 L51.0 23.5 L50.5 22.9 L50.0 23.7 L49.5 23.6 L49.0 25.0 L48.5 24.7 L48.0 22.5 L47.5 21.8 L47.0 22.4 L46.5 22.7 L46.0 23.0 L45.5 23.7 L45.0 24.4 L44.5 23.4 L44.0 24.0 L43.5 22.9 L43.0 23.1 L42.5 22.4 L42.0 21.8 L41.5 22.9 L41.0 23.0 L40.5 22.9 L40.0 24.7 L39.5 24.4 L39.0 23.7 L38.5 23.8 L38.0 22.7 L37.5 23.5 L37.0 23.5 L36.5 22.8 L36.0 23.8 L35.5 24.0 L35.0 23.5 L34.5 22.8 L34.0 22.4 L33.5 22.3 L33.0 22.0 L32.5 22.0 L32.0 21.9 L31.5 22.5 L31.0 22.2 L30.5 24.4 L30.0 22.6 L29.5 23.5 L29.0 24.3 L28.5 24.2 L28.0 23.2 L27.5 23.4 L27.0 23.0 L26.5 22.2 L26.0 21.9 L25.5 22.8 L25.0 23.2 L24.5 25.2 L24.0 24.0 L23.5 23.5 L23.0 23.3 L22.5 24.1 L22.0 23.5 L21.5 22.4 L21.0 22.2 L20.5 23.2 L20.0 21.9 L19.5 22.4 L19.0 21.5 L18.5 22.3 L18.0 22.0 L17.5 21.6 L17.0 22.0 L16.5 21.8 L16.0 23.0 L15.5 23.8 L15.0 24.5 L14.5 25.9 L14.0 25.1 L13.5 24.0 L13.0 23.1 L12.5 22.4 L12.0 22.9 L11.5 22.2 L11.0 21.9 L10.5 22.0 L10.0 21.9 L9.5 22.1 L9.0 21.9 L8.5 21.8 L8.0 22.1 L7.5 21.5 L7.0 21.9 L6.5 22.6 L6.0 22.6 L5.5 23.1 L5.0 22.7 L4.5 22.6 L4.0 22.9 L3.5 23.0 L3.0 24.1 L2.5 23.1 L2.0 22.1 L1.5 22.2 L1.0 21.7 L0.5 22.0 L0.0 22.2 Z" fill="#7a4cf0"/></svg>
<div class="a" style="left:412px;top:457.8px;width:43px;height:10px;background:#1a1040;"></div>
<div class="t" style="left:415.5px;top:459.75px;font-size:5.3px;line-height:6.89px;color:#e6e6e6;transform:scaleX(0.923);transform-origin:left;">Eventname.mp3</div>
<div class="a" style="left:741.5px;top:474px;width:20.5px;height:10px;background:#1a1040;"></div>
<div class="t" style="left:648.2px;width:200px;text-align:center;top:474.10px;font-size:8px;line-height:10.4px;color:#f0f0f0;letter-spacing:-0.4px;">fx</div>
<div class="a" style="left:755.3px;top:478.6px;width:1.1px;height:1.1px;background:#9c9c9c;"></div>
<div class="a" style="left:757.6999999999999px;top:478.6px;width:1.1px;height:1.1px;background:#9c9c9c;"></div>
<div class="a" style="left:760.0999999999999px;top:478.6px;width:1.1px;height:1.1px;background:#9c9c9c;"></div>
<div class="a" style="left:111px;top:485px;width:681px;height:16.5px;background:#222222;"></div>
<div class="a" style="left:258.5px;top:484.5px;width:92.5px;height:0px;"></div>
<div class="a" style="left:258.5px;top:457px;width:92.5px;height:27px;background:#3a3a3a;"></div>
<div class="a" style="left:173.2px;top:249px;width:1px;height:252px;background:#94541a;"></div>
<div class="a" style="left:207.2px;top:249px;width:1px;height:252px;background:#94541a;"></div>
<div class="a" style="left:283.2px;top:249px;width:1px;height:252px;background:#94541a;"></div>
<div class="a" style="left:325.6px;top:249px;width:1px;height:252px;background:#2a7036;"></div>
<div class="a" style="left:410.3px;top:249px;width:1px;height:252px;background:#2a7036;"></div>
<div class="a" style="left:258.3px;top:255px;width:1px;height:246px;background:#907028;"></div>
<div class="a" style="left:351px;top:257px;width:1px;height:244px;background:#8a8a8a;"></div>
<svg class="a" style="left:173.0px;top:249.3px;" width="8.5" height="9" viewBox="0 0 8.5 9"><path d="M0 0 H8.2 V6 H2.2 L0.8 8.5 H0 Z" fill="#f0962a"/><path d="M4.6 1.4 V4.8 M3.6 2 L4.6 1.4" stroke="#3a2a10" stroke-width="0.7" fill="none"/></svg>
<svg class="a" style="left:207.0px;top:249.3px;" width="8.5" height="9" viewBox="0 0 8.5 9"><path d="M0 0 H8.2 V6 H2.2 L0.8 8.5 H0 Z" fill="#f0962a"/><path d="M4.6 1.4 V4.8 M3.6 2 L4.6 1.4" stroke="#3a2a10" stroke-width="0.7" fill="none"/></svg>
<svg class="a" style="left:283.0px;top:249.3px;" width="8.5" height="9" viewBox="0 0 8.5 9"><path d="M0 0 H8.2 V6 H2.2 L0.8 8.5 H0 Z" fill="#f0962a"/><path d="M4.6 1.4 V4.8 M3.6 2 L4.6 1.4" stroke="#3a2a10" stroke-width="0.7" fill="none"/></svg>
<svg class="a" style="left:325.7px;top:249.3px;" width="8.5" height="9" viewBox="0 0 8.5 9"><path d="M0 0 H8.2 V6 H2.2 L0.8 8.5 H0 Z" fill="#30c060"/><path d="M4.6 1.4 V4.8 M3.6 2 L4.6 1.4" stroke="#3a2a10" stroke-width="0.7" fill="none"/></svg>
<svg class="a" style="left:403.3px;top:249.3px;" width="8.5" height="9" viewBox="0 0 8.5 9"><path d="M0 0 H8.2 V8.5 H7.4 L6 6 H0 Z" fill="#30c060"/><path d="M3.2 1.4 V3.6 H5.4 M4.6 1.4 V4.8" stroke="#103a20" stroke-width="0.7" fill="none"/></svg>
<svg class="a" style="left:349.3px;top:256.5px;" width="5" height="7" viewBox="0 0 5 7"><path d="M0.3 0.3 H4.7 V4.5 L2.5 6.7 L0.3 4.5 Z" fill="#f0f0f0"/></svg>
<div class="a" style="left:224.5px;top:244.3px;width:12px;height:3.5px;background:#e8e8e8;border-radius:1px;"></div>
<div class="a" style="left:792px;top:248px;width:6.5px;height:258px;background:#262626;"></div>
<div class="a" style="left:792.5px;top:258px;width:5.5px;height:103px;background:#505050;"></div>
<div class="a" style="left:793.8px;top:307.5px;width:3px;height:0.6px;background:#888;"></div>
<div class="a" style="left:793.8px;top:309px;width:3px;height:0.6px;background:#888;"></div>
<svg class="a" style="left:793.2px;top:253.3px;" width="4" height="3" viewBox="0 0 4 3"><path d="M2 0 L4 3 H0 Z" fill="#ddd"/></svg>
<div class="a" style="left:793px;top:246.5px;width:4.5px;height:2.5px;background:#e0e0e0;"></div>
<div class="t" style="left:695px;width:200px;text-align:center;top:477.20px;font-size:4px;line-height:5.2px;color:#ccc;">▼</div>
<div class="t" style="left:695px;width:200px;text-align:center;top:483.50px;font-size:6px;line-height:7.8px;color:#ddd;">+</div>
<div class="a" style="left:793.5px;top:492.2px;width:3px;height:0.6px;background:#666;"></div>
<div class="t" style="left:695px;width:200px;text-align:center;top:493.40px;font-size:6px;line-height:7.8px;color:#ddd;">−</div>
<div class="a" style="left:111px;top:501.5px;width:681px;height:4.3px;background:#333;"></div>
<div class="a" style="left:121px;top:501.5px;width:217px;height:4.3px;background:#4a4a4a;"></div>
<svg class="a" style="left:114.5px;top:502px;" width="3" height="3.5" viewBox="0 0 3 3.5"><path d="M3 0 V3.5 L0 1.75 Z" fill="#ccc"/></svg>
<svg class="a" style="left:771px;top:502.3px;" width="2.5" height="3" viewBox="0 0 2.5 3"><path d="M0 0 L2.5 1.5 L0 3 Z" fill="#bbb"/></svg>
<div class="t" style="left:677.5px;width:200px;text-align:center;top:499.70px;font-size:6px;line-height:7.8px;color:#ddd;">+</div>
<div class="a" style="left:783px;top:501.5px;width:0.6px;height:4px;background:#888;"></div>
<div class="t" style="left:688px;width:200px;text-align:center;top:499.70px;font-size:6px;line-height:7.8px;color:#ddd;">−</div>
<svg class="a" style="left:792.5px;top:500.5px;" width="5" height="5" viewBox="0 0 5 5"><circle cx="2" cy="2" r="1.6" fill="none" stroke="#ddd" stroke-width="0.7"/><path d="M3.2 3.2 L4.8 4.8" stroke="#ddd" stroke-width="0.8"/></svg>
<div class="a" style="left:111px;top:508px;width:687px;height:14px;background:#262626;"></div>
<div class="a" style="left:116.7px;top:512.3px;width:5.6px;height:5.6px;background:#f0562a;border-radius:50%;"></div>
<div class="a" style="left:126.2px;top:510px;width:10px;height:9.7px;background:#3a8ee0;"></div>
<svg class="a" style="left:126.2px;top:510.5px;" width="10.5" height="9" viewBox="0 0 10.5 9"><path d="M2.2 5.6 A3 2.2 0 0 1 4.5 1.6 H5.8 M8.3 3.4 A3 2.2 0 0 1 6 7.4 H4.7" fill="none" stroke="#222" stroke-width="1.6"/><path d="M2.2 5.6 A3 2.2 0 0 1 4.5 1.6 H5.8 M8.3 3.4 A3 2.2 0 0 1 6 7.4 H4.7" fill="none" stroke="#eee" stroke-width="0.7"/><path d="M5.6 0.4 L7.2 1.6 L5.6 2.8 Z M4.9 6.2 L3.3 7.4 L4.9 8.6 Z" fill="#eee"/></svg>
<svg class="a" style="left:140.3px;top:512.3px;" width="5" height="5.6" viewBox="0 0 5 5.6"><rect x="0" y="0" width="0.9" height="5.6" fill="#888"/><path d="M1.4 0.2 L5 2.8 L1.4 5.4 Z" fill="#ddd"/></svg>
<svg class="a" style="left:152.3px;top:512.2px;" width="5" height="5.8" viewBox="0 0 5 5.8"><path d="M0 0 L4.9 2.9 L0 5.8 Z" fill="#eee"/></svg>
<div class="a" style="left:163.9px;top:512.2px;width:2px;height:5.8px;background:#eee;"></div>
<div class="a" style="left:167.6px;top:512.2px;width:2px;height:5.8px;background:#eee;"></div>
<div class="a" style="left:175.6px;top:512.3px;width:5.5px;height:5.5px;background:#eee;"></div>
<svg class="a" style="left:187.5px;top:512.5px;" width="5" height="5.2" viewBox="0 0 5 5.2"><rect x="0" y="0" width="0.9" height="5.2" fill="#ddd"/><path d="M5 0 V5.2 L1.2 2.6 Z" fill="#ddd"/></svg>
<svg class="a" style="left:200.3px;top:512.5px;" width="5" height="5.2" viewBox="0 0 5 5.2"><rect x="4.1" y="0" width="0.9" height="5.2" fill="#ddd"/><path d="M0 0 V5.2 L3.8 2.6 Z" fill="#ddd"/></svg>
<svg class="a" style="left:211.6px;top:512.5px;" width="6" height="5.2" viewBox="0 0 6 5.2"><path d="M3 0 V5.2 L0 2.6 Z M6 0 V5.2 L3 2.6 Z" fill="#ddd"/></svg>
<svg class="a" style="left:223.3px;top:512.5px;" width="6" height="5.2" viewBox="0 0 6 5.2"><path d="M0 0 V5.2 L3 2.6 Z M3 0 V5.2 L6 2.6 Z" fill="#ddd"/></svg>
<div class="a" style="left:234px;top:510.5px;width:0.8px;height:9px;background:#444;"></div>
<div class="a" style="left:237px;top:510px;width:10px;height:9.7px;background:#3a8ee0;"></div>
<svg class="a" style="left:239px;top:511px;" width="6" height="7" viewBox="0 0 6 7"><path d="M0.5 0.5 L5.5 3 L3.2 3.8 L2.2 6.5 Z" fill="#eee"/></svg>
<svg class="a" style="left:250.5px;top:514px;" width="3" height="2" viewBox="0 0 3 2"><path d="M0 0 H3 L1.5 2 Z" fill="#ccc"/></svg>
<svg class="a" style="left:260px;top:511.5px;" width="7" height="7" viewBox="0 0 7 7"><path d="M0.5 6.5 L0.5 3 L4 3 L4 0.5" fill="none" stroke="#ccc" stroke-width="0.9"/><rect x="4" y="0" width="2.5" height="2.5" fill="#ccc"/></svg>
<svg class="a" style="left:271.5px;top:511.5px;" width="6" height="7" viewBox="0 0 6 7"><path d="M2 0.5 H0.5 V6.5 H2 M4 0.5 H5.5 V6.5 H4" fill="none" stroke="#aaa" stroke-width="0.8"/></svg>
<svg class="a" style="left:300.5px;top:512px;" width="5.5" height="5.5" viewBox="0 0 5.5 5.5"><path d="M0.5 0.5 L5 5 M5 0.5 L0.5 5" stroke="#e05a3a" stroke-width="0.9"/></svg>
<svg class="a" style="left:311.5px;top:512px;" width="7" height="6" viewBox="0 0 7 6"><rect x="0.5" y="0.5" width="2.5" height="5" fill="#ddd"/><rect x="3.8" y="0.5" width="2.5" height="5" fill="#e0603a"/><rect x="3.2" y="0" width="0.6" height="6" fill="#444"/></svg>
<svg class="a" style="left:323.5px;top:512px;" width="7" height="6" viewBox="0 0 7 6"><rect x="0.5" y="0.5" width="2.5" height="5" fill="#e0603a"/><rect x="3.8" y="0.5" width="2.5" height="5" fill="#ddd"/><rect x="3.2" y="0" width="0.6" height="6" fill="#444"/></svg>
<svg class="a" style="left:335.5px;top:512px;" width="7" height="6" viewBox="0 0 7 6"><rect x="0.5" y="0.5" width="2.5" height="5" fill="#ddd"/><rect x="3.8" y="0.5" width="2.5" height="5" fill="#e0603a"/><rect x="3.2" y="0" width="0.6" height="6" fill="#444"/></svg>
<svg class="a" style="left:347.5px;top:512px;" width="7" height="6" viewBox="0 0 7 6"><rect x="0.5" y="0.5" width="2.5" height="5" fill="#e0603a"/><rect x="3.8" y="0.5" width="2.5" height="5" fill="#ddd"/><rect x="3.2" y="0" width="0.6" height="6" fill="#444"/></svg>
<svg class="a" style="left:359.5px;top:512px;" width="7" height="6" viewBox="0 0 7 6"><rect x="0.5" y="0.5" width="2.5" height="5" fill="#ddd"/><rect x="3.8" y="0.5" width="2.5" height="5" fill="#e0603a"/><rect x="3.2" y="0" width="0.6" height="6" fill="#444"/></svg>
<svg class="a" style="left:371px;top:511.5px;" width="6" height="7" viewBox="0 0 6 7"><path d="M1.5 3 V2 A1.5 1.5 0 0 1 4.5 2 V3" fill="none" stroke="#ddd" stroke-width="0.8"/><rect x="0.5" y="3" width="5" height="4" fill="#ddd"/></svg>
<div class="a" style="left:382.5px;top:510.5px;width:0.8px;height:9px;background:#444;"></div>
<svg class="a" style="left:387.5px;top:511.5px;" width="6" height="7" viewBox="0 0 6 7"><path d="M0.5 0.5 H5.5 V4.5 H1.5 V7 H0.5 Z" fill="#f09030"/></svg>
<div class="a" style="left:398.5px;top:513.6px;width:2.6px;height:2.6px;background:#30c060;border-radius:50%;"></div>
<div class="a" style="left:403px;top:513.6px;width:2.6px;height:2.6px;background:#30c060;border-radius:50%;"></div>
<div class="a" style="left:410px;top:510.5px;width:0.8px;height:9px;background:#444;"></div>
<div class="a" style="left:413px;top:510px;width:10px;height:9.7px;background:#3a8ee0;"></div>
<svg class="a" style="left:414.5px;top:511px;" width="7" height="7" viewBox="0 0 7 7"><path d="M1 6.5 V3.5 A2.5 2.5 0 0 1 6 3.5 V6.5" fill="none" stroke="#e0503a" stroke-width="1.6"/></svg>
<svg class="a" style="left:426.5px;top:511.5px;" width="7" height="7" viewBox="0 0 7 7"><path d="M0.5 6.5 V0.5 L3.5 3.5 L6.5 0.5 V6.5 Z" fill="#ddd"/></svg>
<svg class="a" style="left:438.5px;top:511.5px;" width="8" height="7" viewBox="0 0 8 7"><rect x="0.5" y="1" width="6" height="5" fill="none" stroke="#ccc" stroke-width="0.8"/><rect x="3" y="2" width="4.5" height="3" fill="#3a8ee0"/></svg>
<svg class="a" style="left:450.5px;top:514px;" width="3" height="2" viewBox="0 0 3 2"><path d="M0 0 H3 L1.5 2 Z" fill="#ccc"/></svg>
<svg class="a" style="left:460px;top:511.5px;" width="8" height="7" viewBox="0 0 8 7"><rect x="0.5" y="1" width="4" height="4" fill="#3a8ee0"/><rect x="3" y="3" width="4" height="4" fill="#ddd"/></svg>
<svg class="a" style="left:472px;top:511.5px;" width="8" height="7" viewBox="0 0 8 7"><rect x="0.5" y="0.5" width="5" height="4" fill="#ddd"/><path d="M4 4 V7 M6 4 V7" stroke="#ddd" stroke-width="0.8"/></svg>
<div class="a" style="left:484px;top:510.5px;width:0.8px;height:9px;background:#444;"></div>
<svg class="a" style="left:487.5px;top:511.5px;" width="7" height="7" viewBox="0 0 7 7"><circle cx="2" cy="5" r="1.5" fill="#30c060"/><circle cx="5" cy="5" r="1.5" fill="#3a8ee0"/><circle cx="3.5" cy="2" r="1.5" fill="#e0503a"/></svg>
<div class="a" style="left:500px;top:510.5px;width:0.8px;height:9px;background:#444;"></div>
<svg class="a" style="left:503.5px;top:511.5px;" width="8" height="7" viewBox="0 0 8 7"><rect x="0.5" y="0.5" width="5" height="4" fill="#ddd"/><rect x="2" y="5" width="5.5" height="1.3" fill="#3a8ee0"/></svg>
<svg class="a" style="left:515px;top:511px;" width="8" height="8" viewBox="0 0 8 8"><rect x="0.5" y="0" width="4" height="1.3" fill="#3a8ee0"/><rect x="1.5" y="2.5" width="5" height="4.5" fill="none" stroke="#ddd" stroke-width="0.8"/></svg>
<svg class="a" style="left:527px;top:511px;" width="8" height="8" viewBox="0 0 8 8"><rect x="0.5" y="0" width="4" height="1.3" fill="#3a8ee0"/><rect x="1.5" y="2.5" width="5" height="4.5" fill="#ddd"/><path d="M4 3.5 V6 M2.7 4.7 H5.3" stroke="#333" stroke-width="0.7"/></svg>
<svg class="a" style="left:653px;top:511px;" width="6" height="8" viewBox="0 0 6 8"><path d="M1 0.5 H5 V4 L3 7.5 L1 4 Z" fill="#eee"/></svg>
<div class="t" style="left:664.8px;top:511.69px;font-size:5.4px;line-height:7.02px;color:#dcdcdc;transform:scaleX(1.009);transform-origin:left;">00:00:28,16</div>
<svg class="a" style="left:701px;top:511.5px;" width="9" height="7" viewBox="0 0 9 7"><rect x="0.5" y="0.5" width="8" height="6" fill="none" stroke="#ccc" stroke-width="0.8"/><rect x="6" y="0" width="3" height="2" fill="#f0c020"/></svg>
<svg class="a" style="left:750.5px;top:511.5px;" width="9" height="7" viewBox="0 0 9 7"><rect x="0.5" y="0.5" width="8" height="6" fill="#ccc"/><rect x="1.5" y="1.5" width="6" height="4" fill="#333"/><rect x="6" y="0" width="3" height="2" fill="#f0c020"/></svg>
<div class="t" style="left:764px;top:511.69px;font-size:5.4px;line-height:7.02px;color:#6a6a6a;transform:scaleX(0.937);transform-origin:left;">00:00:11,14</div>
<div class="a" style="left:0px;top:525px;width:798px;height:8px;background:#2a2a2a;"></div>
<div class="t" style="left:5.5px;top:525.42px;font-size:5.2px;line-height:6.76px;color:#dadada;transform:scaleX(0.954);transform-origin:left;">Complete: 00:00:19</div>
<div class="t" style="right:12.299999999999955px;top:525.42px;font-size:5.2px;line-height:6.76px;color:#dadada;transform:scaleX(0.941);transform-origin:right;">Record Time (2 channels): 1:04:21:55</div>
<div class="a" style="left:0px;top:12px;width:800.5px;height:2px;background:#3a5bd9;"></div>
<div class="a" style="left:0px;top:29px;width:800.5px;height:2px;background:#3a5bd9;"></div>
<div class="a" style="left:0px;top:12px;width:2px;height:19px;background:#3a5bd9;"></div>
<div class="a" style="left:798.5px;top:12px;width:2px;height:19px;background:#3a5bd9;"></div>
<div class="a" style="left:0px;top:32px;width:800.5px;height:2px;background:#3a5bd9;"></div>
<div class="a" style="left:0px;top:243px;width:800.5px;height:2px;background:#3a5bd9;"></div>
<div class="a" style="left:0px;top:32px;width:2px;height:213px;background:#3a5bd9;"></div>
<div class="a" style="left:798.5px;top:32px;width:2px;height:213px;background:#3a5bd9;"></div>
<div class="a" style="left:1px;top:246px;width:109px;height:2px;background:#3a5bd9;"></div>
<div class="a" style="left:1px;top:521px;width:109px;height:2px;background:#3a5bd9;"></div>
<div class="a" style="left:1px;top:246px;width:2px;height:277px;background:#3a5bd9;"></div>
<div class="a" style="left:108px;top:246px;width:2px;height:277px;background:#3a5bd9;"></div>
<div class="a" style="left:111px;top:246px;width:689.5px;height:2px;background:#3a5bd9;"></div>
<div class="a" style="left:111px;top:265px;width:689.5px;height:2px;background:#3a5bd9;"></div>
<div class="a" style="left:111px;top:246px;width:2px;height:21px;background:#3a5bd9;"></div>
<div class="a" style="left:798.5px;top:246px;width:2px;height:21px;background:#3a5bd9;"></div>
<div class="a" style="left:111px;top:268px;width:689.5px;height:2px;background:#3a5bd9;"></div>
<div class="a" style="left:111px;top:505.8px;width:689.5px;height:2px;background:#3a5bd9;"></div>
<div class="a" style="left:111px;top:268px;width:2px;height:239.8px;background:#3a5bd9;"></div>
<div class="a" style="left:798.5px;top:268px;width:2px;height:239.8px;background:#3a5bd9;"></div>
<div class="a" style="left:111px;top:507.5px;width:689.5px;height:2px;background:#3a5bd9;"></div>
<div class="a" style="left:111px;top:520.7px;width:689.5px;height:2px;background:#3a5bd9;"></div>
<div class="a" style="left:111px;top:507.5px;width:2px;height:15.200000000000045px;background:#3a5bd9;"></div>
<div class="a" style="left:798.5px;top:507.5px;width:2px;height:15.200000000000045px;background:#3a5bd9;"></div>
<div class="a" style="left:0px;top:523.8px;width:800.5px;height:2px;background:#3a5bd9;"></div>
<div class="a" style="left:0px;top:532px;width:800.5px;height:2px;background:#3a5bd9;"></div>
<div class="a" style="left:0px;top:523.8px;width:2px;height:10.200000000000045px;background:#3a5bd9;"></div>
<div class="a" style="left:798.5px;top:523.8px;width:2px;height:10.200000000000045px;background:#3a5bd9;"></div>
<svg class="a" style="left:205.9px;top:5.6px;overflow:visible;" width="20" height="20" viewBox="0 0 20 20"><circle cx="10" cy="10" r="10.2" fill="#4169e1"/><path d="M7.9 7.3 L11 5.6 V15.1" fill="none" stroke="#fff" stroke-width="1.9" stroke-linejoin="round" stroke-linecap="butt" transform="translate(10 10.1) scale(1.06) translate(-10 -10)"/></svg>
<svg class="a" style="left:435.5px;top:119.6px;overflow:visible;" width="20" height="20" viewBox="0 0 20 20"><circle cx="10" cy="10" r="10.2" fill="#4169e1"/><path d="M6.9 8.4 A3.1 3.1 0 0 1 13.1 8.2 C13.1 10.6 7 12.4 7 15.1 H13.5" fill="none" stroke="#fff" stroke-width="1.9" stroke-linejoin="round" stroke-linecap="butt" transform="translate(10 10.1) scale(1.06) translate(-10 -10)"/></svg>
<svg class="a" style="left:418.1px;top:247.5px;overflow:visible;" width="20" height="20" viewBox="0 0 20 20"><circle cx="10" cy="10" r="10.2" fill="#4169e1"/><path d="M7.1 5.6 H12.8 L9.7 9.1 A3.05 3.05 0 1 1 6.8 13.6" fill="none" stroke="#fff" stroke-width="1.9" stroke-linejoin="round" stroke-linecap="butt" transform="translate(10 10.1) scale(1.06) translate(-10 -10)"/></svg>
<svg class="a" style="left:38.8px;top:333.8px;overflow:visible;" width="20" height="20" viewBox="0 0 20 20"><circle cx="10" cy="10" r="10.2" fill="#4169e1"/><path d="M11.9 15.2 V5.6 L6.3 12.3 H14.1" fill="none" stroke="#fff" stroke-width="1.9" stroke-linejoin="round" stroke-linecap="butt" transform="translate(10 10.1) scale(1.06) translate(-10 -10)"/></svg>
<svg class="a" style="left:414.5px;top:374.4px;overflow:visible;" width="20" height="20" viewBox="0 0 20 20"><circle cx="10" cy="10" r="10.2" fill="#4169e1"/><path d="M12.8 5.6 H8.1 L7.6 9.9 C8.3 9.4 9.1 9.1 10 9.1 A3 3 0 0 1 10 15.1 C8.7 15.1 7.6 14.5 7 13.6" fill="none" stroke="#fff" stroke-width="1.9" stroke-linejoin="round" stroke-linecap="butt" transform="translate(10 10.1) scale(1.06) translate(-10 -10)"/></svg>
<svg class="a" style="left:276px;top:505px;overflow:visible;" width="20" height="20" viewBox="0 0 20 20"><circle cx="10" cy="10" r="10.2" fill="#4169e1"/><path d="M11.5 5.2 L6.95 11.3 M13.35 11.9 A3.3 3.3 0 1 1 6.75 11.9 A3.3 3.3 0 1 1 13.35 11.9" fill="none" stroke="#fff" stroke-width="1.9" stroke-linejoin="round" stroke-linecap="butt" transform="translate(10 10.1) scale(1.06) translate(-10 -10)"/></svg>
<svg class="a" style="left:592px;top:518.3px;overflow:visible;" width="20" height="20" viewBox="0 0 20 20"><circle cx="10" cy="10" r="10.2" fill="#4169e1"/><path d="M6.6 5.6 H13.4 L9 15.2" fill="none" stroke="#fff" stroke-width="1.9" stroke-linejoin="round" stroke-linecap="butt" transform="translate(10 10.1) scale(1.06) translate(-10 -10)"/></svg>
</div></body></html>
